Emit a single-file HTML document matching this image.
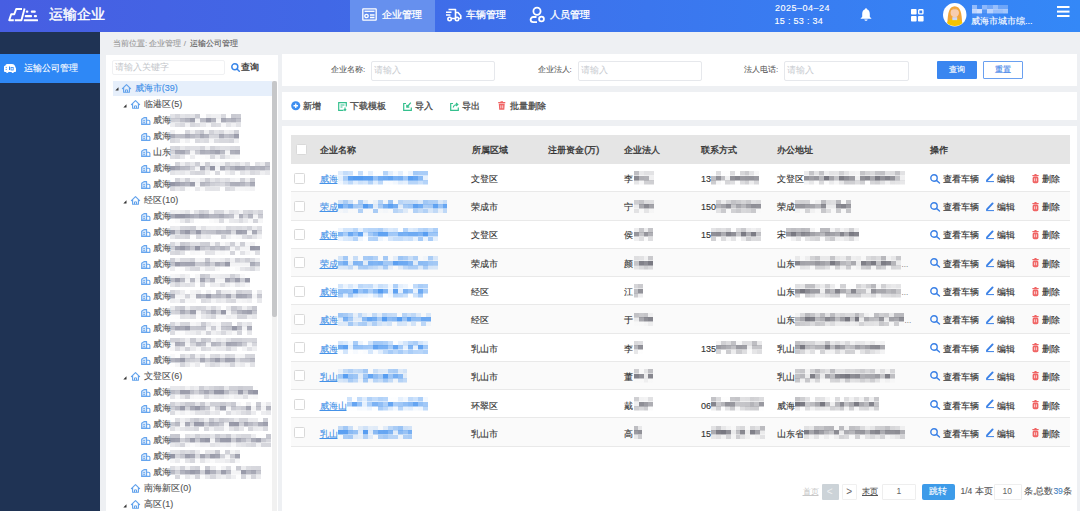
<!DOCTYPE html>
<html><head><meta charset="utf-8">
<style>
*{margin:0;padding:0;box-sizing:border-box}
html,body{width:1080px;height:511px;overflow:hidden}
body{position:relative;background:#eef0f3;font-family:"Liberation Sans",sans-serif;color:#333}
.a{position:absolute;white-space:nowrap;-webkit-text-stroke:0.12px currentColor}
.bl i{position:absolute;display:block}
svg{position:absolute;overflow:visible}
</style></head><body>

<div class="a" style="left:0px;top:0px;width:1080px;height:32px;background:linear-gradient(90deg,#475ee2 0%,#4168e6 30%,#3b76ee 60%,#3488f7 100%);"></div>
<svg style="left:4px;top:6px" width="40" height="20" viewBox="0 0 40 20"><g fill="none" stroke="#fff" stroke-width="1.9" stroke-linejoin="round"><path d="M18 3 H12.2 L10.3 8.2 H7.2 L5.2 14.2 H9.8"/><path d="M20.6 2.6 L17.4 14.3 H10.8"/></g><g fill="#fff"><rect x="21.8" y="4.6" width="2.6" height="2.2" rx="1"/><rect x="26.8" y="4.6" width="5" height="2.2" rx="1"/><rect x="20.8" y="9" width="7.2" height="2.2" rx="0.8"/><rect x="29.8" y="9" width="3.2" height="2.2" rx="1"/><rect x="19.8" y="13.2" width="14.2" height="2" rx="0.5"/></g></svg>
<div class="a" style="left:49.3px;top:5px;font-size:13.8px;line-height:20px;color:#fff;font-weight:400;-webkit-text-stroke:0.4px #fff;">运输企业</div>
<div class="a" style="left:350px;top:0px;width:85px;height:32px;background:#6690ee;"></div>
<svg style="left:362px;top:8px" width="15" height="13" viewBox="0 0 15 13"><g fill="none" stroke="#fff" stroke-width="1.3"><rect x="0.8" y="0.8" width="13.4" height="11.4" rx="0.5"/><path d="M2.5 3.3 H12.5"/><circle cx="4.5" cy="8" r="1.7"/><path d="M8 7 H12.5 M8 9.5 H12.5"/></g></svg>
<div class="a" style="left:381.5px;top:7.5px;font-size:10.2px;line-height:14px;color:#fff;font-weight:400;-webkit-text-stroke:0.3px #fff;">企业管理</div>
<svg style="left:445px;top:8px" width="17" height="14" viewBox="0 0 17 14"><g fill="none" stroke="#fff" stroke-width="1.6" stroke-linejoin="round"><path d="M3.5 1.5 H10.5 V10.5 H6.5"/><path d="M10.5 4.5 H13 L15.8 7.8 V10.5 H14.2"/><circle cx="4.6" cy="11" r="1.7"/><circle cx="12" cy="11" r="1.7"/><path d="M1 4.3 H6.5 M1 7 H5.5 M2.5 10.5 H2.9"/></g></svg>
<div class="a" style="left:465.5px;top:7.5px;font-size:10.2px;line-height:14px;color:#fff;font-weight:400;-webkit-text-stroke:0.3px #fff;">车辆管理</div>
<svg style="left:529px;top:6px" width="17" height="17" viewBox="0 0 17 17"><g fill="none" stroke="#fff" stroke-width="1.8"><circle cx="8" cy="5.3" r="3.6"/><path d="M7.5 11 H4.2 A2.6 2.6 0 0 0 4.2 16.2 H8"/><circle cx="12.5" cy="13" r="2.4"/></g></svg>
<div class="a" style="left:549.5px;top:7.5px;font-size:10.2px;line-height:14px;color:#fff;font-weight:400;-webkit-text-stroke:0.3px #fff;">人员管理</div>
<div class="a" style="left:775px;top:1.5px;font-size:9px;line-height:13px;color:#fff;font-weight:400;letter-spacing:0.5px">2025–04–24</div>
<div class="a" style="left:774.5px;top:15px;font-size:9px;line-height:13px;color:#fff;font-weight:400;letter-spacing:0.3px">15 : 53 : 34</div>
<svg style="left:860px;top:8px" width="12" height="13" viewBox="0 0 12 13"><path fill="#fff" d="M6 0.3 C6.8 0.3 7 1 7 1.3 C9 2 9.8 3.8 9.8 6 V8.8 L11.6 10.8 H0.4 L2.2 8.8 V6 C2.2 3.8 3 2 5 1.3 C5 1 5.2 0.3 6 0.3 Z M4.3 11.5 H7.7 C7.5 12.4 6.8 12.8 6 12.8 C5.2 12.8 4.5 12.4 4.3 11.5Z"/></svg>
<svg style="left:911px;top:8.5px" width="13" height="13" viewBox="0 0 13 13"><g fill="#fff"><rect x="0" y="0" width="5.6" height="5.6" rx="0.8"/><rect x="0" y="7" width="5.6" height="5.6" rx="0.8"/><rect x="7" y="7" width="5.6" height="5.6" rx="0.8"/></g><rect x="7.7" y="0.7" width="4.2" height="4.2" rx="0.6" fill="none" stroke="#fff" stroke-width="1.4"/></svg>
<svg style="left:942.5px;top:3px" width="23.5" height="23.5" viewBox="0 0 24 24"><circle cx="12" cy="12" r="12" fill="#fff"/><clipPath id="cav"><circle cx="12" cy="12" r="11.5"/></clipPath><g clip-path="url(#cav)"><path d="M4.5 20 C5 10 6 3.5 12 3.2 C18 3.5 19 10 19.5 20 Z" fill="#f2a53a"/><ellipse cx="12" cy="10" rx="4.3" ry="4.6" fill="#f7cdb0"/><path d="M7.5 8 C8 4.5 16 4.5 16.5 8 C14 6 10 6 7.5 8Z" fill="#f0a030"/><path d="M3 25 C3.5 18 7 16 12 16 C17 16 20.5 18 21 25Z" fill="#f5c400"/><rect x="9.5" y="14.5" width="5" height="3" fill="#cfd8f5"/></g></svg>
<div class="a" style="left:972.0px;top:4.8px;width:36.0px;height:13.5px;background:linear-gradient(90deg,rgba(215,228,255,0.58) 0px 5px,rgba(215,228,255,0.09) 5px 10px,rgba(215,228,255,0.55) 10px 15px,rgba(215,228,255,0.39) 15px 21px,rgba(215,228,255,0.61) 21px 26px,rgba(215,228,255,0.35) 26px 31px,rgba(215,228,255,0.35) 31px 36px) 0 0.0px/100% 4.5px no-repeat,linear-gradient(90deg,rgba(215,228,255,0.84) 0px 5px,rgba(215,228,255,0.94) 5px 10px,rgba(215,228,255,0.18) 10px 15px,rgba(215,228,255,0.82) 15px 21px,rgba(215,228,255,0.61) 21px 26px,rgba(215,228,255,0.62) 26px 31px,rgba(215,228,255,0.68) 31px 36px) 0 4.5px/100% 4.5px no-repeat,linear-gradient(90deg,rgba(215,228,255,0.07) 0px 5px,rgba(215,228,255,0.13) 5px 10px,rgba(215,228,255,0.10) 10px 15px,rgba(215,228,255,0.10) 15px 21px,rgba(215,228,255,0.04) 21px 26px,rgba(215,228,255,0.00) 26px 31px,rgba(215,228,255,0.00) 31px 36px) 0 9.0px/100% 4.5px no-repeat;filter:blur(0.6px)"></div>
<div class="a" style="left:971px;top:15px;font-size:9.2px;line-height:12px;color:#fff;font-weight:400;">威海市城市综...</div>
<svg style="left:1057px;top:6px" width="12.5" height="11" viewBox="0 0 12.5 11"><g fill="#fff"><rect x="0" y="0" width="12.5" height="2"/><rect x="0" y="4.6" width="12.5" height="2"/><rect x="0" y="9" width="12.5" height="2"/></g></svg>
<div class="a" style="left:0px;top:32px;width:100px;height:479px;background:#1f3354;"></div>
<div class="a" style="left:0px;top:54px;width:100px;height:29px;background:#2e88f6;"></div>
<svg style="left:4px;top:64px" width="12" height="9" viewBox="0 0 12 9"><path fill="#fff" d="M1.5 1.5 C1.5 0.5 2.5 0 3.5 0 H8 C9.5 0 10.5 0.8 11 2 L12 4.5 V7 C12 7.6 11.6 8 11 8 H10 A1.3 1.3 0 0 1 7.5 8 H4.5 A1.3 1.3 0 0 1 2 8 H1.2 C0.5 8 0 7.5 0 7 V3 C0 2 0.6 1.6 1.5 1.5Z"/><g fill="#2e88f6"><circle cx="2.2" cy="3.3" r="0.6"/><circle cx="2.2" cy="5.3" r="0.6"/><rect x="5" y="2.5" width="1" height="3.5"/><rect x="7" y="3.5" width="2.2" height="2.5" fill="none" stroke="#2e88f6" stroke-width="0.8"/></g></svg>
<div class="a" style="left:23.5px;top:62px;font-size:9px;line-height:12px;color:#fff;font-weight:400;">运输公司管理</div>
<div class="a" style="left:113px;top:38px;font-size:8px;line-height:12px;color:#9a9a9a;font-weight:400;">当前位置: 企业管理 / <span style="color:#5a5a5a;margin-left:2px">运输公司管理</span></div>
<div class="a" style="left:106px;top:55px;width:172px;height:456px;background:#fff;"></div>
<div class="a" style="left:112px;top:60px;width:113px;height:14.5px;background:#fff;border:1px solid #f0f1f3;border-radius:2px"></div>
<div class="a" style="left:115px;top:61px;font-size:8.5px;line-height:12px;color:#c4c7cc;font-weight:400;-webkit-text-stroke:0.01px #c4c7cc;">请输入关键字</div>
<svg style="left:231px;top:62.5px" width="9" height="9" viewBox="0 0 9 9"><g fill="none" stroke="#3a86e8" stroke-width="1.5"><circle cx="3.8" cy="3.8" r="3"/><path d="M6 6 L8.3 8.3" stroke-linecap="round"/></g></svg>
<div class="a" style="left:241px;top:61px;font-size:9px;line-height:12px;color:#383838;font-weight:400;-webkit-text-stroke:0.35px #383838;">查询</div>
<div class="a" style="left:112.5px;top:81px;width:160px;height:15px;background:#e6effb;"></div>
<div class="a" style="left:272px;top:81px;width:5px;height:430px;background:#f1f1f1;"></div>
<div class="a" style="left:272.3px;top:80.5px;width:4.5px;height:236px;background:#c6c7c9;border-radius:2px"></div>
<svg style="left:114.5px;top:87px" width="4" height="4" viewBox="0 0 4 4"><path d="M3.5 0.3 V3.5 H0.3Z" fill="#333"/></svg>
<svg style="left:121.8px;top:84px" width="9" height="9" viewBox="0 0 9 9"><path d="M0.4 4.6 L4.5 0.7 L8.6 4.6 M1.6 3.6 V8.2 H7.4 V3.6" fill="none" stroke="#62a2ec" stroke-width="1.15" stroke-linejoin="round" stroke-linecap="round"/><path d="M3.5 8.2 V5.9 H5.5 V8.2" fill="none" stroke="#62a2ec" stroke-width="1"/></svg>
<div class="a" style="left:134.8px;top:82px;font-size:9px;line-height:13px;color:#3d8ee8;font-weight:400;">威海市(39)</div>
<svg style="left:123px;top:103.5px" width="4" height="4" viewBox="0 0 4 4"><path d="M3.5 0.3 V3.5 H0.3Z" fill="#333"/></svg>
<svg style="left:131px;top:100.0px" width="9" height="9" viewBox="0 0 9 9"><path d="M0.4 4.6 L4.5 0.7 L8.6 4.6 M1.6 3.6 V8.2 H7.4 V3.6" fill="none" stroke="#62a2ec" stroke-width="1.15" stroke-linejoin="round" stroke-linecap="round"/><path d="M3.5 8.2 V5.9 H5.5 V8.2" fill="none" stroke="#62a2ec" stroke-width="1"/></svg>
<div class="a" style="left:144.3px;top:98.0px;font-size:9px;line-height:13px;color:#555;font-weight:400;">临港区(5)</div>
<svg style="left:140.5px;top:116.5px" width="9.5" height="8" viewBox="0 0 9.5 8"><path d="M0.7 7.4 V2.2 L3 0.6 H5.6 V7.4 Z" fill="#d6e7fb" stroke="#66a5ee" stroke-width="1.1" stroke-linejoin="round"/><path d="M5.6 3.2 H7.6 C8.4 3.2 8.9 3.7 8.9 4.5 V7.4 H0.5" fill="none" stroke="#66a5ee" stroke-width="1.1"/><path d="M2.2 3.6 H4 M2.2 5.4 H4" stroke="#66a5ee" stroke-width="0.9"/></svg>
<div class="a" style="left:153px;top:114.0px;font-size:9px;line-height:13px;color:#555;font-weight:400;">威海</div>
<div class="a" style="left:170.0px;top:113.8px;width:71.0px;height:13.5px;background:linear-gradient(90deg,rgba(130,132,150,0.23) 0px 5px,rgba(130,132,150,0.33) 5px 10px,rgba(130,132,150,0.22) 10px 15px,rgba(130,132,150,0.26) 15px 20px,rgba(130,132,150,0.23) 20px 25px,rgba(130,132,150,0.42) 25px 30px,rgba(130,132,150,0.01) 30px 36px,rgba(130,132,150,0.17) 36px 41px,rgba(130,132,150,0.13) 41px 46px,rgba(130,132,150,0.13) 46px 51px,rgba(130,132,150,0.30) 51px 56px,rgba(130,132,150,0.01) 56px 61px,rgba(130,132,150,0.43) 61px 66px,rgba(130,132,150,0.41) 66px 71px) 0 0.0px/100% 4.5px no-repeat,linear-gradient(90deg,rgba(130,132,150,0.39) 0px 5px,rgba(130,132,150,0.37) 5px 10px,rgba(130,132,150,0.52) 10px 15px,rgba(130,132,150,0.61) 15px 20px,rgba(130,132,150,0.76) 20px 25px,rgba(130,132,150,0.09) 25px 30px,rgba(130,132,150,0.55) 30px 36px,rgba(130,132,150,0.80) 36px 41px,rgba(130,132,150,0.60) 41px 46px,rgba(130,132,150,0.09) 46px 51px,rgba(130,132,150,0.69) 51px 56px,rgba(130,132,150,0.58) 56px 61px,rgba(130,132,150,0.62) 61px 66px,rgba(130,132,150,0.49) 66px 71px) 0 4.5px/100% 4.5px no-repeat,linear-gradient(90deg,rgba(130,132,150,0.14) 0px 5px,rgba(130,132,150,0.27) 5px 10px,rgba(130,132,150,0.31) 10px 15px,rgba(130,132,150,0.10) 15px 20px,rgba(130,132,150,0.32) 20px 25px,rgba(130,132,150,0.27) 25px 30px,rgba(130,132,150,0.18) 30px 36px,rgba(130,132,150,0.07) 36px 41px,rgba(130,132,150,0.30) 41px 46px,rgba(130,132,150,0.27) 46px 51px,rgba(130,132,150,0.06) 51px 56px,rgba(130,132,150,0.22) 56px 61px,rgba(130,132,150,0.12) 61px 66px,rgba(130,132,150,0.23) 66px 71px) 0 9.0px/100% 4.5px no-repeat;filter:blur(0.7px)"></div>
<svg style="left:140.5px;top:132.5px" width="9.5" height="8" viewBox="0 0 9.5 8"><path d="M0.7 7.4 V2.2 L3 0.6 H5.6 V7.4 Z" fill="#d6e7fb" stroke="#66a5ee" stroke-width="1.1" stroke-linejoin="round"/><path d="M5.6 3.2 H7.6 C8.4 3.2 8.9 3.7 8.9 4.5 V7.4 H0.5" fill="none" stroke="#66a5ee" stroke-width="1.1"/><path d="M2.2 3.6 H4 M2.2 5.4 H4" stroke="#66a5ee" stroke-width="0.9"/></svg>
<div class="a" style="left:153px;top:130.0px;font-size:9px;line-height:13px;color:#555;font-weight:400;">威海</div>
<div class="a" style="left:170.0px;top:129.8px;width:69.0px;height:13.5px;background:linear-gradient(90deg,rgba(130,132,150,0.13) 0px 5px,rgba(130,132,150,0.01) 5px 10px,rgba(130,132,150,0.01) 10px 15px,rgba(130,132,150,0.32) 15px 20px,rgba(130,132,150,0.14) 20px 25px,rgba(130,132,150,0.33) 25px 30px,rgba(130,132,150,0.44) 30px 34px,rgba(130,132,150,0.13) 34px 39px,rgba(130,132,150,0.36) 39px 44px,rgba(130,132,150,0.24) 44px 49px,rgba(130,132,150,0.30) 49px 54px,rgba(130,132,150,0.13) 54px 59px,rgba(130,132,150,0.17) 59px 64px,rgba(130,132,150,0.38) 64px 69px) 0 0.0px/100% 4.5px no-repeat,linear-gradient(90deg,rgba(130,132,150,0.67) 0px 5px,rgba(130,132,150,0.52) 5px 10px,rgba(130,132,150,0.53) 10px 15px,rgba(130,132,150,0.67) 15px 20px,rgba(130,132,150,0.56) 20px 25px,rgba(130,132,150,0.49) 25px 30px,rgba(130,132,150,0.69) 30px 34px,rgba(130,132,150,0.61) 34px 39px,rgba(130,132,150,0.32) 39px 44px,rgba(130,132,150,0.34) 44px 49px,rgba(130,132,150,0.68) 49px 54px,rgba(130,132,150,0.50) 54px 59px,rgba(130,132,150,0.56) 59px 64px,rgba(130,132,150,0.78) 64px 69px) 0 4.5px/100% 4.5px no-repeat,linear-gradient(90deg,rgba(130,132,150,0.31) 0px 5px,rgba(130,132,150,0.25) 5px 10px,rgba(130,132,150,0.05) 10px 15px,rgba(130,132,150,0.13) 15px 20px,rgba(130,132,150,0.01) 20px 25px,rgba(130,132,150,0.30) 25px 30px,rgba(130,132,150,0.25) 30px 34px,rgba(130,132,150,0.29) 34px 39px,rgba(130,132,150,0.07) 39px 44px,rgba(130,132,150,0.28) 44px 49px,rgba(130,132,150,0.31) 49px 54px,rgba(130,132,150,0.31) 54px 59px,rgba(130,132,150,0.34) 59px 64px,rgba(130,132,150,0.13) 64px 69px) 0 9.0px/100% 4.5px no-repeat;filter:blur(0.7px)"></div>
<svg style="left:140.5px;top:148.5px" width="9.5" height="8" viewBox="0 0 9.5 8"><path d="M0.7 7.4 V2.2 L3 0.6 H5.6 V7.4 Z" fill="#d6e7fb" stroke="#66a5ee" stroke-width="1.1" stroke-linejoin="round"/><path d="M5.6 3.2 H7.6 C8.4 3.2 8.9 3.7 8.9 4.5 V7.4 H0.5" fill="none" stroke="#66a5ee" stroke-width="1.1"/><path d="M2.2 3.6 H4 M2.2 5.4 H4" stroke="#66a5ee" stroke-width="0.9"/></svg>
<div class="a" style="left:153px;top:146.0px;font-size:9px;line-height:13px;color:#555;font-weight:400;">山东</div>
<div class="a" style="left:170.0px;top:145.8px;width:70.0px;height:13.5px;background:linear-gradient(90deg,rgba(130,132,150,0.30) 0px 5px,rgba(130,132,150,0.34) 5px 10px,rgba(130,132,150,0.20) 10px 15px,rgba(130,132,150,0.28) 15px 20px,rgba(130,132,150,0.26) 20px 25px,rgba(130,132,150,0.26) 25px 30px,rgba(130,132,150,0.34) 30px 35px,rgba(130,132,150,0.14) 35px 40px,rgba(130,132,150,0.37) 40px 45px,rgba(130,132,150,0.29) 45px 50px,rgba(130,132,150,0.25) 50px 55px,rgba(130,132,150,0.26) 55px 60px,rgba(130,132,150,0.30) 60px 65px,rgba(130,132,150,0.32) 65px 70px) 0 0.0px/100% 4.5px no-repeat,linear-gradient(90deg,rgba(130,132,150,0.35) 0px 5px,rgba(130,132,150,0.68) 5px 10px,rgba(130,132,150,0.71) 10px 15px,rgba(130,132,150,0.52) 15px 20px,rgba(130,132,150,0.09) 20px 25px,rgba(130,132,150,0.41) 25px 30px,rgba(130,132,150,0.65) 30px 35px,rgba(130,132,150,0.61) 35px 40px,rgba(130,132,150,0.67) 40px 45px,rgba(130,132,150,0.75) 45px 50px,rgba(130,132,150,0.56) 50px 55px,rgba(130,132,150,0.09) 55px 60px,rgba(130,132,150,0.64) 60px 65px,rgba(130,132,150,0.68) 65px 70px) 0 4.5px/100% 4.5px no-repeat,linear-gradient(90deg,rgba(130,132,150,0.27) 0px 5px,rgba(130,132,150,0.32) 5px 10px,rgba(130,132,150,0.20) 10px 15px,rgba(130,132,150,0.01) 15px 20px,rgba(130,132,150,0.15) 20px 25px,rgba(130,132,150,0.01) 25px 30px,rgba(130,132,150,0.01) 30px 35px,rgba(130,132,150,0.04) 35px 40px,rgba(130,132,150,0.31) 40px 45px,rgba(130,132,150,0.10) 45px 50px,rgba(130,132,150,0.33) 50px 55px,rgba(130,132,150,0.17) 55px 60px,rgba(130,132,150,0.09) 60px 65px,rgba(130,132,150,0.07) 65px 70px) 0 9.0px/100% 4.5px no-repeat;filter:blur(0.7px)"></div>
<svg style="left:140.5px;top:164.5px" width="9.5" height="8" viewBox="0 0 9.5 8"><path d="M0.7 7.4 V2.2 L3 0.6 H5.6 V7.4 Z" fill="#d6e7fb" stroke="#66a5ee" stroke-width="1.1" stroke-linejoin="round"/><path d="M5.6 3.2 H7.6 C8.4 3.2 8.9 3.7 8.9 4.5 V7.4 H0.5" fill="none" stroke="#66a5ee" stroke-width="1.1"/><path d="M2.2 3.6 H4 M2.2 5.4 H4" stroke="#66a5ee" stroke-width="0.9"/></svg>
<div class="a" style="left:153px;top:162.0px;font-size:9px;line-height:13px;color:#555;font-weight:400;">威海</div>
<div class="a" style="left:170.0px;top:161.8px;width:100.0px;height:13.5px;background:linear-gradient(90deg,rgba(130,132,150,0.01) 0px 5px,rgba(130,132,150,0.34) 5px 10px,rgba(130,132,150,0.14) 10px 15px,rgba(130,132,150,0.29) 15px 20px,rgba(130,132,150,0.20) 20px 25px,rgba(130,132,150,0.40) 25px 30px,rgba(130,132,150,0.08) 30px 35px,rgba(130,132,150,0.38) 35px 40px,rgba(130,132,150,0.14) 40px 45px,rgba(130,132,150,0.10) 45px 50px,rgba(130,132,150,0.12) 50px 55px,rgba(130,132,150,0.34) 55px 60px,rgba(130,132,150,0.22) 60px 65px,rgba(130,132,150,0.28) 65px 70px,rgba(130,132,150,0.15) 70px 75px,rgba(130,132,150,0.28) 75px 80px,rgba(130,132,150,0.01) 80px 85px,rgba(130,132,150,0.24) 85px 90px,rgba(130,132,150,0.16) 90px 95px,rgba(130,132,150,0.44) 95px 100px) 0 0.0px/100% 4.5px no-repeat,linear-gradient(90deg,rgba(130,132,150,0.79) 0px 5px,rgba(130,132,150,0.69) 5px 10px,rgba(130,132,150,0.56) 10px 15px,rgba(130,132,150,0.53) 15px 20px,rgba(130,132,150,0.35) 20px 25px,rgba(130,132,150,0.09) 25px 30px,rgba(130,132,150,0.75) 30px 35px,rgba(130,132,150,0.35) 35px 40px,rgba(130,132,150,0.85) 40px 45px,rgba(130,132,150,0.09) 45px 50px,rgba(130,132,150,0.72) 50px 55px,rgba(130,132,150,0.46) 55px 60px,rgba(130,132,150,0.63) 60px 65px,rgba(130,132,150,0.75) 65px 70px,rgba(130,132,150,0.71) 70px 75px,rgba(130,132,150,0.54) 75px 80px,rgba(130,132,150,0.66) 80px 85px,rgba(130,132,150,0.60) 85px 90px,rgba(130,132,150,0.64) 90px 95px,rgba(130,132,150,0.51) 95px 100px) 0 4.5px/100% 4.5px no-repeat,linear-gradient(90deg,rgba(130,132,150,0.23) 0px 5px,rgba(130,132,150,0.18) 5px 10px,rgba(130,132,150,0.20) 10px 15px,rgba(130,132,150,0.13) 15px 20px,rgba(130,132,150,0.30) 20px 25px,rgba(130,132,150,0.34) 25px 30px,rgba(130,132,150,0.32) 30px 35px,rgba(130,132,150,0.14) 35px 40px,rgba(130,132,150,0.03) 40px 45px,rgba(130,132,150,0.31) 45px 50px,rgba(130,132,150,0.01) 50px 55px,rgba(130,132,150,0.13) 55px 60px,rgba(130,132,150,0.23) 60px 65px,rgba(130,132,150,0.03) 65px 70px,rgba(130,132,150,0.23) 70px 75px,rgba(130,132,150,0.16) 75px 80px,rgba(130,132,150,0.31) 80px 85px,rgba(130,132,150,0.26) 85px 90px,rgba(130,132,150,0.13) 90px 95px,rgba(130,132,150,0.19) 95px 100px) 0 9.0px/100% 4.5px no-repeat;filter:blur(0.7px)"></div>
<svg style="left:140.5px;top:180.5px" width="9.5" height="8" viewBox="0 0 9.5 8"><path d="M0.7 7.4 V2.2 L3 0.6 H5.6 V7.4 Z" fill="#d6e7fb" stroke="#66a5ee" stroke-width="1.1" stroke-linejoin="round"/><path d="M5.6 3.2 H7.6 C8.4 3.2 8.9 3.7 8.9 4.5 V7.4 H0.5" fill="none" stroke="#66a5ee" stroke-width="1.1"/><path d="M2.2 3.6 H4 M2.2 5.4 H4" stroke="#66a5ee" stroke-width="0.9"/></svg>
<div class="a" style="left:153px;top:178.0px;font-size:9px;line-height:13px;color:#555;font-weight:400;">威海</div>
<div class="a" style="left:170.0px;top:177.8px;width:85.0px;height:13.5px;background:linear-gradient(90deg,rgba(130,132,150,0.01) 0px 5px,rgba(130,132,150,0.34) 5px 10px,rgba(130,132,150,0.18) 10px 15px,rgba(130,132,150,0.37) 15px 20px,rgba(130,132,150,0.12) 20px 25px,rgba(130,132,150,0.10) 25px 30px,rgba(130,132,150,0.18) 30px 35px,rgba(130,132,150,0.39) 35px 40px,rgba(130,132,150,0.21) 40px 45px,rgba(130,132,150,0.30) 45px 50px,rgba(130,132,150,0.21) 50px 55px,rgba(130,132,150,0.26) 55px 60px,rgba(130,132,150,0.12) 60px 65px,rgba(130,132,150,0.09) 65px 70px,rgba(130,132,150,0.37) 70px 75px,rgba(130,132,150,0.15) 75px 80px,rgba(130,132,150,0.42) 80px 85px) 0 0.0px/100% 4.5px no-repeat,linear-gradient(90deg,rgba(130,132,150,0.85) 0px 5px,rgba(130,132,150,0.76) 5px 10px,rgba(130,132,150,0.67) 10px 15px,rgba(130,132,150,0.60) 15px 20px,rgba(130,132,150,0.80) 20px 25px,rgba(130,132,150,0.09) 25px 30px,rgba(130,132,150,0.59) 30px 35px,rgba(130,132,150,0.51) 35px 40px,rgba(130,132,150,0.39) 40px 45px,rgba(130,132,150,0.35) 45px 50px,rgba(130,132,150,0.31) 50px 55px,rgba(130,132,150,0.43) 55px 60px,rgba(130,132,150,0.64) 60px 65px,rgba(130,132,150,0.65) 65px 70px,rgba(130,132,150,0.59) 70px 75px,rgba(130,132,150,0.47) 75px 80px,rgba(130,132,150,0.68) 80px 85px) 0 4.5px/100% 4.5px no-repeat,linear-gradient(90deg,rgba(130,132,150,0.31) 0px 5px,rgba(130,132,150,0.19) 5px 10px,rgba(130,132,150,0.26) 10px 15px,rgba(130,132,150,0.03) 15px 20px,rgba(130,132,150,0.01) 20px 25px,rgba(130,132,150,0.18) 25px 30px,rgba(130,132,150,0.05) 30px 35px,rgba(130,132,150,0.21) 35px 40px,rgba(130,132,150,0.22) 40px 45px,rgba(130,132,150,0.21) 45px 50px,rgba(130,132,150,0.01) 50px 55px,rgba(130,132,150,0.30) 55px 60px,rgba(130,132,150,0.25) 60px 65px,rgba(130,132,150,0.07) 65px 70px,rgba(130,132,150,0.08) 70px 75px,rgba(130,132,150,0.09) 75px 80px,rgba(130,132,150,0.10) 80px 85px) 0 9.0px/100% 4.5px no-repeat;filter:blur(0.7px)"></div>
<svg style="left:123px;top:199.5px" width="4" height="4" viewBox="0 0 4 4"><path d="M3.5 0.3 V3.5 H0.3Z" fill="#333"/></svg>
<svg style="left:131px;top:196.0px" width="9" height="9" viewBox="0 0 9 9"><path d="M0.4 4.6 L4.5 0.7 L8.6 4.6 M1.6 3.6 V8.2 H7.4 V3.6" fill="none" stroke="#62a2ec" stroke-width="1.15" stroke-linejoin="round" stroke-linecap="round"/><path d="M3.5 8.2 V5.9 H5.5 V8.2" fill="none" stroke="#62a2ec" stroke-width="1"/></svg>
<div class="a" style="left:144.3px;top:194.0px;font-size:9px;line-height:13px;color:#555;font-weight:400;">经区(10)</div>
<svg style="left:140.5px;top:212.5px" width="9.5" height="8" viewBox="0 0 9.5 8"><path d="M0.7 7.4 V2.2 L3 0.6 H5.6 V7.4 Z" fill="#d6e7fb" stroke="#66a5ee" stroke-width="1.1" stroke-linejoin="round"/><path d="M5.6 3.2 H7.6 C8.4 3.2 8.9 3.7 8.9 4.5 V7.4 H0.5" fill="none" stroke="#66a5ee" stroke-width="1.1"/><path d="M2.2 3.6 H4 M2.2 5.4 H4" stroke="#66a5ee" stroke-width="0.9"/></svg>
<div class="a" style="left:153px;top:210.0px;font-size:9px;line-height:13px;color:#555;font-weight:400;">威海</div>
<div class="a" style="left:170.0px;top:209.8px;width:93.0px;height:13.5px;background:linear-gradient(90deg,rgba(130,132,150,0.13) 0px 5px,rgba(130,132,150,0.11) 5px 10px,rgba(130,132,150,0.16) 10px 15px,rgba(130,132,150,0.23) 15px 20px,rgba(130,132,150,0.06) 20px 24px,rgba(130,132,150,0.23) 24px 29px,rgba(130,132,150,0.39) 29px 34px,rgba(130,132,150,0.33) 34px 39px,rgba(130,132,150,0.09) 39px 44px,rgba(130,132,150,0.32) 44px 49px,rgba(130,132,150,0.31) 49px 54px,rgba(130,132,150,0.11) 54px 59px,rgba(130,132,150,0.25) 59px 64px,rgba(130,132,150,0.20) 64px 69px,rgba(130,132,150,0.09) 69px 73px,rgba(130,132,150,0.32) 73px 78px,rgba(130,132,150,0.37) 78px 83px,rgba(130,132,150,0.27) 83px 88px,rgba(130,132,150,0.35) 88px 93px) 0 0.0px/100% 4.5px no-repeat,linear-gradient(90deg,rgba(130,132,150,0.68) 0px 5px,rgba(130,132,150,0.84) 5px 10px,rgba(130,132,150,0.85) 10px 15px,rgba(130,132,150,0.78) 15px 20px,rgba(130,132,150,0.69) 20px 24px,rgba(130,132,150,0.61) 24px 29px,rgba(130,132,150,0.75) 29px 34px,rgba(130,132,150,0.69) 34px 39px,rgba(130,132,150,0.58) 39px 44px,rgba(130,132,150,0.59) 44px 49px,rgba(130,132,150,0.67) 49px 54px,rgba(130,132,150,0.55) 54px 59px,rgba(130,132,150,0.49) 59px 64px,rgba(130,132,150,0.09) 64px 69px,rgba(130,132,150,0.65) 69px 73px,rgba(130,132,150,0.35) 73px 78px,rgba(130,132,150,0.60) 78px 83px,rgba(130,132,150,0.09) 83px 88px,rgba(130,132,150,0.42) 88px 93px) 0 4.5px/100% 4.5px no-repeat,linear-gradient(90deg,rgba(130,132,150,0.01) 0px 5px,rgba(130,132,150,0.04) 5px 10px,rgba(130,132,150,0.17) 10px 15px,rgba(130,132,150,0.32) 15px 20px,rgba(130,132,150,0.15) 20px 24px,rgba(130,132,150,0.02) 24px 29px,rgba(130,132,150,0.01) 29px 34px,rgba(130,132,150,0.01) 34px 39px,rgba(130,132,150,0.04) 39px 44px,rgba(130,132,150,0.07) 44px 49px,rgba(130,132,150,0.28) 49px 54px,rgba(130,132,150,0.03) 54px 59px,rgba(130,132,150,0.17) 59px 64px,rgba(130,132,150,0.19) 64px 69px,rgba(130,132,150,0.28) 69px 73px,rgba(130,132,150,0.17) 73px 78px,rgba(130,132,150,0.06) 78px 83px,rgba(130,132,150,0.35) 83px 88px,rgba(130,132,150,0.08) 88px 93px) 0 9.0px/100% 4.5px no-repeat;filter:blur(0.7px)"></div>
<svg style="left:140.5px;top:228.5px" width="9.5" height="8" viewBox="0 0 9.5 8"><path d="M0.7 7.4 V2.2 L3 0.6 H5.6 V7.4 Z" fill="#d6e7fb" stroke="#66a5ee" stroke-width="1.1" stroke-linejoin="round"/><path d="M5.6 3.2 H7.6 C8.4 3.2 8.9 3.7 8.9 4.5 V7.4 H0.5" fill="none" stroke="#66a5ee" stroke-width="1.1"/><path d="M2.2 3.6 H4 M2.2 5.4 H4" stroke="#66a5ee" stroke-width="0.9"/></svg>
<div class="a" style="left:153px;top:226.0px;font-size:9px;line-height:13px;color:#555;font-weight:400;">威海</div>
<div class="a" style="left:170.0px;top:225.8px;width:92.0px;height:13.5px;background:linear-gradient(90deg,rgba(130,132,150,0.18) 0px 5px,rgba(130,132,150,0.16) 5px 10px,rgba(130,132,150,0.33) 10px 15px,rgba(130,132,150,0.35) 15px 20px,rgba(130,132,150,0.40) 20px 26px,rgba(130,132,150,0.11) 26px 31px,rgba(130,132,150,0.24) 31px 36px,rgba(130,132,150,0.14) 36px 41px,rgba(130,132,150,0.13) 41px 46px,rgba(130,132,150,0.15) 46px 51px,rgba(130,132,150,0.12) 51px 56px,rgba(130,132,150,0.32) 56px 61px,rgba(130,132,150,0.28) 61px 66px,rgba(130,132,150,0.31) 66px 72px,rgba(130,132,150,0.27) 72px 77px,rgba(130,132,150,0.36) 77px 82px,rgba(130,132,150,0.17) 82px 87px,rgba(130,132,150,0.28) 87px 92px) 0 0.0px/100% 4.5px no-repeat,linear-gradient(90deg,rgba(130,132,150,0.79) 0px 5px,rgba(130,132,150,0.40) 5px 10px,rgba(130,132,150,0.69) 10px 15px,rgba(130,132,150,0.83) 15px 20px,rgba(130,132,150,0.53) 20px 26px,rgba(130,132,150,0.82) 26px 31px,rgba(130,132,150,0.44) 31px 36px,rgba(130,132,150,0.48) 36px 41px,rgba(130,132,150,0.49) 41px 46px,rgba(130,132,150,0.62) 46px 51px,rgba(130,132,150,0.57) 51px 56px,rgba(130,132,150,0.61) 56px 61px,rgba(130,132,150,0.30) 61px 66px,rgba(130,132,150,0.78) 66px 72px,rgba(130,132,150,0.73) 72px 77px,rgba(130,132,150,0.09) 77px 82px,rgba(130,132,150,0.70) 82px 87px,rgba(130,132,150,0.30) 87px 92px) 0 4.5px/100% 4.5px no-repeat,linear-gradient(90deg,rgba(130,132,150,0.18) 0px 5px,rgba(130,132,150,0.31) 5px 10px,rgba(130,132,150,0.28) 10px 15px,rgba(130,132,150,0.33) 15px 20px,rgba(130,132,150,0.01) 20px 26px,rgba(130,132,150,0.29) 26px 31px,rgba(130,132,150,0.13) 31px 36px,rgba(130,132,150,0.16) 36px 41px,rgba(130,132,150,0.02) 41px 46px,rgba(130,132,150,0.01) 46px 51px,rgba(130,132,150,0.34) 51px 56px,rgba(130,132,150,0.12) 56px 61px,rgba(130,132,150,0.04) 61px 66px,rgba(130,132,150,0.07) 66px 72px,rgba(130,132,150,0.27) 72px 77px,rgba(130,132,150,0.35) 77px 82px,rgba(130,132,150,0.22) 82px 87px,rgba(130,132,150,0.10) 87px 92px) 0 9.0px/100% 4.5px no-repeat;filter:blur(0.7px)"></div>
<svg style="left:140.5px;top:244.5px" width="9.5" height="8" viewBox="0 0 9.5 8"><path d="M0.7 7.4 V2.2 L3 0.6 H5.6 V7.4 Z" fill="#d6e7fb" stroke="#66a5ee" stroke-width="1.1" stroke-linejoin="round"/><path d="M5.6 3.2 H7.6 C8.4 3.2 8.9 3.7 8.9 4.5 V7.4 H0.5" fill="none" stroke="#66a5ee" stroke-width="1.1"/><path d="M2.2 3.6 H4 M2.2 5.4 H4" stroke="#66a5ee" stroke-width="0.9"/></svg>
<div class="a" style="left:153px;top:242.0px;font-size:9px;line-height:13px;color:#555;font-weight:400;">威海</div>
<div class="a" style="left:170.0px;top:241.8px;width:90.0px;height:13.5px;background:linear-gradient(90deg,rgba(130,132,150,0.31) 0px 5px,rgba(130,132,150,0.13) 5px 10px,rgba(130,132,150,0.44) 10px 15px,rgba(130,132,150,0.39) 15px 20px,rgba(130,132,150,0.26) 20px 25px,rgba(130,132,150,0.25) 25px 30px,rgba(130,132,150,0.39) 30px 35px,rgba(130,132,150,0.40) 35px 40px,rgba(130,132,150,0.10) 40px 45px,rgba(130,132,150,0.34) 45px 50px,rgba(130,132,150,0.06) 50px 55px,rgba(130,132,150,0.15) 55px 60px,rgba(130,132,150,0.39) 60px 65px,rgba(130,132,150,0.07) 65px 70px,rgba(130,132,150,0.40) 70px 75px,rgba(130,132,150,0.07) 75px 80px,rgba(130,132,150,0.12) 80px 85px,rgba(130,132,150,0.01) 85px 90px) 0 0.0px/100% 4.5px no-repeat,linear-gradient(90deg,rgba(130,132,150,0.37) 0px 5px,rgba(130,132,150,0.74) 5px 10px,rgba(130,132,150,0.84) 10px 15px,rgba(130,132,150,0.66) 15px 20px,rgba(130,132,150,0.46) 20px 25px,rgba(130,132,150,0.85) 25px 30px,rgba(130,132,150,0.49) 30px 35px,rgba(130,132,150,0.41) 35px 40px,rgba(130,132,150,0.59) 40px 45px,rgba(130,132,150,0.49) 45px 50px,rgba(130,132,150,0.61) 50px 55px,rgba(130,132,150,0.49) 55px 60px,rgba(130,132,150,0.09) 60px 65px,rgba(130,132,150,0.31) 65px 70px,rgba(130,132,150,0.09) 70px 75px,rgba(130,132,150,0.09) 75px 80px,rgba(130,132,150,0.84) 80px 85px,rgba(130,132,150,0.81) 85px 90px) 0 4.5px/100% 4.5px no-repeat,linear-gradient(90deg,rgba(130,132,150,0.31) 0px 5px,rgba(130,132,150,0.34) 5px 10px,rgba(130,132,150,0.24) 10px 15px,rgba(130,132,150,0.01) 15px 20px,rgba(130,132,150,0.08) 20px 25px,rgba(130,132,150,0.06) 25px 30px,rgba(130,132,150,0.03) 30px 35px,rgba(130,132,150,0.23) 35px 40px,rgba(130,132,150,0.22) 40px 45px,rgba(130,132,150,0.05) 45px 50px,rgba(130,132,150,0.07) 50px 55px,rgba(130,132,150,0.04) 55px 60px,rgba(130,132,150,0.34) 60px 65px,rgba(130,132,150,0.02) 65px 70px,rgba(130,132,150,0.24) 70px 75px,rgba(130,132,150,0.09) 75px 80px,rgba(130,132,150,0.03) 80px 85px,rgba(130,132,150,0.27) 85px 90px) 0 9.0px/100% 4.5px no-repeat;filter:blur(0.7px)"></div>
<svg style="left:140.5px;top:260.5px" width="9.5" height="8" viewBox="0 0 9.5 8"><path d="M0.7 7.4 V2.2 L3 0.6 H5.6 V7.4 Z" fill="#d6e7fb" stroke="#66a5ee" stroke-width="1.1" stroke-linejoin="round"/><path d="M5.6 3.2 H7.6 C8.4 3.2 8.9 3.7 8.9 4.5 V7.4 H0.5" fill="none" stroke="#66a5ee" stroke-width="1.1"/><path d="M2.2 3.6 H4 M2.2 5.4 H4" stroke="#66a5ee" stroke-width="0.9"/></svg>
<div class="a" style="left:153px;top:258.0px;font-size:9px;line-height:13px;color:#555;font-weight:400;">威海</div>
<div class="a" style="left:170.0px;top:257.8px;width:90.0px;height:13.5px;background:linear-gradient(90deg,rgba(130,132,150,0.39) 0px 5px,rgba(130,132,150,0.14) 5px 10px,rgba(130,132,150,0.29) 10px 15px,rgba(130,132,150,0.29) 15px 20px,rgba(130,132,150,0.36) 20px 25px,rgba(130,132,150,0.09) 25px 30px,rgba(130,132,150,0.10) 30px 35px,rgba(130,132,150,0.45) 35px 40px,rgba(130,132,150,0.15) 40px 45px,rgba(130,132,150,0.13) 45px 50px,rgba(130,132,150,0.17) 50px 55px,rgba(130,132,150,0.29) 55px 60px,rgba(130,132,150,0.12) 60px 65px,rgba(130,132,150,0.39) 65px 70px,rgba(130,132,150,0.29) 70px 75px,rgba(130,132,150,0.40) 75px 80px,rgba(130,132,150,0.30) 80px 85px,rgba(130,132,150,0.16) 85px 90px) 0 0.0px/100% 4.5px no-repeat,linear-gradient(90deg,rgba(130,132,150,0.49) 0px 5px,rgba(130,132,150,0.82) 5px 10px,rgba(130,132,150,0.71) 10px 15px,rgba(130,132,150,0.73) 15px 20px,rgba(130,132,150,0.73) 20px 25px,rgba(130,132,150,0.42) 25px 30px,rgba(130,132,150,0.45) 30px 35px,rgba(130,132,150,0.58) 35px 40px,rgba(130,132,150,0.40) 40px 45px,rgba(130,132,150,0.69) 45px 50px,rgba(130,132,150,0.56) 50px 55px,rgba(130,132,150,0.82) 55px 60px,rgba(130,132,150,0.09) 60px 65px,rgba(130,132,150,0.09) 65px 70px,rgba(130,132,150,0.09) 70px 75px,rgba(130,132,150,0.09) 75px 80px,rgba(130,132,150,0.68) 80px 85px,rgba(130,132,150,0.52) 85px 90px) 0 4.5px/100% 4.5px no-repeat,linear-gradient(90deg,rgba(130,132,150,0.15) 0px 5px,rgba(130,132,150,0.01) 5px 10px,rgba(130,132,150,0.03) 10px 15px,rgba(130,132,150,0.18) 15px 20px,rgba(130,132,150,0.29) 20px 25px,rgba(130,132,150,0.31) 25px 30px,rgba(130,132,150,0.08) 30px 35px,rgba(130,132,150,0.20) 35px 40px,rgba(130,132,150,0.20) 40px 45px,rgba(130,132,150,0.07) 45px 50px,rgba(130,132,150,0.01) 50px 55px,rgba(130,132,150,0.01) 55px 60px,rgba(130,132,150,0.01) 60px 65px,rgba(130,132,150,0.05) 65px 70px,rgba(130,132,150,0.20) 70px 75px,rgba(130,132,150,0.25) 75px 80px,rgba(130,132,150,0.32) 80px 85px,rgba(130,132,150,0.16) 85px 90px) 0 9.0px/100% 4.5px no-repeat;filter:blur(0.7px)"></div>
<svg style="left:140.5px;top:276.5px" width="9.5" height="8" viewBox="0 0 9.5 8"><path d="M0.7 7.4 V2.2 L3 0.6 H5.6 V7.4 Z" fill="#d6e7fb" stroke="#66a5ee" stroke-width="1.1" stroke-linejoin="round"/><path d="M5.6 3.2 H7.6 C8.4 3.2 8.9 3.7 8.9 4.5 V7.4 H0.5" fill="none" stroke="#66a5ee" stroke-width="1.1"/><path d="M2.2 3.6 H4 M2.2 5.4 H4" stroke="#66a5ee" stroke-width="0.9"/></svg>
<div class="a" style="left:153px;top:274.0px;font-size:9px;line-height:13px;color:#555;font-weight:400;">威海</div>
<div class="a" style="left:170.0px;top:273.8px;width:80.0px;height:13.5px;background:linear-gradient(90deg,rgba(130,132,150,0.08) 0px 5px,rgba(130,132,150,0.10) 5px 10px,rgba(130,132,150,0.18) 10px 15px,rgba(130,132,150,0.11) 15px 20px,rgba(130,132,150,0.01) 20px 25px,rgba(130,132,150,0.08) 25px 30px,rgba(130,132,150,0.44) 30px 35px,rgba(130,132,150,0.38) 35px 40px,rgba(130,132,150,0.13) 40px 45px,rgba(130,132,150,0.14) 45px 50px,rgba(130,132,150,0.17) 50px 55px,rgba(130,132,150,0.18) 55px 60px,rgba(130,132,150,0.38) 60px 65px,rgba(130,132,150,0.26) 65px 70px,rgba(130,132,150,0.06) 70px 75px,rgba(130,132,150,0.01) 75px 80px) 0 0.0px/100% 4.5px no-repeat,linear-gradient(90deg,rgba(130,132,150,0.55) 0px 5px,rgba(130,132,150,0.80) 5px 10px,rgba(130,132,150,0.54) 10px 15px,rgba(130,132,150,0.09) 15px 20px,rgba(130,132,150,0.56) 20px 25px,rgba(130,132,150,0.09) 25px 30px,rgba(130,132,150,0.73) 30px 35px,rgba(130,132,150,0.38) 35px 40px,rgba(130,132,150,0.58) 40px 45px,rgba(130,132,150,0.09) 45px 50px,rgba(130,132,150,0.09) 50px 55px,rgba(130,132,150,0.74) 55px 60px,rgba(130,132,150,0.52) 60px 65px,rgba(130,132,150,0.79) 65px 70px,rgba(130,132,150,0.41) 70px 75px,rgba(130,132,150,0.82) 75px 80px) 0 4.5px/100% 4.5px no-repeat,linear-gradient(90deg,rgba(130,132,150,0.21) 0px 5px,rgba(130,132,150,0.33) 5px 10px,rgba(130,132,150,0.22) 10px 15px,rgba(130,132,150,0.25) 15px 20px,rgba(130,132,150,0.21) 20px 25px,rgba(130,132,150,0.01) 25px 30px,rgba(130,132,150,0.32) 30px 35px,rgba(130,132,150,0.01) 35px 40px,rgba(130,132,150,0.15) 40px 45px,rgba(130,132,150,0.14) 45px 50px,rgba(130,132,150,0.27) 50px 55px,rgba(130,132,150,0.14) 55px 60px,rgba(130,132,150,0.07) 60px 65px,rgba(130,132,150,0.20) 65px 70px,rgba(130,132,150,0.14) 70px 75px,rgba(130,132,150,0.06) 75px 80px) 0 9.0px/100% 4.5px no-repeat;filter:blur(0.7px)"></div>
<svg style="left:140.5px;top:292.5px" width="9.5" height="8" viewBox="0 0 9.5 8"><path d="M0.7 7.4 V2.2 L3 0.6 H5.6 V7.4 Z" fill="#d6e7fb" stroke="#66a5ee" stroke-width="1.1" stroke-linejoin="round"/><path d="M5.6 3.2 H7.6 C8.4 3.2 8.9 3.7 8.9 4.5 V7.4 H0.5" fill="none" stroke="#66a5ee" stroke-width="1.1"/><path d="M2.2 3.6 H4 M2.2 5.4 H4" stroke="#66a5ee" stroke-width="0.9"/></svg>
<div class="a" style="left:153px;top:290.0px;font-size:9px;line-height:13px;color:#555;font-weight:400;">威海</div>
<div class="a" style="left:170.0px;top:289.8px;width:92.0px;height:13.5px;background:linear-gradient(90deg,rgba(130,132,150,0.34) 0px 5px,rgba(130,132,150,0.25) 5px 10px,rgba(130,132,150,0.14) 10px 15px,rgba(130,132,150,0.01) 15px 20px,rgba(130,132,150,0.09) 20px 26px,rgba(130,132,150,0.14) 26px 31px,rgba(130,132,150,0.01) 31px 36px,rgba(130,132,150,0.13) 36px 41px,rgba(130,132,150,0.01) 41px 46px,rgba(130,132,150,0.43) 46px 51px,rgba(130,132,150,0.17) 51px 56px,rgba(130,132,150,0.16) 56px 61px,rgba(130,132,150,0.09) 61px 66px,rgba(130,132,150,0.39) 66px 72px,rgba(130,132,150,0.32) 72px 77px,rgba(130,132,150,0.33) 77px 82px,rgba(130,132,150,0.01) 82px 87px,rgba(130,132,150,0.20) 87px 92px) 0 0.0px/100% 4.5px no-repeat,linear-gradient(90deg,rgba(130,132,150,0.69) 0px 5px,rgba(130,132,150,0.09) 5px 10px,rgba(130,132,150,0.09) 10px 15px,rgba(130,132,150,0.35) 15px 20px,rgba(130,132,150,0.09) 20px 26px,rgba(130,132,150,0.67) 26px 31px,rgba(130,132,150,0.58) 31px 36px,rgba(130,132,150,0.82) 36px 41px,rgba(130,132,150,0.53) 41px 46px,rgba(130,132,150,0.58) 46px 51px,rgba(130,132,150,0.49) 51px 56px,rgba(130,132,150,0.72) 56px 61px,rgba(130,132,150,0.35) 61px 66px,rgba(130,132,150,0.73) 66px 72px,rgba(130,132,150,0.70) 72px 77px,rgba(130,132,150,0.57) 77px 82px,rgba(130,132,150,0.09) 82px 87px,rgba(130,132,150,0.44) 87px 92px) 0 4.5px/100% 4.5px no-repeat,linear-gradient(90deg,rgba(130,132,150,0.14) 0px 5px,rgba(130,132,150,0.11) 5px 10px,rgba(130,132,150,0.30) 10px 15px,rgba(130,132,150,0.06) 15px 20px,rgba(130,132,150,0.08) 20px 26px,rgba(130,132,150,0.01) 26px 31px,rgba(130,132,150,0.29) 31px 36px,rgba(130,132,150,0.24) 36px 41px,rgba(130,132,150,0.09) 41px 46px,rgba(130,132,150,0.19) 46px 51px,rgba(130,132,150,0.15) 51px 56px,rgba(130,132,150,0.28) 56px 61px,rgba(130,132,150,0.31) 61px 66px,rgba(130,132,150,0.08) 66px 72px,rgba(130,132,150,0.10) 72px 77px,rgba(130,132,150,0.14) 77px 82px,rgba(130,132,150,0.01) 82px 87px,rgba(130,132,150,0.18) 87px 92px) 0 9.0px/100% 4.5px no-repeat;filter:blur(0.7px)"></div>
<svg style="left:140.5px;top:308.5px" width="9.5" height="8" viewBox="0 0 9.5 8"><path d="M0.7 7.4 V2.2 L3 0.6 H5.6 V7.4 Z" fill="#d6e7fb" stroke="#66a5ee" stroke-width="1.1" stroke-linejoin="round"/><path d="M5.6 3.2 H7.6 C8.4 3.2 8.9 3.7 8.9 4.5 V7.4 H0.5" fill="none" stroke="#66a5ee" stroke-width="1.1"/><path d="M2.2 3.6 H4 M2.2 5.4 H4" stroke="#66a5ee" stroke-width="0.9"/></svg>
<div class="a" style="left:153px;top:306.0px;font-size:9px;line-height:13px;color:#555;font-weight:400;">威海</div>
<div class="a" style="left:170.0px;top:305.8px;width:87.0px;height:13.5px;background:linear-gradient(90deg,rgba(130,132,150,0.17) 0px 5px,rgba(130,132,150,0.39) 5px 10px,rgba(130,132,150,0.44) 10px 15px,rgba(130,132,150,0.15) 15px 20px,rgba(130,132,150,0.31) 20px 26px,rgba(130,132,150,0.35) 26px 31px,rgba(130,132,150,0.32) 31px 36px,rgba(130,132,150,0.17) 36px 41px,rgba(130,132,150,0.32) 41px 46px,rgba(130,132,150,0.17) 46px 51px,rgba(130,132,150,0.01) 51px 56px,rgba(130,132,150,0.18) 56px 61px,rgba(130,132,150,0.43) 61px 67px,rgba(130,132,150,0.32) 67px 72px,rgba(130,132,150,0.13) 72px 77px,rgba(130,132,150,0.27) 77px 82px,rgba(130,132,150,0.45) 82px 87px) 0 0.0px/100% 4.5px no-repeat,linear-gradient(90deg,rgba(130,132,150,0.34) 0px 5px,rgba(130,132,150,0.38) 5px 10px,rgba(130,132,150,0.67) 10px 15px,rgba(130,132,150,0.51) 15px 20px,rgba(130,132,150,0.78) 20px 26px,rgba(130,132,150,0.09) 26px 31px,rgba(130,132,150,0.33) 31px 36px,rgba(130,132,150,0.48) 36px 41px,rgba(130,132,150,0.68) 41px 46px,rgba(130,132,150,0.39) 46px 51px,rgba(130,132,150,0.84) 51px 56px,rgba(130,132,150,0.09) 56px 61px,rgba(130,132,150,0.36) 61px 67px,rgba(130,132,150,0.60) 67px 72px,rgba(130,132,150,0.71) 72px 77px,rgba(130,132,150,0.76) 77px 82px,rgba(130,132,150,0.46) 82px 87px) 0 4.5px/100% 4.5px no-repeat,linear-gradient(90deg,rgba(130,132,150,0.01) 0px 5px,rgba(130,132,150,0.02) 5px 10px,rgba(130,132,150,0.24) 10px 15px,rgba(130,132,150,0.21) 15px 20px,rgba(130,132,150,0.26) 20px 26px,rgba(130,132,150,0.03) 26px 31px,rgba(130,132,150,0.17) 31px 36px,rgba(130,132,150,0.24) 36px 41px,rgba(130,132,150,0.33) 41px 46px,rgba(130,132,150,0.08) 46px 51px,rgba(130,132,150,0.08) 51px 56px,rgba(130,132,150,0.15) 56px 61px,rgba(130,132,150,0.11) 61px 67px,rgba(130,132,150,0.34) 67px 72px,rgba(130,132,150,0.34) 72px 77px,rgba(130,132,150,0.14) 77px 82px,rgba(130,132,150,0.20) 82px 87px) 0 9.0px/100% 4.5px no-repeat;filter:blur(0.7px)"></div>
<svg style="left:140.5px;top:324.5px" width="9.5" height="8" viewBox="0 0 9.5 8"><path d="M0.7 7.4 V2.2 L3 0.6 H5.6 V7.4 Z" fill="#d6e7fb" stroke="#66a5ee" stroke-width="1.1" stroke-linejoin="round"/><path d="M5.6 3.2 H7.6 C8.4 3.2 8.9 3.7 8.9 4.5 V7.4 H0.5" fill="none" stroke="#66a5ee" stroke-width="1.1"/><path d="M2.2 3.6 H4 M2.2 5.4 H4" stroke="#66a5ee" stroke-width="0.9"/></svg>
<div class="a" style="left:153px;top:322.0px;font-size:9px;line-height:13px;color:#555;font-weight:400;">威海</div>
<div class="a" style="left:170.0px;top:321.8px;width:82.0px;height:13.5px;background:linear-gradient(90deg,rgba(130,132,150,0.32) 0px 5px,rgba(130,132,150,0.14) 5px 10px,rgba(130,132,150,0.32) 10px 15px,rgba(130,132,150,0.33) 15px 20px,rgba(130,132,150,0.07) 20px 26px,rgba(130,132,150,0.12) 26px 31px,rgba(130,132,150,0.42) 31px 36px,rgba(130,132,150,0.21) 36px 41px,rgba(130,132,150,0.11) 41px 46px,rgba(130,132,150,0.07) 46px 51px,rgba(130,132,150,0.33) 51px 56px,rgba(130,132,150,0.35) 56px 62px,rgba(130,132,150,0.01) 62px 67px,rgba(130,132,150,0.31) 67px 72px,rgba(130,132,150,0.17) 72px 77px,rgba(130,132,150,0.23) 77px 82px) 0 0.0px/100% 4.5px no-repeat,linear-gradient(90deg,rgba(130,132,150,0.50) 0px 5px,rgba(130,132,150,0.73) 5px 10px,rgba(130,132,150,0.68) 10px 15px,rgba(130,132,150,0.80) 15px 20px,rgba(130,132,150,0.44) 20px 26px,rgba(130,132,150,0.46) 26px 31px,rgba(130,132,150,0.47) 31px 36px,rgba(130,132,150,0.09) 36px 41px,rgba(130,132,150,0.41) 41px 46px,rgba(130,132,150,0.09) 46px 51px,rgba(130,132,150,0.45) 51px 56px,rgba(130,132,150,0.49) 56px 62px,rgba(130,132,150,0.84) 62px 67px,rgba(130,132,150,0.57) 67px 72px,rgba(130,132,150,0.09) 72px 77px,rgba(130,132,150,0.68) 77px 82px) 0 4.5px/100% 4.5px no-repeat,linear-gradient(90deg,rgba(130,132,150,0.29) 0px 5px,rgba(130,132,150,0.04) 5px 10px,rgba(130,132,150,0.03) 10px 15px,rgba(130,132,150,0.12) 15px 20px,rgba(130,132,150,0.15) 20px 26px,rgba(130,132,150,0.23) 26px 31px,rgba(130,132,150,0.08) 31px 36px,rgba(130,132,150,0.35) 36px 41px,rgba(130,132,150,0.12) 41px 46px,rgba(130,132,150,0.18) 46px 51px,rgba(130,132,150,0.31) 51px 56px,rgba(130,132,150,0.15) 56px 62px,rgba(130,132,150,0.06) 62px 67px,rgba(130,132,150,0.34) 67px 72px,rgba(130,132,150,0.01) 72px 77px,rgba(130,132,150,0.20) 77px 82px) 0 9.0px/100% 4.5px no-repeat;filter:blur(0.7px)"></div>
<svg style="left:140.5px;top:340.5px" width="9.5" height="8" viewBox="0 0 9.5 8"><path d="M0.7 7.4 V2.2 L3 0.6 H5.6 V7.4 Z" fill="#d6e7fb" stroke="#66a5ee" stroke-width="1.1" stroke-linejoin="round"/><path d="M5.6 3.2 H7.6 C8.4 3.2 8.9 3.7 8.9 4.5 V7.4 H0.5" fill="none" stroke="#66a5ee" stroke-width="1.1"/><path d="M2.2 3.6 H4 M2.2 5.4 H4" stroke="#66a5ee" stroke-width="0.9"/></svg>
<div class="a" style="left:153px;top:338.0px;font-size:9px;line-height:13px;color:#555;font-weight:400;">威海</div>
<div class="a" style="left:170.0px;top:337.8px;width:87.0px;height:13.5px;background:linear-gradient(90deg,rgba(130,132,150,0.36) 0px 5px,rgba(130,132,150,0.37) 5px 10px,rgba(130,132,150,0.28) 10px 15px,rgba(130,132,150,0.15) 15px 20px,rgba(130,132,150,0.44) 20px 26px,rgba(130,132,150,0.19) 26px 31px,rgba(130,132,150,0.45) 31px 36px,rgba(130,132,150,0.39) 36px 41px,rgba(130,132,150,0.11) 41px 46px,rgba(130,132,150,0.20) 46px 51px,rgba(130,132,150,0.14) 51px 56px,rgba(130,132,150,0.27) 56px 61px,rgba(130,132,150,0.38) 61px 67px,rgba(130,132,150,0.38) 67px 72px,rgba(130,132,150,0.34) 72px 77px,rgba(130,132,150,0.33) 77px 82px,rgba(130,132,150,0.34) 82px 87px) 0 0.0px/100% 4.5px no-repeat,linear-gradient(90deg,rgba(130,132,150,0.09) 0px 5px,rgba(130,132,150,0.67) 5px 10px,rgba(130,132,150,0.62) 10px 15px,rgba(130,132,150,0.09) 15px 20px,rgba(130,132,150,0.32) 20px 26px,rgba(130,132,150,0.59) 26px 31px,rgba(130,132,150,0.50) 31px 36px,rgba(130,132,150,0.09) 36px 41px,rgba(130,132,150,0.60) 41px 46px,rgba(130,132,150,0.53) 46px 51px,rgba(130,132,150,0.32) 51px 56px,rgba(130,132,150,0.73) 56px 61px,rgba(130,132,150,0.69) 61px 67px,rgba(130,132,150,0.59) 67px 72px,rgba(130,132,150,0.40) 72px 77px,rgba(130,132,150,0.09) 77px 82px,rgba(130,132,150,0.32) 82px 87px) 0 4.5px/100% 4.5px no-repeat,linear-gradient(90deg,rgba(130,132,150,0.08) 0px 5px,rgba(130,132,150,0.28) 5px 10px,rgba(130,132,150,0.14) 10px 15px,rgba(130,132,150,0.35) 15px 20px,rgba(130,132,150,0.17) 20px 26px,rgba(130,132,150,0.06) 26px 31px,rgba(130,132,150,0.30) 31px 36px,rgba(130,132,150,0.25) 36px 41px,rgba(130,132,150,0.13) 41px 46px,rgba(130,132,150,0.18) 46px 51px,rgba(130,132,150,0.18) 51px 56px,rgba(130,132,150,0.33) 56px 61px,rgba(130,132,150,0.18) 61px 67px,rgba(130,132,150,0.01) 67px 72px,rgba(130,132,150,0.09) 72px 77px,rgba(130,132,150,0.24) 77px 82px,rgba(130,132,150,0.13) 82px 87px) 0 9.0px/100% 4.5px no-repeat;filter:blur(0.7px)"></div>
<svg style="left:140.5px;top:356.5px" width="9.5" height="8" viewBox="0 0 9.5 8"><path d="M0.7 7.4 V2.2 L3 0.6 H5.6 V7.4 Z" fill="#d6e7fb" stroke="#66a5ee" stroke-width="1.1" stroke-linejoin="round"/><path d="M5.6 3.2 H7.6 C8.4 3.2 8.9 3.7 8.9 4.5 V7.4 H0.5" fill="none" stroke="#66a5ee" stroke-width="1.1"/><path d="M2.2 3.6 H4 M2.2 5.4 H4" stroke="#66a5ee" stroke-width="0.9"/></svg>
<div class="a" style="left:153px;top:354.0px;font-size:9px;line-height:13px;color:#555;font-weight:400;">威海</div>
<div class="a" style="left:170.0px;top:353.8px;width:85.0px;height:13.5px;background:linear-gradient(90deg,rgba(130,132,150,0.06) 0px 5px,rgba(130,132,150,0.01) 5px 10px,rgba(130,132,150,0.31) 10px 15px,rgba(130,132,150,0.20) 15px 20px,rgba(130,132,150,0.42) 20px 25px,rgba(130,132,150,0.13) 25px 30px,rgba(130,132,150,0.25) 30px 35px,rgba(130,132,150,0.06) 35px 40px,rgba(130,132,150,0.28) 40px 45px,rgba(130,132,150,0.31) 45px 50px,rgba(130,132,150,0.16) 50px 55px,rgba(130,132,150,0.33) 55px 60px,rgba(130,132,150,0.29) 60px 65px,rgba(130,132,150,0.09) 65px 70px,rgba(130,132,150,0.10) 70px 75px,rgba(130,132,150,0.33) 75px 80px,rgba(130,132,150,0.34) 80px 85px) 0 0.0px/100% 4.5px no-repeat,linear-gradient(90deg,rgba(130,132,150,0.60) 0px 5px,rgba(130,132,150,0.68) 5px 10px,rgba(130,132,150,0.79) 10px 15px,rgba(130,132,150,0.42) 15px 20px,rgba(130,132,150,0.37) 20px 25px,rgba(130,132,150,0.32) 25px 30px,rgba(130,132,150,0.70) 30px 35px,rgba(130,132,150,0.45) 35px 40px,rgba(130,132,150,0.61) 40px 45px,rgba(130,132,150,0.80) 45px 50px,rgba(130,132,150,0.52) 50px 55px,rgba(130,132,150,0.75) 55px 60px,rgba(130,132,150,0.72) 60px 65px,rgba(130,132,150,0.32) 65px 70px,rgba(130,132,150,0.45) 70px 75px,rgba(130,132,150,0.46) 75px 80px,rgba(130,132,150,0.54) 80px 85px) 0 4.5px/100% 4.5px no-repeat,linear-gradient(90deg,rgba(130,132,150,0.01) 0px 5px,rgba(130,132,150,0.08) 5px 10px,rgba(130,132,150,0.34) 10px 15px,rgba(130,132,150,0.19) 15px 20px,rgba(130,132,150,0.07) 20px 25px,rgba(130,132,150,0.17) 25px 30px,rgba(130,132,150,0.01) 30px 35px,rgba(130,132,150,0.19) 35px 40px,rgba(130,132,150,0.31) 40px 45px,rgba(130,132,150,0.25) 45px 50px,rgba(130,132,150,0.12) 50px 55px,rgba(130,132,150,0.15) 55px 60px,rgba(130,132,150,0.34) 60px 65px,rgba(130,132,150,0.12) 65px 70px,rgba(130,132,150,0.17) 70px 75px,rgba(130,132,150,0.05) 75px 80px,rgba(130,132,150,0.23) 80px 85px) 0 9.0px/100% 4.5px no-repeat;filter:blur(0.7px)"></div>
<svg style="left:123px;top:375.5px" width="4" height="4" viewBox="0 0 4 4"><path d="M3.5 0.3 V3.5 H0.3Z" fill="#333"/></svg>
<svg style="left:131px;top:372.0px" width="9" height="9" viewBox="0 0 9 9"><path d="M0.4 4.6 L4.5 0.7 L8.6 4.6 M1.6 3.6 V8.2 H7.4 V3.6" fill="none" stroke="#62a2ec" stroke-width="1.15" stroke-linejoin="round" stroke-linecap="round"/><path d="M3.5 8.2 V5.9 H5.5 V8.2" fill="none" stroke="#62a2ec" stroke-width="1"/></svg>
<div class="a" style="left:144.3px;top:370.0px;font-size:9px;line-height:13px;color:#555;font-weight:400;">文登区(6)</div>
<svg style="left:140.5px;top:388.5px" width="9.5" height="8" viewBox="0 0 9.5 8"><path d="M0.7 7.4 V2.2 L3 0.6 H5.6 V7.4 Z" fill="#d6e7fb" stroke="#66a5ee" stroke-width="1.1" stroke-linejoin="round"/><path d="M5.6 3.2 H7.6 C8.4 3.2 8.9 3.7 8.9 4.5 V7.4 H0.5" fill="none" stroke="#66a5ee" stroke-width="1.1"/><path d="M2.2 3.6 H4 M2.2 5.4 H4" stroke="#66a5ee" stroke-width="0.9"/></svg>
<div class="a" style="left:153px;top:386.0px;font-size:9px;line-height:13px;color:#555;font-weight:400;">威海</div>
<div class="a" style="left:170.0px;top:385.8px;width:88.0px;height:13.5px;background:linear-gradient(90deg,rgba(130,132,150,0.19) 0px 5px,rgba(130,132,150,0.19) 5px 10px,rgba(130,132,150,0.22) 10px 15px,rgba(130,132,150,0.11) 15px 20px,rgba(130,132,150,0.20) 20px 24px,rgba(130,132,150,0.15) 24px 29px,rgba(130,132,150,0.40) 29px 34px,rgba(130,132,150,0.26) 34px 39px,rgba(130,132,150,0.33) 39px 44px,rgba(130,132,150,0.40) 44px 49px,rgba(130,132,150,0.43) 49px 54px,rgba(130,132,150,0.19) 54px 59px,rgba(130,132,150,0.37) 59px 64px,rgba(130,132,150,0.37) 64px 68px,rgba(130,132,150,0.42) 68px 73px,rgba(130,132,150,0.38) 73px 78px,rgba(130,132,150,0.38) 78px 83px,rgba(130,132,150,0.01) 83px 88px) 0 0.0px/100% 4.5px no-repeat,linear-gradient(90deg,rgba(130,132,150,0.54) 0px 5px,rgba(130,132,150,0.45) 5px 10px,rgba(130,132,150,0.79) 10px 15px,rgba(130,132,150,0.78) 15px 20px,rgba(130,132,150,0.52) 20px 24px,rgba(130,132,150,0.38) 24px 29px,rgba(130,132,150,0.55) 29px 34px,rgba(130,132,150,0.71) 34px 39px,rgba(130,132,150,0.52) 39px 44px,rgba(130,132,150,0.84) 44px 49px,rgba(130,132,150,0.85) 49px 54px,rgba(130,132,150,0.54) 54px 59px,rgba(130,132,150,0.33) 59px 64px,rgba(130,132,150,0.37) 64px 68px,rgba(130,132,150,0.81) 68px 73px,rgba(130,132,150,0.40) 73px 78px,rgba(130,132,150,0.77) 78px 83px,rgba(130,132,150,0.85) 83px 88px) 0 4.5px/100% 4.5px no-repeat,linear-gradient(90deg,rgba(130,132,150,0.21) 0px 5px,rgba(130,132,150,0.05) 5px 10px,rgba(130,132,150,0.19) 10px 15px,rgba(130,132,150,0.35) 15px 20px,rgba(130,132,150,0.08) 20px 24px,rgba(130,132,150,0.05) 24px 29px,rgba(130,132,150,0.06) 29px 34px,rgba(130,132,150,0.28) 34px 39px,rgba(130,132,150,0.14) 39px 44px,rgba(130,132,150,0.17) 44px 49px,rgba(130,132,150,0.19) 49px 54px,rgba(130,132,150,0.12) 54px 59px,rgba(130,132,150,0.07) 59px 64px,rgba(130,132,150,0.13) 64px 68px,rgba(130,132,150,0.12) 68px 73px,rgba(130,132,150,0.25) 73px 78px,rgba(130,132,150,0.06) 78px 83px,rgba(130,132,150,0.08) 83px 88px) 0 9.0px/100% 4.5px no-repeat;filter:blur(0.7px)"></div>
<svg style="left:140.5px;top:404.5px" width="9.5" height="8" viewBox="0 0 9.5 8"><path d="M0.7 7.4 V2.2 L3 0.6 H5.6 V7.4 Z" fill="#d6e7fb" stroke="#66a5ee" stroke-width="1.1" stroke-linejoin="round"/><path d="M5.6 3.2 H7.6 C8.4 3.2 8.9 3.7 8.9 4.5 V7.4 H0.5" fill="none" stroke="#66a5ee" stroke-width="1.1"/><path d="M2.2 3.6 H4 M2.2 5.4 H4" stroke="#66a5ee" stroke-width="0.9"/></svg>
<div class="a" style="left:153px;top:402.0px;font-size:9px;line-height:13px;color:#555;font-weight:400;">威海</div>
<div class="a" style="left:170.0px;top:401.8px;width:101.0px;height:13.5px;background:linear-gradient(90deg,rgba(130,132,150,0.37) 0px 5px,rgba(130,132,150,0.23) 5px 10px,rgba(130,132,150,0.32) 10px 15px,rgba(130,132,150,0.44) 15px 20px,rgba(130,132,150,0.43) 20px 25px,rgba(130,132,150,0.23) 25px 30px,rgba(130,132,150,0.43) 30px 35px,rgba(130,132,150,0.17) 35px 40px,rgba(130,132,150,0.39) 40px 45px,rgba(130,132,150,0.38) 45px 50px,rgba(130,132,150,0.44) 50px 56px,rgba(130,132,150,0.35) 56px 61px,rgba(130,132,150,0.43) 61px 66px,rgba(130,132,150,0.06) 66px 71px,rgba(130,132,150,0.01) 71px 76px,rgba(130,132,150,0.16) 76px 81px,rgba(130,132,150,0.01) 81px 86px,rgba(130,132,150,0.43) 86px 91px,rgba(130,132,150,0.06) 91px 96px,rgba(130,132,150,0.18) 96px 101px) 0 0.0px/100% 4.5px no-repeat,linear-gradient(90deg,rgba(130,132,150,0.39) 0px 5px,rgba(130,132,150,0.55) 5px 10px,rgba(130,132,150,0.81) 10px 15px,rgba(130,132,150,0.36) 15px 20px,rgba(130,132,150,0.69) 20px 25px,rgba(130,132,150,0.83) 25px 30px,rgba(130,132,150,0.61) 30px 35px,rgba(130,132,150,0.45) 35px 40px,rgba(130,132,150,0.09) 40px 45px,rgba(130,132,150,0.38) 45px 50px,rgba(130,132,150,0.78) 50px 56px,rgba(130,132,150,0.09) 56px 61px,rgba(130,132,150,0.43) 61px 66px,rgba(130,132,150,0.36) 66px 71px,rgba(130,132,150,0.42) 71px 76px,rgba(130,132,150,0.73) 76px 81px,rgba(130,132,150,0.09) 81px 86px,rgba(130,132,150,0.46) 86px 91px,rgba(130,132,150,0.09) 91px 96px,rgba(130,132,150,0.60) 96px 101px) 0 4.5px/100% 4.5px no-repeat,linear-gradient(90deg,rgba(130,132,150,0.29) 0px 5px,rgba(130,132,150,0.07) 5px 10px,rgba(130,132,150,0.12) 10px 15px,rgba(130,132,150,0.06) 15px 20px,rgba(130,132,150,0.10) 20px 25px,rgba(130,132,150,0.23) 25px 30px,rgba(130,132,150,0.24) 30px 35px,rgba(130,132,150,0.29) 35px 40px,rgba(130,132,150,0.16) 40px 45px,rgba(130,132,150,0.20) 45px 50px,rgba(130,132,150,0.01) 50px 56px,rgba(130,132,150,0.28) 56px 61px,rgba(130,132,150,0.13) 61px 66px,rgba(130,132,150,0.18) 66px 71px,rgba(130,132,150,0.28) 71px 76px,rgba(130,132,150,0.33) 76px 81px,rgba(130,132,150,0.16) 81px 86px,rgba(130,132,150,0.01) 86px 91px,rgba(130,132,150,0.15) 91px 96px,rgba(130,132,150,0.19) 96px 101px) 0 9.0px/100% 4.5px no-repeat;filter:blur(0.7px)"></div>
<svg style="left:140.5px;top:420.5px" width="9.5" height="8" viewBox="0 0 9.5 8"><path d="M0.7 7.4 V2.2 L3 0.6 H5.6 V7.4 Z" fill="#d6e7fb" stroke="#66a5ee" stroke-width="1.1" stroke-linejoin="round"/><path d="M5.6 3.2 H7.6 C8.4 3.2 8.9 3.7 8.9 4.5 V7.4 H0.5" fill="none" stroke="#66a5ee" stroke-width="1.1"/><path d="M2.2 3.6 H4 M2.2 5.4 H4" stroke="#66a5ee" stroke-width="0.9"/></svg>
<div class="a" style="left:153px;top:418.0px;font-size:9px;line-height:13px;color:#555;font-weight:400;">威海</div>
<div class="a" style="left:170.0px;top:417.8px;width:98.0px;height:13.5px;background:linear-gradient(90deg,rgba(130,132,150,0.01) 0px 5px,rgba(130,132,150,0.27) 5px 10px,rgba(130,132,150,0.13) 10px 15px,rgba(130,132,150,0.21) 15px 20px,rgba(130,132,150,0.36) 20px 24px,rgba(130,132,150,0.44) 24px 29px,rgba(130,132,150,0.31) 29px 34px,rgba(130,132,150,0.14) 34px 39px,rgba(130,132,150,0.44) 39px 44px,rgba(130,132,150,0.27) 44px 49px,rgba(130,132,150,0.43) 49px 54px,rgba(130,132,150,0.39) 54px 59px,rgba(130,132,150,0.33) 59px 64px,rgba(130,132,150,0.20) 64px 69px,rgba(130,132,150,0.34) 69px 74px,rgba(130,132,150,0.35) 74px 78px,rgba(130,132,150,0.17) 78px 83px,rgba(130,132,150,0.16) 83px 88px,rgba(130,132,150,0.01) 88px 93px,rgba(130,132,150,0.39) 93px 98px) 0 0.0px/100% 4.5px no-repeat,linear-gradient(90deg,rgba(130,132,150,0.44) 0px 5px,rgba(130,132,150,0.56) 5px 10px,rgba(130,132,150,0.09) 10px 15px,rgba(130,132,150,0.70) 15px 20px,rgba(130,132,150,0.33) 20px 24px,rgba(130,132,150,0.82) 24px 29px,rgba(130,132,150,0.81) 29px 34px,rgba(130,132,150,0.44) 34px 39px,rgba(130,132,150,0.64) 39px 44px,rgba(130,132,150,0.57) 44px 49px,rgba(130,132,150,0.44) 49px 54px,rgba(130,132,150,0.09) 54px 59px,rgba(130,132,150,0.81) 59px 64px,rgba(130,132,150,0.83) 64px 69px,rgba(130,132,150,0.38) 69px 74px,rgba(130,132,150,0.69) 74px 78px,rgba(130,132,150,0.56) 78px 83px,rgba(130,132,150,0.45) 83px 88px,rgba(130,132,150,0.68) 88px 93px,rgba(130,132,150,0.76) 93px 98px) 0 4.5px/100% 4.5px no-repeat,linear-gradient(90deg,rgba(130,132,150,0.26) 0px 5px,rgba(130,132,150,0.10) 5px 10px,rgba(130,132,150,0.20) 10px 15px,rgba(130,132,150,0.25) 15px 20px,rgba(130,132,150,0.25) 20px 24px,rgba(130,132,150,0.31) 24px 29px,rgba(130,132,150,0.01) 29px 34px,rgba(130,132,150,0.32) 34px 39px,rgba(130,132,150,0.11) 39px 44px,rgba(130,132,150,0.25) 44px 49px,rgba(130,132,150,0.24) 49px 54px,rgba(130,132,150,0.05) 54px 59px,rgba(130,132,150,0.22) 59px 64px,rgba(130,132,150,0.33) 64px 69px,rgba(130,132,150,0.20) 69px 74px,rgba(130,132,150,0.01) 74px 78px,rgba(130,132,150,0.33) 78px 83px,rgba(130,132,150,0.17) 83px 88px,rgba(130,132,150,0.14) 88px 93px,rgba(130,132,150,0.31) 93px 98px) 0 9.0px/100% 4.5px no-repeat;filter:blur(0.7px)"></div>
<svg style="left:140.5px;top:436.5px" width="9.5" height="8" viewBox="0 0 9.5 8"><path d="M0.7 7.4 V2.2 L3 0.6 H5.6 V7.4 Z" fill="#d6e7fb" stroke="#66a5ee" stroke-width="1.1" stroke-linejoin="round"/><path d="M5.6 3.2 H7.6 C8.4 3.2 8.9 3.7 8.9 4.5 V7.4 H0.5" fill="none" stroke="#66a5ee" stroke-width="1.1"/><path d="M2.2 3.6 H4 M2.2 5.4 H4" stroke="#66a5ee" stroke-width="0.9"/></svg>
<div class="a" style="left:153px;top:434.0px;font-size:9px;line-height:13px;color:#555;font-weight:400;">威海</div>
<div class="a" style="left:170.0px;top:433.8px;width:101.0px;height:13.5px;background:linear-gradient(90deg,rgba(130,132,150,0.44) 0px 5px,rgba(130,132,150,0.45) 5px 10px,rgba(130,132,150,0.01) 10px 15px,rgba(130,132,150,0.26) 15px 20px,rgba(130,132,150,0.21) 20px 25px,rgba(130,132,150,0.38) 25px 30px,rgba(130,132,150,0.27) 30px 35px,rgba(130,132,150,0.29) 35px 40px,rgba(130,132,150,0.21) 40px 45px,rgba(130,132,150,0.42) 45px 50px,rgba(130,132,150,0.32) 50px 56px,rgba(130,132,150,0.43) 56px 61px,rgba(130,132,150,0.19) 61px 66px,rgba(130,132,150,0.29) 66px 71px,rgba(130,132,150,0.33) 71px 76px,rgba(130,132,150,0.33) 76px 81px,rgba(130,132,150,0.15) 81px 86px,rgba(130,132,150,0.01) 86px 91px,rgba(130,132,150,0.01) 91px 96px,rgba(130,132,150,0.45) 96px 101px) 0 0.0px/100% 4.5px no-repeat,linear-gradient(90deg,rgba(130,132,150,0.78) 0px 5px,rgba(130,132,150,0.75) 5px 10px,rgba(130,132,150,0.37) 10px 15px,rgba(130,132,150,0.49) 15px 20px,rgba(130,132,150,0.79) 20px 25px,rgba(130,132,150,0.45) 25px 30px,rgba(130,132,150,0.78) 30px 35px,rgba(130,132,150,0.85) 35px 40px,rgba(130,132,150,0.09) 40px 45px,rgba(130,132,150,0.57) 45px 50px,rgba(130,132,150,0.81) 50px 56px,rgba(130,132,150,0.82) 56px 61px,rgba(130,132,150,0.43) 61px 66px,rgba(130,132,150,0.69) 66px 71px,rgba(130,132,150,0.54) 71px 76px,rgba(130,132,150,0.37) 76px 81px,rgba(130,132,150,0.66) 81px 86px,rgba(130,132,150,0.77) 86px 91px,rgba(130,132,150,0.44) 91px 96px,rgba(130,132,150,0.33) 96px 101px) 0 4.5px/100% 4.5px no-repeat,linear-gradient(90deg,rgba(130,132,150,0.19) 0px 5px,rgba(130,132,150,0.24) 5px 10px,rgba(130,132,150,0.34) 10px 15px,rgba(130,132,150,0.08) 15px 20px,rgba(130,132,150,0.04) 20px 25px,rgba(130,132,150,0.09) 25px 30px,rgba(130,132,150,0.14) 30px 35px,rgba(130,132,150,0.13) 35px 40px,rgba(130,132,150,0.24) 40px 45px,rgba(130,132,150,0.19) 45px 50px,rgba(130,132,150,0.15) 50px 56px,rgba(130,132,150,0.17) 56px 61px,rgba(130,132,150,0.07) 61px 66px,rgba(130,132,150,0.20) 66px 71px,rgba(130,132,150,0.23) 71px 76px,rgba(130,132,150,0.29) 76px 81px,rgba(130,132,150,0.32) 81px 86px,rgba(130,132,150,0.11) 86px 91px,rgba(130,132,150,0.33) 91px 96px,rgba(130,132,150,0.33) 96px 101px) 0 9.0px/100% 4.5px no-repeat;filter:blur(0.7px)"></div>
<svg style="left:140.5px;top:452.5px" width="9.5" height="8" viewBox="0 0 9.5 8"><path d="M0.7 7.4 V2.2 L3 0.6 H5.6 V7.4 Z" fill="#d6e7fb" stroke="#66a5ee" stroke-width="1.1" stroke-linejoin="round"/><path d="M5.6 3.2 H7.6 C8.4 3.2 8.9 3.7 8.9 4.5 V7.4 H0.5" fill="none" stroke="#66a5ee" stroke-width="1.1"/><path d="M2.2 3.6 H4 M2.2 5.4 H4" stroke="#66a5ee" stroke-width="0.9"/></svg>
<div class="a" style="left:153px;top:450.0px;font-size:9px;line-height:13px;color:#555;font-weight:400;">威海</div>
<div class="a" style="left:170.0px;top:449.8px;width:70.0px;height:13.5px;background:linear-gradient(90deg,rgba(130,132,150,0.22) 0px 5px,rgba(130,132,150,0.23) 5px 10px,rgba(130,132,150,0.32) 10px 15px,rgba(130,132,150,0.28) 15px 20px,rgba(130,132,150,0.35) 20px 25px,rgba(130,132,150,0.17) 25px 30px,rgba(130,132,150,0.01) 30px 35px,rgba(130,132,150,0.21) 35px 40px,rgba(130,132,150,0.20) 40px 45px,rgba(130,132,150,0.43) 45px 50px,rgba(130,132,150,0.01) 50px 55px,rgba(130,132,150,0.36) 55px 60px,rgba(130,132,150,0.09) 60px 65px,rgba(130,132,150,0.18) 65px 70px) 0 0.0px/100% 4.5px no-repeat,linear-gradient(90deg,rgba(130,132,150,0.85) 0px 5px,rgba(130,132,150,0.35) 5px 10px,rgba(130,132,150,0.46) 10px 15px,rgba(130,132,150,0.78) 15px 20px,rgba(130,132,150,0.70) 20px 25px,rgba(130,132,150,0.30) 25px 30px,rgba(130,132,150,0.73) 30px 35px,rgba(130,132,150,0.50) 35px 40px,rgba(130,132,150,0.79) 40px 45px,rgba(130,132,150,0.72) 45px 50px,rgba(130,132,150,0.36) 50px 55px,rgba(130,132,150,0.09) 55px 60px,rgba(130,132,150,0.42) 60px 65px,rgba(130,132,150,0.75) 65px 70px) 0 4.5px/100% 4.5px no-repeat,linear-gradient(90deg,rgba(130,132,150,0.08) 0px 5px,rgba(130,132,150,0.17) 5px 10px,rgba(130,132,150,0.02) 10px 15px,rgba(130,132,150,0.21) 15px 20px,rgba(130,132,150,0.32) 20px 25px,rgba(130,132,150,0.04) 25px 30px,rgba(130,132,150,0.22) 30px 35px,rgba(130,132,150,0.09) 35px 40px,rgba(130,132,150,0.04) 40px 45px,rgba(130,132,150,0.11) 45px 50px,rgba(130,132,150,0.11) 50px 55px,rgba(130,132,150,0.16) 55px 60px,rgba(130,132,150,0.27) 60px 65px,rgba(130,132,150,0.07) 65px 70px) 0 9.0px/100% 4.5px no-repeat;filter:blur(0.7px)"></div>
<svg style="left:140.5px;top:468.5px" width="9.5" height="8" viewBox="0 0 9.5 8"><path d="M0.7 7.4 V2.2 L3 0.6 H5.6 V7.4 Z" fill="#d6e7fb" stroke="#66a5ee" stroke-width="1.1" stroke-linejoin="round"/><path d="M5.6 3.2 H7.6 C8.4 3.2 8.9 3.7 8.9 4.5 V7.4 H0.5" fill="none" stroke="#66a5ee" stroke-width="1.1"/><path d="M2.2 3.6 H4 M2.2 5.4 H4" stroke="#66a5ee" stroke-width="0.9"/></svg>
<div class="a" style="left:153px;top:466.0px;font-size:9px;line-height:13px;color:#555;font-weight:400;">威海</div>
<div class="a" style="left:170.0px;top:465.8px;width:91.0px;height:13.5px;background:linear-gradient(90deg,rgba(130,132,150,0.28) 0px 5px,rgba(130,132,150,0.16) 5px 10px,rgba(130,132,150,0.36) 10px 15px,rgba(130,132,150,0.12) 15px 20px,rgba(130,132,150,0.33) 20px 25px,rgba(130,132,150,0.38) 25px 30px,rgba(130,132,150,0.01) 30px 35px,rgba(130,132,150,0.44) 35px 40px,rgba(130,132,150,0.15) 40px 46px,rgba(130,132,150,0.01) 46px 51px,rgba(130,132,150,0.11) 51px 56px,rgba(130,132,150,0.27) 56px 61px,rgba(130,132,150,0.01) 61px 66px,rgba(130,132,150,0.43) 66px 71px,rgba(130,132,150,0.15) 71px 76px,rgba(130,132,150,0.29) 76px 81px,rgba(130,132,150,0.32) 81px 86px,rgba(130,132,150,0.33) 86px 91px) 0 0.0px/100% 4.5px no-repeat,linear-gradient(90deg,rgba(130,132,150,0.57) 0px 5px,rgba(130,132,150,0.36) 5px 10px,rgba(130,132,150,0.61) 10px 15px,rgba(130,132,150,0.72) 15px 20px,rgba(130,132,150,0.81) 20px 25px,rgba(130,132,150,0.74) 25px 30px,rgba(130,132,150,0.38) 30px 35px,rgba(130,132,150,0.83) 35px 40px,rgba(130,132,150,0.63) 40px 46px,rgba(130,132,150,0.39) 46px 51px,rgba(130,132,150,0.79) 51px 56px,rgba(130,132,150,0.54) 56px 61px,rgba(130,132,150,0.09) 61px 66px,rgba(130,132,150,0.09) 66px 71px,rgba(130,132,150,0.81) 71px 76px,rgba(130,132,150,0.60) 76px 81px,rgba(130,132,150,0.70) 81px 86px,rgba(130,132,150,0.45) 86px 91px) 0 4.5px/100% 4.5px no-repeat,linear-gradient(90deg,rgba(130,132,150,0.01) 0px 5px,rgba(130,132,150,0.32) 5px 10px,rgba(130,132,150,0.01) 10px 15px,rgba(130,132,150,0.18) 15px 20px,rgba(130,132,150,0.08) 20px 25px,rgba(130,132,150,0.34) 25px 30px,rgba(130,132,150,0.03) 30px 35px,rgba(130,132,150,0.19) 35px 40px,rgba(130,132,150,0.33) 40px 46px,rgba(130,132,150,0.17) 46px 51px,rgba(130,132,150,0.12) 51px 56px,rgba(130,132,150,0.24) 56px 61px,rgba(130,132,150,0.12) 61px 66px,rgba(130,132,150,0.01) 66px 71px,rgba(130,132,150,0.34) 71px 76px,rgba(130,132,150,0.08) 76px 81px,rgba(130,132,150,0.34) 81px 86px,rgba(130,132,150,0.15) 86px 91px) 0 9.0px/100% 4.5px no-repeat;filter:blur(0.7px)"></div>
<svg style="left:131px;top:484.0px" width="9" height="9" viewBox="0 0 9 9"><path d="M0.4 4.6 L4.5 0.7 L8.6 4.6 M1.6 3.6 V8.2 H7.4 V3.6" fill="none" stroke="#62a2ec" stroke-width="1.15" stroke-linejoin="round" stroke-linecap="round"/><path d="M3.5 8.2 V5.9 H5.5 V8.2" fill="none" stroke="#62a2ec" stroke-width="1"/></svg>
<div class="a" style="left:144.3px;top:482.0px;font-size:9px;line-height:13px;color:#555;font-weight:400;">南海新区(0)</div>
<svg style="left:123px;top:503.5px" width="4" height="4" viewBox="0 0 4 4"><path d="M3.5 0.3 V3.5 H0.3Z" fill="#333"/></svg>
<svg style="left:131px;top:500.0px" width="9" height="9" viewBox="0 0 9 9"><path d="M0.4 4.6 L4.5 0.7 L8.6 4.6 M1.6 3.6 V8.2 H7.4 V3.6" fill="none" stroke="#62a2ec" stroke-width="1.15" stroke-linejoin="round" stroke-linecap="round"/><path d="M3.5 8.2 V5.9 H5.5 V8.2" fill="none" stroke="#62a2ec" stroke-width="1"/></svg>
<div class="a" style="left:144.3px;top:498.0px;font-size:9px;line-height:13px;color:#555;font-weight:400;">高区(1)</div>
<div class="a" style="left:282px;top:54px;width:795px;height:32px;background:#fff;"></div>
<div class="a" style="left:331px;top:64px;font-size:8px;line-height:12px;color:#555;font-weight:400;-webkit-text-stroke:0.05px #555;">企业名称:</div>
<div class="a" style="left:370.5px;top:60.5px;width:124.5px;height:20px;background:#fff;border:1px solid #e6e8ec;border-radius:2px"></div>
<div class="a" style="left:373.5px;top:64px;font-size:8.5px;line-height:12px;color:#c8cbd0;font-weight:400;-webkit-text-stroke:0.01px #c8cbd0;">请输入</div>
<div class="a" style="left:537.5px;top:64px;font-size:8px;line-height:12px;color:#555;font-weight:400;-webkit-text-stroke:0.05px #555;">企业法人:</div>
<div class="a" style="left:577.5px;top:60.5px;width:124.5px;height:20px;background:#fff;border:1px solid #e6e8ec;border-radius:2px"></div>
<div class="a" style="left:580.5px;top:64px;font-size:8.5px;line-height:12px;color:#c8cbd0;font-weight:400;-webkit-text-stroke:0.01px #c8cbd0;">请输入</div>
<div class="a" style="left:744px;top:64px;font-size:8px;line-height:12px;color:#555;font-weight:400;-webkit-text-stroke:0.05px #555;">法人电话:</div>
<div class="a" style="left:784px;top:60.5px;width:124.5px;height:20px;background:#fff;border:1px solid #e6e8ec;border-radius:2px"></div>
<div class="a" style="left:787px;top:64px;font-size:8.5px;line-height:12px;color:#c8cbd0;font-weight:400;-webkit-text-stroke:0.01px #c8cbd0;">请输入</div>
<div class="a" style="left:937px;top:61px;width:40px;height:17.5px;background:#3a86f0;border-radius:1px"></div>
<div class="a" style="left:949px;top:63.5px;font-size:8px;line-height:12px;color:#fff;font-weight:400;-webkit-text-stroke:0.15px #fff;">查询</div>
<div class="a" style="left:983px;top:61px;width:39.5px;height:17.5px;background:#fff;border:1px solid #6aa0f0;border-radius:1px"></div>
<div class="a" style="left:995px;top:63.5px;font-size:8px;line-height:12px;color:#3a7ee8;font-weight:400;-webkit-text-stroke:0.15px #3a7ee8;">重置</div>
<div class="a" style="left:282px;top:92px;width:795px;height:28px;background:#fff;"></div>
<svg style="left:290.8px;top:101px" width="9.5" height="9.5" viewBox="0 0 10 10"><circle cx="5" cy="5" r="4.8" fill="#3d8ef0"/><path d="M5 2.6 V7.4 M2.6 5 H7.4" stroke="#fff" stroke-width="1.4"/></svg>
<div class="a" style="left:302.5px;top:100px;font-size:9px;line-height:13px;color:#4a4a4a;font-weight:400;-webkit-text-stroke:0.28px #4a4a4a;">新增</div>
<svg style="left:338px;top:101.5px" width="9" height="9" viewBox="0 0 9 9"><g fill="none" stroke="#35c08e" stroke-width="1.2"><path d="M5.5 8.4 H0.7 V0.7 H8.3 V4.5"/><path d="M2.5 3 H6.5 M2.5 5 H4.5"/><path d="M7 5.5 V8.5 M5.8 7.3 L7 8.5 L8.2 7.3"/></g></svg>
<div class="a" style="left:349.8px;top:100px;font-size:9px;line-height:13px;color:#4a4a4a;font-weight:400;-webkit-text-stroke:0.28px #4a4a4a;">下载模板</div>
<svg style="left:403px;top:101.5px" width="9" height="9" viewBox="0 0 9 9"><g fill="none" stroke="#35c08e" stroke-width="1.2"><path d="M3 1.5 H0.7 V8.3 H8.3 V5.5"/><path d="M7.8 0.6 L4.5 4.5 M3.8 2.8 V5.2 H6.3"/></g></svg>
<div class="a" style="left:415.2px;top:100px;font-size:9px;line-height:13px;color:#4a4a4a;font-weight:400;-webkit-text-stroke:0.28px #4a4a4a;">导入</div>
<svg style="left:450px;top:101.5px" width="9" height="9" viewBox="0 0 9 9"><g fill="none" stroke="#35c08e" stroke-width="1.2"><path d="M3 1.5 H0.7 V8.3 H8.3 V5.5"/><path d="M3.3 5.5 C3.5 3.5 5 2.5 7.5 2.5 M6 1 L7.8 2.5 L6 4"/></g></svg>
<div class="a" style="left:462.2px;top:100px;font-size:9px;line-height:13px;color:#4a4a4a;font-weight:400;-webkit-text-stroke:0.28px #4a4a4a;">导出</div>
<svg style="left:498.3px;top:101.3px" width="7.5" height="9" viewBox="0 0 7.5 9"><path fill="#f06464" d="M2.5 0.3 H5 V1 H7.3 V2.2 H0.2 V1 H2.5Z M0.8 2.8 H6.7 L6.3 8.7 H1.2Z"/><path d="M2.8 4.3 V7.3 M4.7 4.3 V7.3" stroke="#fff" stroke-width="0.7"/></svg>
<div class="a" style="left:509.7px;top:100px;font-size:9px;line-height:13px;color:#4a4a4a;font-weight:400;-webkit-text-stroke:0.28px #4a4a4a;">批量删除</div>
<div class="a" style="left:282px;top:126px;width:795px;height:385px;background:#fff;"></div>
<div class="a" style="left:291px;top:135px;width:778.5px;height:29px;background:#e5e5e5;"></div>
<div class="a" style="left:295.5px;top:144px;width:11px;height:11px;background:#fff;border:1px solid #d9d9d9;border-radius:1.5px"></div>
<div class="a" style="left:319.7px;top:143.5px;font-size:9px;line-height:13px;color:#333;font-weight:400;-webkit-text-stroke:0.32px #333;">企业名称</div>
<div class="a" style="left:471.7px;top:143.5px;font-size:9px;line-height:13px;color:#333;font-weight:400;-webkit-text-stroke:0.32px #333;">所属区域</div>
<div class="a" style="left:548.3px;top:143.5px;font-size:9px;line-height:13px;color:#333;font-weight:400;-webkit-text-stroke:0.32px #333;">注册资金(万)</div>
<div class="a" style="left:624.4px;top:143.5px;font-size:9px;line-height:13px;color:#333;font-weight:400;-webkit-text-stroke:0.32px #333;">企业法人</div>
<div class="a" style="left:701.1px;top:143.5px;font-size:9px;line-height:13px;color:#333;font-weight:400;-webkit-text-stroke:0.32px #333;">联系方式</div>
<div class="a" style="left:776.9px;top:143.5px;font-size:9px;line-height:13px;color:#333;font-weight:400;-webkit-text-stroke:0.32px #333;">办公地址</div>
<div class="a" style="left:929.7px;top:143.5px;font-size:9px;line-height:13px;color:#333;font-weight:400;-webkit-text-stroke:0.32px #333;">操作</div>
<div class="a" style="left:291px;top:164.0px;width:778.5px;height:28.25px;background:#fff;border-bottom:1px solid #e9e9e9"></div>
<div class="a" style="left:294px;top:172.625px;width:11px;height:11px;background:#fff;border:1px solid #d9d9d9;border-radius:1.5px"></div>
<div class="a" style="left:319.5px;top:172.625px;font-size:9px;line-height:13px;color:#4592e8;text-decoration:underline">威海</div>
<div class="a" style="left:337.5px;top:171.4px;width:90.3px;height:13.5px;background:linear-gradient(90deg,rgba(75,150,240,0.18) 0px 5px,rgba(75,150,240,0.33) 5px 10px,rgba(75,150,240,0.28) 10px 15px,rgba(75,150,240,0.01) 15px 20px,rgba(75,150,240,0.32) 20px 25px,rgba(75,150,240,0.01) 25px 30px,rgba(75,150,240,0.16) 30px 35px,rgba(75,150,240,0.01) 35px 40px,rgba(75,150,240,0.01) 40px 45px,rgba(75,150,240,0.41) 45px 50px,rgba(75,150,240,0.17) 50px 55px,rgba(75,150,240,0.05) 55px 60px,rgba(75,150,240,0.16) 60px 65px,rgba(75,150,240,0.01) 65px 70px,rgba(75,150,240,0.10) 70px 75px,rgba(75,150,240,0.51) 75px 80px,rgba(75,150,240,0.48) 80px 85px,rgba(75,150,240,0.48) 85px 90px) 0 0.0px/100% 4.5px no-repeat,linear-gradient(90deg,rgba(75,150,240,0.14) 0px 5px,rgba(75,150,240,0.48) 5px 10px,rgba(75,150,240,0.90) 10px 15px,rgba(75,150,240,0.95) 15px 20px,rgba(75,150,240,0.95) 20px 25px,rgba(75,150,240,0.90) 25px 30px,rgba(75,150,240,0.90) 30px 35px,rgba(75,150,240,0.59) 35px 40px,rgba(75,150,240,0.79) 40px 45px,rgba(75,150,240,0.82) 45px 50px,rgba(75,150,240,0.87) 50px 55px,rgba(75,150,240,0.72) 55px 60px,rgba(75,150,240,0.76) 60px 65px,rgba(75,150,240,0.53) 65px 70px,rgba(75,150,240,0.91) 70px 75px,rgba(75,150,240,0.85) 75px 80px,rgba(75,150,240,0.65) 80px 85px,rgba(75,150,240,0.14) 85px 90px) 0 4.5px/100% 4.5px no-repeat,linear-gradient(90deg,rgba(75,150,240,0.08) 0px 5px,rgba(75,150,240,0.23) 5px 10px,rgba(75,150,240,0.37) 10px 15px,rgba(75,150,240,0.17) 15px 20px,rgba(75,150,240,0.28) 20px 25px,rgba(75,150,240,0.24) 25px 30px,rgba(75,150,240,0.43) 30px 35px,rgba(75,150,240,0.17) 35px 40px,rgba(75,150,240,0.37) 40px 45px,rgba(75,150,240,0.03) 45px 50px,rgba(75,150,240,0.04) 50px 55px,rgba(75,150,240,0.08) 55px 60px,rgba(75,150,240,0.18) 60px 65px,rgba(75,150,240,0.14) 65px 70px,rgba(75,150,240,0.40) 70px 75px,rgba(75,150,240,0.40) 75px 80px,rgba(75,150,240,0.30) 80px 85px,rgba(75,150,240,0.41) 85px 90px) 0 9.0px/100% 4.5px no-repeat;filter:blur(0.6px)"></div>
<div class="a" style="left:470.8px;top:172.625px;font-size:9px;line-height:13px;color:#333;font-weight:400;">文登区</div>
<div class="a" style="left:624.4px;top:172.625px;font-size:9px;line-height:13px;color:#333;font-weight:400;">李</div>
<div class="a" style="left:634.0px;top:171.4px;width:20.0px;height:13.5px;background:linear-gradient(90deg,rgba(105,105,115,0.43) 0px 5px,rgba(105,105,115,0.15) 5px 10px,rgba(105,105,115,0.20) 10px 15px,rgba(105,105,115,0.19) 15px 20px) 0 0.0px/100% 4.5px no-repeat,linear-gradient(90deg,rgba(105,105,115,0.79) 0px 5px,rgba(105,105,115,0.53) 5px 10px,rgba(105,105,115,0.51) 10px 15px,rgba(105,105,115,0.10) 15px 20px) 0 4.5px/100% 4.5px no-repeat,linear-gradient(90deg,rgba(105,105,115,0.17) 0px 5px,rgba(105,105,115,0.06) 5px 10px,rgba(105,105,115,0.31) 10px 15px,rgba(105,105,115,0.32) 15px 20px) 0 9.0px/100% 4.5px no-repeat;filter:blur(0.7px)"></div>
<div class="a" style="left:701px;top:172.625px;font-size:9px;line-height:13px;color:#333;font-weight:400;">13</div>
<div class="a" style="left:711.0px;top:171.4px;width:48.0px;height:13.5px;background:linear-gradient(90deg,rgba(105,105,115,0.01) 0px 5px,rgba(105,105,115,0.23) 5px 10px,rgba(105,105,115,0.01) 10px 14px,rgba(105,105,115,0.01) 14px 19px,rgba(105,105,115,0.23) 19px 24px,rgba(105,105,115,0.01) 24px 29px,rgba(105,105,115,0.27) 29px 34px,rgba(105,105,115,0.35) 34px 38px,rgba(105,105,115,0.19) 38px 43px,rgba(105,105,115,0.05) 43px 48px) 0 0.0px/100% 4.5px no-repeat,linear-gradient(90deg,rgba(105,105,115,0.43) 0px 5px,rgba(105,105,115,0.73) 5px 10px,rgba(105,105,115,0.42) 10px 14px,rgba(105,105,115,0.10) 14px 19px,rgba(105,105,115,0.73) 19px 24px,rgba(105,105,115,0.80) 24px 29px,rgba(105,105,115,0.68) 29px 34px,rgba(105,105,115,0.70) 34px 38px,rgba(105,105,115,0.71) 38px 43px,rgba(105,105,115,0.67) 43px 48px) 0 4.5px/100% 4.5px no-repeat,linear-gradient(90deg,rgba(105,105,115,0.34) 0px 5px,rgba(105,105,115,0.06) 5px 10px,rgba(105,105,115,0.01) 10px 14px,rgba(105,105,115,0.27) 14px 19px,rgba(105,105,115,0.22) 19px 24px,rgba(105,105,115,0.02) 24px 29px,rgba(105,105,115,0.23) 29px 34px,rgba(105,105,115,0.30) 34px 38px,rgba(105,105,115,0.12) 38px 43px,rgba(105,105,115,0.26) 43px 48px) 0 9.0px/100% 4.5px no-repeat;filter:blur(0.7px)"></div>
<div class="a" style="left:776.9px;top:172.625px;font-size:9px;line-height:13px;color:#333;font-weight:400;">文登区</div>
<div class="a" style="left:803.9px;top:171.4px;width:101.1px;height:13.5px;background:linear-gradient(90deg,rgba(100,100,110,0.13) 0px 5px,rgba(100,100,110,0.38) 5px 10px,rgba(100,100,110,0.18) 10px 15px,rgba(100,100,110,0.39) 15px 20px,rgba(100,100,110,0.11) 20px 25px,rgba(100,100,110,0.18) 25px 30px,rgba(100,100,110,0.17) 30px 35px,rgba(100,100,110,0.30) 35px 40px,rgba(100,100,110,0.18) 40px 45px,rgba(100,100,110,0.09) 45px 51px,rgba(100,100,110,0.07) 51px 56px,rgba(100,100,110,0.38) 56px 61px,rgba(100,100,110,0.28) 61px 66px,rgba(100,100,110,0.24) 66px 71px,rgba(100,100,110,0.38) 71px 76px,rgba(100,100,110,0.40) 76px 81px,rgba(100,100,110,0.20) 81px 86px,rgba(100,100,110,0.22) 86px 91px,rgba(100,100,110,0.39) 91px 96px,rgba(100,100,110,0.19) 96px 101px) 0 0.0px/100% 4.5px no-repeat,linear-gradient(90deg,rgba(100,100,110,0.70) 0px 5px,rgba(100,100,110,0.62) 5px 10px,rgba(100,100,110,0.67) 10px 15px,rgba(100,100,110,0.45) 15px 20px,rgba(100,100,110,0.88) 20px 25px,rgba(100,100,110,0.60) 25px 30px,rgba(100,100,110,0.38) 30px 35px,rgba(100,100,110,0.84) 35px 40px,rgba(100,100,110,0.73) 40px 45px,rgba(100,100,110,0.64) 45px 51px,rgba(100,100,110,0.10) 51px 56px,rgba(100,100,110,0.71) 56px 61px,rgba(100,100,110,0.77) 61px 66px,rgba(100,100,110,0.56) 66px 71px,rgba(100,100,110,0.86) 71px 76px,rgba(100,100,110,0.70) 76px 81px,rgba(100,100,110,0.80) 81px 86px,rgba(100,100,110,0.70) 86px 91px,rgba(100,100,110,0.39) 91px 96px,rgba(100,100,110,0.10) 96px 101px) 0 4.5px/100% 4.5px no-repeat,linear-gradient(90deg,rgba(100,100,110,0.07) 0px 5px,rgba(100,100,110,0.15) 5px 10px,rgba(100,100,110,0.03) 10px 15px,rgba(100,100,110,0.24) 15px 20px,rgba(100,100,110,0.03) 20px 25px,rgba(100,100,110,0.13) 25px 30px,rgba(100,100,110,0.06) 30px 35px,rgba(100,100,110,0.16) 35px 40px,rgba(100,100,110,0.32) 40px 45px,rgba(100,100,110,0.31) 45px 51px,rgba(100,100,110,0.22) 51px 56px,rgba(100,100,110,0.30) 56px 61px,rgba(100,100,110,0.01) 61px 66px,rgba(100,100,110,0.27) 66px 71px,rgba(100,100,110,0.30) 71px 76px,rgba(100,100,110,0.20) 76px 81px,rgba(100,100,110,0.09) 81px 86px,rgba(100,100,110,0.19) 86px 91px,rgba(100,100,110,0.17) 91px 96px,rgba(100,100,110,0.15) 96px 101px) 0 9.0px/100% 4.5px no-repeat;filter:blur(0.7px)"></div>
<svg style="left:930px;top:173.625px" width="10.5" height="9.5" viewBox="0 0 10.5 9.5"><g fill="none" stroke="#3a80e6" stroke-width="1.4"><circle cx="4" cy="4" r="3.2"/><path d="M6.4 6.4 L9.5 9" stroke-linecap="round"/></g></svg>
<div class="a" style="left:943.2px;top:172.625px;font-size:9px;line-height:13px;color:#333;font-weight:400;-webkit-text-stroke:0.15px #333;">查看车辆</div>
<svg style="left:985px;top:173.325px" width="9.5" height="9.5" viewBox="0 0 9.5 9.5"><g fill="none" stroke="#3a80e6" stroke-linecap="round"><path d="M7.6 1.4 L2 7.4" stroke-width="1.9"/><path d="M1.5 8.6 H8.6" stroke-width="1"/></g></svg>
<div class="a" style="left:997px;top:172.625px;font-size:9px;line-height:13px;color:#333;font-weight:400;-webkit-text-stroke:0.15px #333;">编辑</div>
<svg style="left:1032px;top:173.525px" width="7" height="9.2" viewBox="0 0 7 9.2"><g fill="#f06464"><rect x="2.3" y="0" width="2.4" height="1.3" rx="0.5"/><rect x="0.2" y="0.9" width="6.6" height="1.3" rx="0.6"/><rect x="0.6" y="2.4" width="5.8" height="6.8" rx="1.6"/></g><path d="M2.6 4.3 V7.3 M4.4 4.3 V7.3" stroke="#fff" stroke-width="0.7"/></svg>
<div class="a" style="left:1042.3px;top:172.625px;font-size:9px;line-height:13px;color:#333;font-weight:400;-webkit-text-stroke:0.15px #333;">删除</div>
<div class="a" style="left:291px;top:192.25px;width:778.5px;height:28.25px;background:#fafafa;border-bottom:1px solid #e9e9e9"></div>
<div class="a" style="left:294px;top:200.875px;width:11px;height:11px;background:#fff;border:1px solid #d9d9d9;border-radius:1.5px"></div>
<div class="a" style="left:319.5px;top:200.985px;font-size:9px;line-height:13px;color:#4592e8;text-decoration:underline">荣成</div>
<div class="a" style="left:337.5px;top:199.6px;width:109.5px;height:13.5px;background:linear-gradient(90deg,rgba(75,150,240,0.26) 0px 5px,rgba(75,150,240,0.45) 5px 10px,rgba(75,150,240,0.25) 10px 15px,rgba(75,150,240,0.01) 15px 20px,rgba(75,150,240,0.45) 20px 25px,rgba(75,150,240,0.14) 25px 30px,rgba(75,150,240,0.01) 30px 35px,rgba(75,150,240,0.09) 35px 40px,rgba(75,150,240,0.39) 40px 45px,rgba(75,150,240,0.06) 45px 50px,rgba(75,150,240,0.54) 50px 55px,rgba(75,150,240,0.01) 55px 60px,rgba(75,150,240,0.38) 60px 65px,rgba(75,150,240,0.31) 65px 70px,rgba(75,150,240,0.31) 70px 75px,rgba(75,150,240,0.28) 75px 80px,rgba(75,150,240,0.18) 80px 85px,rgba(75,150,240,0.51) 85px 90px,rgba(75,150,240,0.44) 90px 95px,rgba(75,150,240,0.43) 95px 100px,rgba(75,150,240,0.19) 100px 105px,rgba(75,150,240,0.30) 105px 110px) 0 0.0px/100% 4.5px no-repeat,linear-gradient(90deg,rgba(75,150,240,0.91) 0px 5px,rgba(75,150,240,0.62) 5px 10px,rgba(75,150,240,0.80) 10px 15px,rgba(75,150,240,0.48) 15px 20px,rgba(75,150,240,0.45) 20px 25px,rgba(75,150,240,0.94) 25px 30px,rgba(75,150,240,0.74) 30px 35px,rgba(75,150,240,0.14) 35px 40px,rgba(75,150,240,0.47) 40px 45px,rgba(75,150,240,0.75) 45px 50px,rgba(75,150,240,0.89) 50px 55px,rgba(75,150,240,0.76) 55px 60px,rgba(75,150,240,0.14) 60px 65px,rgba(75,150,240,0.48) 65px 70px,rgba(75,150,240,0.53) 70px 75px,rgba(75,150,240,0.89) 75px 80px,rgba(75,150,240,0.78) 80px 85px,rgba(75,150,240,0.45) 85px 90px,rgba(75,150,240,0.48) 90px 95px,rgba(75,150,240,0.88) 95px 100px,rgba(75,150,240,0.55) 100px 105px,rgba(75,150,240,0.84) 105px 110px) 0 4.5px/100% 4.5px no-repeat,linear-gradient(90deg,rgba(75,150,240,0.03) 0px 5px,rgba(75,150,240,0.07) 5px 10px,rgba(75,150,240,0.01) 10px 15px,rgba(75,150,240,0.01) 15px 20px,rgba(75,150,240,0.41) 20px 25px,rgba(75,150,240,0.01) 25px 30px,rgba(75,150,240,0.01) 30px 35px,rgba(75,150,240,0.46) 35px 40px,rgba(75,150,240,0.02) 40px 45px,rgba(75,150,240,0.04) 45px 50px,rgba(75,150,240,0.01) 50px 55px,rgba(75,150,240,0.38) 55px 60px,rgba(75,150,240,0.29) 60px 65px,rgba(75,150,240,0.15) 65px 70px,rgba(75,150,240,0.01) 70px 75px,rgba(75,150,240,0.41) 75px 80px,rgba(75,150,240,0.30) 80px 85px,rgba(75,150,240,0.41) 85px 90px,rgba(75,150,240,0.20) 90px 95px,rgba(75,150,240,0.32) 95px 100px,rgba(75,150,240,0.11) 100px 105px,rgba(75,150,240,0.34) 105px 110px) 0 9.0px/100% 4.5px no-repeat;filter:blur(0.6px)"></div>
<div class="a" style="left:470.8px;top:200.985px;font-size:9px;line-height:13px;color:#333;font-weight:400;">荣成市</div>
<div class="a" style="left:624.4px;top:200.985px;font-size:9px;line-height:13px;color:#333;font-weight:400;">宁</div>
<div class="a" style="left:634.0px;top:199.6px;width:20.0px;height:13.5px;background:linear-gradient(90deg,rgba(105,105,115,0.30) 0px 5px,rgba(105,105,115,0.37) 5px 10px,rgba(105,105,115,0.20) 10px 15px,rgba(105,105,115,0.19) 15px 20px) 0 0.0px/100% 4.5px no-repeat,linear-gradient(90deg,rgba(105,105,115,0.10) 0px 5px,rgba(105,105,115,0.56) 5px 10px,rgba(105,105,115,0.77) 10px 15px,rgba(105,105,115,0.60) 15px 20px) 0 4.5px/100% 4.5px no-repeat,linear-gradient(90deg,rgba(105,105,115,0.17) 0px 5px,rgba(105,105,115,0.01) 5px 10px,rgba(105,105,115,0.14) 10px 15px,rgba(105,105,115,0.03) 15px 20px) 0 9.0px/100% 4.5px no-repeat;filter:blur(0.7px)"></div>
<div class="a" style="left:701px;top:200.985px;font-size:9px;line-height:13px;color:#333;font-weight:400;">150</div>
<div class="a" style="left:716.0px;top:199.6px;width:45.0px;height:13.5px;background:linear-gradient(90deg,rgba(105,105,115,0.28) 0px 5px,rgba(105,105,115,0.09) 5px 10px,rgba(105,105,115,0.25) 10px 15px,rgba(105,105,115,0.38) 15px 20px,rgba(105,105,115,0.32) 20px 25px,rgba(105,105,115,0.26) 25px 30px,rgba(105,105,115,0.33) 30px 35px,rgba(105,105,115,0.18) 35px 40px,rgba(105,105,115,0.21) 40px 45px) 0 0.0px/100% 4.5px no-repeat,linear-gradient(90deg,rgba(105,105,115,0.47) 0px 5px,rgba(105,105,115,0.59) 5px 10px,rgba(105,105,115,0.75) 10px 15px,rgba(105,105,115,0.35) 15px 20px,rgba(105,105,115,0.57) 20px 25px,rgba(105,105,115,0.45) 25px 30px,rgba(105,105,115,0.62) 30px 35px,rgba(105,105,115,0.73) 35px 40px,rgba(105,105,115,0.71) 40px 45px) 0 4.5px/100% 4.5px no-repeat,linear-gradient(90deg,rgba(105,105,115,0.17) 0px 5px,rgba(105,105,115,0.32) 5px 10px,rgba(105,105,115,0.01) 10px 15px,rgba(105,105,115,0.28) 15px 20px,rgba(105,105,115,0.33) 20px 25px,rgba(105,105,115,0.23) 25px 30px,rgba(105,105,115,0.25) 30px 35px,rgba(105,105,115,0.33) 35px 40px,rgba(105,105,115,0.01) 40px 45px) 0 9.0px/100% 4.5px no-repeat;filter:blur(0.7px)"></div>
<div class="a" style="left:776.9px;top:200.985px;font-size:9px;line-height:13px;color:#333;font-weight:400;">荣成</div>
<div class="a" style="left:794.9px;top:199.6px;width:56.1px;height:13.5px;background:linear-gradient(90deg,rgba(100,100,110,0.25) 0px 5px,rgba(100,100,110,0.27) 5px 10px,rgba(100,100,110,0.26) 10px 15px,rgba(100,100,110,0.01) 15px 20px,rgba(100,100,110,0.07) 20px 26px,rgba(100,100,110,0.41) 26px 31px,rgba(100,100,110,0.20) 31px 36px,rgba(100,100,110,0.18) 36px 41px,rgba(100,100,110,0.44) 41px 46px,rgba(100,100,110,0.01) 46px 51px,rgba(100,100,110,0.36) 51px 56px) 0 0.0px/100% 4.5px no-repeat,linear-gradient(90deg,rgba(100,100,110,0.65) 0px 5px,rgba(100,100,110,0.66) 5px 10px,rgba(100,100,110,0.59) 10px 15px,rgba(100,100,110,0.57) 15px 20px,rgba(100,100,110,0.45) 20px 26px,rgba(100,100,110,0.72) 26px 31px,rgba(100,100,110,0.10) 31px 36px,rgba(100,100,110,0.10) 36px 41px,rgba(100,100,110,0.73) 41px 46px,rgba(100,100,110,0.79) 46px 51px,rgba(100,100,110,0.63) 51px 56px) 0 4.5px/100% 4.5px no-repeat,linear-gradient(90deg,rgba(100,100,110,0.05) 0px 5px,rgba(100,100,110,0.01) 5px 10px,rgba(100,100,110,0.26) 10px 15px,rgba(100,100,110,0.06) 15px 20px,rgba(100,100,110,0.01) 20px 26px,rgba(100,100,110,0.33) 26px 31px,rgba(100,100,110,0.19) 31px 36px,rgba(100,100,110,0.01) 36px 41px,rgba(100,100,110,0.31) 41px 46px,rgba(100,100,110,0.01) 46px 51px,rgba(100,100,110,0.35) 51px 56px) 0 9.0px/100% 4.5px no-repeat;filter:blur(0.7px)"></div>
<svg style="left:930px;top:201.875px" width="10.5" height="9.5" viewBox="0 0 10.5 9.5"><g fill="none" stroke="#3a80e6" stroke-width="1.4"><circle cx="4" cy="4" r="3.2"/><path d="M6.4 6.4 L9.5 9" stroke-linecap="round"/></g></svg>
<div class="a" style="left:943.2px;top:200.985px;font-size:9px;line-height:13px;color:#333;font-weight:400;-webkit-text-stroke:0.15px #333;">查看车辆</div>
<svg style="left:985px;top:201.575px" width="9.5" height="9.5" viewBox="0 0 9.5 9.5"><g fill="none" stroke="#3a80e6" stroke-linecap="round"><path d="M7.6 1.4 L2 7.4" stroke-width="1.9"/><path d="M1.5 8.6 H8.6" stroke-width="1"/></g></svg>
<div class="a" style="left:997px;top:200.985px;font-size:9px;line-height:13px;color:#333;font-weight:400;-webkit-text-stroke:0.15px #333;">编辑</div>
<svg style="left:1032px;top:201.775px" width="7" height="9.2" viewBox="0 0 7 9.2"><g fill="#f06464"><rect x="2.3" y="0" width="2.4" height="1.3" rx="0.5"/><rect x="0.2" y="0.9" width="6.6" height="1.3" rx="0.6"/><rect x="0.6" y="2.4" width="5.8" height="6.8" rx="1.6"/></g><path d="M2.6 4.3 V7.3 M4.4 4.3 V7.3" stroke="#fff" stroke-width="0.7"/></svg>
<div class="a" style="left:1042.3px;top:200.985px;font-size:9px;line-height:13px;color:#333;font-weight:400;-webkit-text-stroke:0.15px #333;">删除</div>
<div class="a" style="left:291px;top:220.5px;width:778.5px;height:28.25px;background:#fff;border-bottom:1px solid #e9e9e9"></div>
<div class="a" style="left:294px;top:229.125px;width:11px;height:11px;background:#fff;border:1px solid #d9d9d9;border-radius:1.5px"></div>
<div class="a" style="left:319.5px;top:229.345px;font-size:9px;line-height:13px;color:#4592e8;text-decoration:underline">威海</div>
<div class="a" style="left:337.5px;top:227.9px;width:100.5px;height:13.5px;background:linear-gradient(90deg,rgba(75,150,240,0.10) 0px 5px,rgba(75,150,240,0.25) 5px 10px,rgba(75,150,240,0.25) 10px 15px,rgba(75,150,240,0.39) 15px 20px,rgba(75,150,240,0.14) 20px 25px,rgba(75,150,240,0.36) 25px 30px,rgba(75,150,240,0.40) 30px 35px,rgba(75,150,240,0.40) 35px 40px,rgba(75,150,240,0.46) 40px 45px,rgba(75,150,240,0.29) 45px 50px,rgba(75,150,240,0.20) 50px 55px,rgba(75,150,240,0.24) 55px 60px,rgba(75,150,240,0.01) 60px 65px,rgba(75,150,240,0.42) 65px 70px,rgba(75,150,240,0.19) 70px 75px,rgba(75,150,240,0.23) 75px 80px,rgba(75,150,240,0.38) 80px 85px,rgba(75,150,240,0.44) 85px 90px,rgba(75,150,240,0.33) 90px 95px,rgba(75,150,240,0.46) 95px 100px) 0 0.0px/100% 4.5px no-repeat,linear-gradient(90deg,rgba(75,150,240,0.68) 0px 5px,rgba(75,150,240,0.48) 5px 10px,rgba(75,150,240,0.82) 10px 15px,rgba(75,150,240,0.61) 15px 20px,rgba(75,150,240,0.87) 20px 25px,rgba(75,150,240,0.14) 25px 30px,rgba(75,150,240,0.50) 30px 35px,rgba(75,150,240,0.65) 35px 40px,rgba(75,150,240,0.88) 40px 45px,rgba(75,150,240,0.87) 45px 50px,rgba(75,150,240,0.52) 50px 55px,rgba(75,150,240,0.51) 55px 60px,rgba(75,150,240,0.77) 60px 65px,rgba(75,150,240,0.74) 65px 70px,rgba(75,150,240,0.80) 70px 75px,rgba(75,150,240,0.80) 75px 80px,rgba(75,150,240,0.72) 80px 85px,rgba(75,150,240,0.92) 85px 90px,rgba(75,150,240,0.54) 90px 95px,rgba(75,150,240,0.53) 95px 100px) 0 4.5px/100% 4.5px no-repeat,linear-gradient(90deg,rgba(75,150,240,0.11) 0px 5px,rgba(75,150,240,0.21) 5px 10px,rgba(75,150,240,0.24) 10px 15px,rgba(75,150,240,0.42) 15px 20px,rgba(75,150,240,0.09) 20px 25px,rgba(75,150,240,0.01) 25px 30px,rgba(75,150,240,0.42) 30px 35px,rgba(75,150,240,0.44) 35px 40px,rgba(75,150,240,0.10) 40px 45px,rgba(75,150,240,0.03) 45px 50px,rgba(75,150,240,0.24) 50px 55px,rgba(75,150,240,0.32) 55px 60px,rgba(75,150,240,0.33) 60px 65px,rgba(75,150,240,0.26) 65px 70px,rgba(75,150,240,0.30) 70px 75px,rgba(75,150,240,0.13) 75px 80px,rgba(75,150,240,0.49) 80px 85px,rgba(75,150,240,0.11) 85px 90px,rgba(75,150,240,0.48) 90px 95px,rgba(75,150,240,0.14) 95px 100px) 0 9.0px/100% 4.5px no-repeat;filter:blur(0.6px)"></div>
<div class="a" style="left:470.8px;top:229.345px;font-size:9px;line-height:13px;color:#333;font-weight:400;">文登区</div>
<div class="a" style="left:624.4px;top:229.345px;font-size:9px;line-height:13px;color:#333;font-weight:400;">侯</div>
<div class="a" style="left:634.0px;top:227.9px;width:19.0px;height:13.5px;background:linear-gradient(90deg,rgba(105,105,115,0.12) 0px 5px,rgba(105,105,115,0.37) 5px 10px,rgba(105,105,115,0.12) 10px 14px,rgba(105,105,115,0.39) 14px 19px) 0 0.0px/100% 4.5px no-repeat,linear-gradient(90deg,rgba(105,105,115,0.70) 0px 5px,rgba(105,105,115,0.39) 5px 10px,rgba(105,105,115,0.70) 10px 14px,rgba(105,105,115,0.53) 14px 19px) 0 4.5px/100% 4.5px no-repeat,linear-gradient(90deg,rgba(105,105,115,0.10) 0px 5px,rgba(105,105,115,0.21) 5px 10px,rgba(105,105,115,0.03) 10px 14px,rgba(105,105,115,0.22) 14px 19px) 0 9.0px/100% 4.5px no-repeat;filter:blur(0.7px)"></div>
<div class="a" style="left:701px;top:229.345px;font-size:9px;line-height:13px;color:#333;font-weight:400;">15</div>
<div class="a" style="left:711.0px;top:227.9px;width:50.0px;height:13.5px;background:linear-gradient(90deg,rgba(105,105,115,0.18) 0px 5px,rgba(105,105,115,0.23) 5px 10px,rgba(105,105,115,0.20) 10px 15px,rgba(105,105,115,0.27) 15px 20px,rgba(105,105,115,0.01) 20px 25px,rgba(105,105,115,0.23) 25px 30px,rgba(105,105,115,0.35) 30px 35px,rgba(105,105,115,0.14) 35px 40px,rgba(105,105,115,0.10) 40px 45px,rgba(105,105,115,0.15) 45px 50px) 0 0.0px/100% 4.5px no-repeat,linear-gradient(90deg,rgba(105,105,115,0.74) 0px 5px,rgba(105,105,115,0.77) 5px 10px,rgba(105,105,115,0.55) 10px 15px,rgba(105,105,115,0.83) 15px 20px,rgba(105,105,115,0.74) 20px 25px,rgba(105,105,115,0.39) 25px 30px,rgba(105,105,115,0.88) 30px 35px,rgba(105,105,115,0.54) 35px 40px,rgba(105,105,115,0.87) 40px 45px,rgba(105,105,115,0.40) 45px 50px) 0 4.5px/100% 4.5px no-repeat,linear-gradient(90deg,rgba(105,105,115,0.31) 0px 5px,rgba(105,105,115,0.02) 5px 10px,rgba(105,105,115,0.23) 10px 15px,rgba(105,105,115,0.07) 15px 20px,rgba(105,105,115,0.18) 20px 25px,rgba(105,105,115,0.01) 25px 30px,rgba(105,105,115,0.13) 30px 35px,rgba(105,105,115,0.33) 35px 40px,rgba(105,105,115,0.23) 40px 45px,rgba(105,105,115,0.24) 45px 50px) 0 9.0px/100% 4.5px no-repeat;filter:blur(0.7px)"></div>
<div class="a" style="left:776.9px;top:229.345px;font-size:9px;line-height:13px;color:#333;font-weight:400;">宋</div>
<div class="a" style="left:785.9px;top:227.9px;width:73.1px;height:13.5px;background:linear-gradient(90deg,rgba(100,100,110,0.37) 0px 5px,rgba(100,100,110,0.41) 5px 10px,rgba(100,100,110,0.38) 10px 15px,rgba(100,100,110,0.44) 15px 19px,rgba(100,100,110,0.41) 19px 24px,rgba(100,100,110,0.08) 24px 29px,rgba(100,100,110,0.01) 29px 34px,rgba(100,100,110,0.44) 34px 39px,rgba(100,100,110,0.44) 39px 44px,rgba(100,100,110,0.08) 44px 49px,rgba(100,100,110,0.22) 49px 54px,rgba(100,100,110,0.08) 54px 58px,rgba(100,100,110,0.14) 58px 63px,rgba(100,100,110,0.30) 63px 68px,rgba(100,100,110,0.10) 68px 73px) 0 0.0px/100% 4.5px no-repeat,linear-gradient(90deg,rgba(100,100,110,0.65) 0px 5px,rgba(100,100,110,0.86) 5px 10px,rgba(100,100,110,0.61) 10px 15px,rgba(100,100,110,0.77) 15px 19px,rgba(100,100,110,0.71) 19px 24px,rgba(100,100,110,0.60) 24px 29px,rgba(100,100,110,0.53) 29px 34px,rgba(100,100,110,0.45) 34px 39px,rgba(100,100,110,0.64) 39px 44px,rgba(100,100,110,0.60) 44px 49px,rgba(100,100,110,0.54) 49px 54px,rgba(100,100,110,0.79) 54px 58px,rgba(100,100,110,0.56) 58px 63px,rgba(100,100,110,0.85) 63px 68px,rgba(100,100,110,0.79) 68px 73px) 0 4.5px/100% 4.5px no-repeat,linear-gradient(90deg,rgba(100,100,110,0.01) 0px 5px,rgba(100,100,110,0.09) 5px 10px,rgba(100,100,110,0.19) 10px 15px,rgba(100,100,110,0.01) 15px 19px,rgba(100,100,110,0.18) 19px 24px,rgba(100,100,110,0.24) 24px 29px,rgba(100,100,110,0.27) 29px 34px,rgba(100,100,110,0.03) 34px 39px,rgba(100,100,110,0.26) 39px 44px,rgba(100,100,110,0.34) 44px 49px,rgba(100,100,110,0.10) 49px 54px,rgba(100,100,110,0.09) 54px 58px,rgba(100,100,110,0.15) 58px 63px,rgba(100,100,110,0.25) 63px 68px,rgba(100,100,110,0.08) 68px 73px) 0 9.0px/100% 4.5px no-repeat;filter:blur(0.7px)"></div>
<svg style="left:930px;top:230.125px" width="10.5" height="9.5" viewBox="0 0 10.5 9.5"><g fill="none" stroke="#3a80e6" stroke-width="1.4"><circle cx="4" cy="4" r="3.2"/><path d="M6.4 6.4 L9.5 9" stroke-linecap="round"/></g></svg>
<div class="a" style="left:943.2px;top:229.345px;font-size:9px;line-height:13px;color:#333;font-weight:400;-webkit-text-stroke:0.15px #333;">查看车辆</div>
<svg style="left:985px;top:229.825px" width="9.5" height="9.5" viewBox="0 0 9.5 9.5"><g fill="none" stroke="#3a80e6" stroke-linecap="round"><path d="M7.6 1.4 L2 7.4" stroke-width="1.9"/><path d="M1.5 8.6 H8.6" stroke-width="1"/></g></svg>
<div class="a" style="left:997px;top:229.345px;font-size:9px;line-height:13px;color:#333;font-weight:400;-webkit-text-stroke:0.15px #333;">编辑</div>
<svg style="left:1032px;top:230.025px" width="7" height="9.2" viewBox="0 0 7 9.2"><g fill="#f06464"><rect x="2.3" y="0" width="2.4" height="1.3" rx="0.5"/><rect x="0.2" y="0.9" width="6.6" height="1.3" rx="0.6"/><rect x="0.6" y="2.4" width="5.8" height="6.8" rx="1.6"/></g><path d="M2.6 4.3 V7.3 M4.4 4.3 V7.3" stroke="#fff" stroke-width="0.7"/></svg>
<div class="a" style="left:1042.3px;top:229.345px;font-size:9px;line-height:13px;color:#333;font-weight:400;-webkit-text-stroke:0.15px #333;">删除</div>
<div class="a" style="left:291px;top:248.75px;width:778.5px;height:28.25px;background:#fafafa;border-bottom:1px solid #e9e9e9"></div>
<div class="a" style="left:294px;top:257.375px;width:11px;height:11px;background:#fff;border:1px solid #d9d9d9;border-radius:1.5px"></div>
<div class="a" style="left:319.5px;top:257.705px;font-size:9px;line-height:13px;color:#4592e8;text-decoration:underline">荣成</div>
<div class="a" style="left:337.5px;top:256.1px;width:100.5px;height:13.5px;background:linear-gradient(90deg,rgba(75,150,240,0.22) 0px 5px,rgba(75,150,240,0.50) 5px 10px,rgba(75,150,240,0.01) 10px 15px,rgba(75,150,240,0.29) 15px 20px,rgba(75,150,240,0.01) 20px 25px,rgba(75,150,240,0.47) 25px 30px,rgba(75,150,240,0.50) 30px 35px,rgba(75,150,240,0.40) 35px 40px,rgba(75,150,240,0.01) 40px 45px,rgba(75,150,240,0.49) 45px 50px,rgba(75,150,240,0.01) 50px 55px,rgba(75,150,240,0.13) 55px 60px,rgba(75,150,240,0.53) 60px 65px,rgba(75,150,240,0.45) 65px 70px,rgba(75,150,240,0.28) 70px 75px,rgba(75,150,240,0.43) 75px 80px,rgba(75,150,240,0.01) 80px 85px,rgba(75,150,240,0.05) 85px 90px,rgba(75,150,240,0.45) 90px 95px,rgba(75,150,240,0.20) 95px 100px) 0 0.0px/100% 4.5px no-repeat,linear-gradient(90deg,rgba(75,150,240,0.63) 0px 5px,rgba(75,150,240,0.78) 5px 10px,rgba(75,150,240,0.14) 10px 15px,rgba(75,150,240,0.70) 15px 20px,rgba(75,150,240,0.66) 20px 25px,rgba(75,150,240,0.14) 25px 30px,rgba(75,150,240,0.72) 30px 35px,rgba(75,150,240,0.69) 35px 40px,rgba(75,150,240,0.73) 40px 45px,rgba(75,150,240,0.50) 45px 50px,rgba(75,150,240,0.49) 50px 55px,rgba(75,150,240,0.91) 55px 60px,rgba(75,150,240,0.81) 60px 65px,rgba(75,150,240,0.80) 65px 70px,rgba(75,150,240,0.68) 70px 75px,rgba(75,150,240,0.14) 75px 80px,rgba(75,150,240,0.63) 80px 85px,rgba(75,150,240,0.61) 85px 90px,rgba(75,150,240,0.52) 90px 95px,rgba(75,150,240,0.49) 95px 100px) 0 4.5px/100% 4.5px no-repeat,linear-gradient(90deg,rgba(75,150,240,0.19) 0px 5px,rgba(75,150,240,0.20) 5px 10px,rgba(75,150,240,0.32) 10px 15px,rgba(75,150,240,0.07) 15px 20px,rgba(75,150,240,0.44) 20px 25px,rgba(75,150,240,0.47) 25px 30px,rgba(75,150,240,0.36) 30px 35px,rgba(75,150,240,0.31) 35px 40px,rgba(75,150,240,0.20) 40px 45px,rgba(75,150,240,0.46) 45px 50px,rgba(75,150,240,0.12) 50px 55px,rgba(75,150,240,0.01) 55px 60px,rgba(75,150,240,0.15) 60px 65px,rgba(75,150,240,0.34) 65px 70px,rgba(75,150,240,0.43) 70px 75px,rgba(75,150,240,0.43) 75px 80px,rgba(75,150,240,0.18) 80px 85px,rgba(75,150,240,0.45) 85px 90px,rgba(75,150,240,0.21) 90px 95px,rgba(75,150,240,0.20) 95px 100px) 0 9.0px/100% 4.5px no-repeat;filter:blur(0.6px)"></div>
<div class="a" style="left:470.8px;top:257.705px;font-size:9px;line-height:13px;color:#333;font-weight:400;">荣成市</div>
<div class="a" style="left:624.4px;top:257.705px;font-size:9px;line-height:13px;color:#333;font-weight:400;">颜</div>
<div class="a" style="left:634.0px;top:256.1px;width:19.0px;height:13.5px;background:linear-gradient(90deg,rgba(105,105,115,0.19) 0px 5px,rgba(105,105,115,0.17) 5px 10px,rgba(105,105,115,0.06) 10px 14px,rgba(105,105,115,0.33) 14px 19px) 0 0.0px/100% 4.5px no-repeat,linear-gradient(90deg,rgba(105,105,115,0.37) 0px 5px,rgba(105,105,115,0.84) 5px 10px,rgba(105,105,115,0.75) 10px 14px,rgba(105,105,115,0.89) 14px 19px) 0 4.5px/100% 4.5px no-repeat,linear-gradient(90deg,rgba(105,105,115,0.14) 0px 5px,rgba(105,105,115,0.22) 5px 10px,rgba(105,105,115,0.30) 10px 14px,rgba(105,105,115,0.23) 14px 19px) 0 9.0px/100% 4.5px no-repeat;filter:blur(0.7px)"></div>
<div class="a" style="left:776.9px;top:257.705px;font-size:9px;line-height:13px;color:#333;font-weight:400;">山东</div>
<div class="a" style="left:794.9px;top:256.1px;width:106.1px;height:13.5px;background:linear-gradient(90deg,rgba(100,100,110,0.11) 0px 5px,rgba(100,100,110,0.01) 5px 10px,rgba(100,100,110,0.08) 10px 15px,rgba(100,100,110,0.26) 15px 20px,rgba(100,100,110,0.34) 20px 25px,rgba(100,100,110,0.11) 25px 30px,rgba(100,100,110,0.11) 30px 35px,rgba(100,100,110,0.36) 35px 40px,rgba(100,100,110,0.13) 40px 45px,rgba(100,100,110,0.10) 45px 51px,rgba(100,100,110,0.28) 51px 56px,rgba(100,100,110,0.07) 56px 61px,rgba(100,100,110,0.09) 61px 66px,rgba(100,100,110,0.01) 66px 71px,rgba(100,100,110,0.20) 71px 76px,rgba(100,100,110,0.25) 76px 81px,rgba(100,100,110,0.20) 81px 86px,rgba(100,100,110,0.44) 86px 91px,rgba(100,100,110,0.05) 91px 96px,rgba(100,100,110,0.12) 96px 101px,rgba(100,100,110,0.33) 101px 106px) 0 0.0px/100% 4.5px no-repeat,linear-gradient(90deg,rgba(100,100,110,0.77) 0px 5px,rgba(100,100,110,0.58) 5px 10px,rgba(100,100,110,0.56) 10px 15px,rgba(100,100,110,0.57) 15px 20px,rgba(100,100,110,0.65) 20px 25px,rgba(100,100,110,0.59) 25px 30px,rgba(100,100,110,0.52) 30px 35px,rgba(100,100,110,0.86) 35px 40px,rgba(100,100,110,0.68) 40px 45px,rgba(100,100,110,0.44) 45px 51px,rgba(100,100,110,0.37) 51px 56px,rgba(100,100,110,0.54) 56px 61px,rgba(100,100,110,0.10) 61px 66px,rgba(100,100,110,0.81) 66px 71px,rgba(100,100,110,0.69) 71px 76px,rgba(100,100,110,0.85) 76px 81px,rgba(100,100,110,0.38) 81px 86px,rgba(100,100,110,0.83) 86px 91px,rgba(100,100,110,0.77) 91px 96px,rgba(100,100,110,0.46) 96px 101px,rgba(100,100,110,0.10) 101px 106px) 0 4.5px/100% 4.5px no-repeat,linear-gradient(90deg,rgba(100,100,110,0.01) 0px 5px,rgba(100,100,110,0.15) 5px 10px,rgba(100,100,110,0.13) 10px 15px,rgba(100,100,110,0.01) 15px 20px,rgba(100,100,110,0.26) 20px 25px,rgba(100,100,110,0.26) 25px 30px,rgba(100,100,110,0.18) 30px 35px,rgba(100,100,110,0.01) 35px 40px,rgba(100,100,110,0.27) 40px 45px,rgba(100,100,110,0.08) 45px 51px,rgba(100,100,110,0.30) 51px 56px,rgba(100,100,110,0.01) 56px 61px,rgba(100,100,110,0.06) 61px 66px,rgba(100,100,110,0.29) 66px 71px,rgba(100,100,110,0.33) 71px 76px,rgba(100,100,110,0.02) 76px 81px,rgba(100,100,110,0.33) 81px 86px,rgba(100,100,110,0.27) 86px 91px,rgba(100,100,110,0.01) 91px 96px,rgba(100,100,110,0.24) 96px 101px,rgba(100,100,110,0.22) 101px 106px) 0 9.0px/100% 4.5px no-repeat;filter:blur(0.7px)"></div>
<div class="a" style="left:901.5px;top:257.705px;font-size:8px;line-height:13px;color:#666;font-weight:400;-webkit-text-stroke:0.01px #666;">...</div>
<svg style="left:930px;top:258.375px" width="10.5" height="9.5" viewBox="0 0 10.5 9.5"><g fill="none" stroke="#3a80e6" stroke-width="1.4"><circle cx="4" cy="4" r="3.2"/><path d="M6.4 6.4 L9.5 9" stroke-linecap="round"/></g></svg>
<div class="a" style="left:943.2px;top:257.705px;font-size:9px;line-height:13px;color:#333;font-weight:400;-webkit-text-stroke:0.15px #333;">查看车辆</div>
<svg style="left:985px;top:258.075px" width="9.5" height="9.5" viewBox="0 0 9.5 9.5"><g fill="none" stroke="#3a80e6" stroke-linecap="round"><path d="M7.6 1.4 L2 7.4" stroke-width="1.9"/><path d="M1.5 8.6 H8.6" stroke-width="1"/></g></svg>
<div class="a" style="left:997px;top:257.705px;font-size:9px;line-height:13px;color:#333;font-weight:400;-webkit-text-stroke:0.15px #333;">编辑</div>
<svg style="left:1032px;top:258.275px" width="7" height="9.2" viewBox="0 0 7 9.2"><g fill="#f06464"><rect x="2.3" y="0" width="2.4" height="1.3" rx="0.5"/><rect x="0.2" y="0.9" width="6.6" height="1.3" rx="0.6"/><rect x="0.6" y="2.4" width="5.8" height="6.8" rx="1.6"/></g><path d="M2.6 4.3 V7.3 M4.4 4.3 V7.3" stroke="#fff" stroke-width="0.7"/></svg>
<div class="a" style="left:1042.3px;top:257.705px;font-size:9px;line-height:13px;color:#333;font-weight:400;-webkit-text-stroke:0.15px #333;">删除</div>
<div class="a" style="left:291px;top:277.0px;width:778.5px;height:28.25px;background:#fff;border-bottom:1px solid #e9e9e9"></div>
<div class="a" style="left:294px;top:285.625px;width:11px;height:11px;background:#fff;border:1px solid #d9d9d9;border-radius:1.5px"></div>
<div class="a" style="left:319.5px;top:286.065px;font-size:9px;line-height:13px;color:#4592e8;text-decoration:underline">威海</div>
<div class="a" style="left:337.5px;top:284.4px;width:90.5px;height:13.5px;background:linear-gradient(90deg,rgba(75,150,240,0.25) 0px 5px,rgba(75,150,240,0.10) 5px 10px,rgba(75,150,240,0.22) 10px 15px,rgba(75,150,240,0.10) 15px 20px,rgba(75,150,240,0.38) 20px 25px,rgba(75,150,240,0.32) 25px 30px,rgba(75,150,240,0.34) 30px 35px,rgba(75,150,240,0.14) 35px 40px,rgba(75,150,240,0.30) 40px 45px,rgba(75,150,240,0.25) 45px 50px,rgba(75,150,240,0.07) 50px 55px,rgba(75,150,240,0.46) 55px 60px,rgba(75,150,240,0.15) 60px 65px,rgba(75,150,240,0.10) 65px 70px,rgba(75,150,240,0.01) 70px 75px,rgba(75,150,240,0.35) 75px 80px,rgba(75,150,240,0.48) 80px 85px,rgba(75,150,240,0.44) 85px 90px) 0 0.0px/100% 4.5px no-repeat,linear-gradient(90deg,rgba(75,150,240,0.60) 0px 5px,rgba(75,150,240,0.61) 5px 10px,rgba(75,150,240,0.58) 10px 15px,rgba(75,150,240,0.94) 15px 20px,rgba(75,150,240,0.57) 20px 25px,rgba(75,150,240,0.70) 25px 30px,rgba(75,150,240,0.47) 30px 35px,rgba(75,150,240,0.68) 35px 40px,rgba(75,150,240,0.94) 40px 45px,rgba(75,150,240,0.71) 45px 50px,rgba(75,150,240,0.14) 50px 55px,rgba(75,150,240,0.89) 55px 60px,rgba(75,150,240,0.14) 60px 65px,rgba(75,150,240,0.73) 65px 70px,rgba(75,150,240,0.59) 70px 75px,rgba(75,150,240,0.14) 75px 80px,rgba(75,150,240,0.81) 80px 85px,rgba(75,150,240,0.49) 85px 90px) 0 4.5px/100% 4.5px no-repeat,linear-gradient(90deg,rgba(75,150,240,0.49) 0px 5px,rgba(75,150,240,0.14) 5px 10px,rgba(75,150,240,0.49) 10px 15px,rgba(75,150,240,0.22) 15px 20px,rgba(75,150,240,0.14) 20px 25px,rgba(75,150,240,0.12) 25px 30px,rgba(75,150,240,0.07) 30px 35px,rgba(75,150,240,0.22) 35px 40px,rgba(75,150,240,0.40) 40px 45px,rgba(75,150,240,0.01) 45px 50px,rgba(75,150,240,0.07) 50px 55px,rgba(75,150,240,0.38) 55px 60px,rgba(75,150,240,0.35) 60px 65px,rgba(75,150,240,0.27) 65px 70px,rgba(75,150,240,0.01) 70px 75px,rgba(75,150,240,0.27) 75px 80px,rgba(75,150,240,0.49) 80px 85px,rgba(75,150,240,0.01) 85px 90px) 0 9.0px/100% 4.5px no-repeat;filter:blur(0.6px)"></div>
<div class="a" style="left:470.8px;top:286.065px;font-size:9px;line-height:13px;color:#333;font-weight:400;">经区</div>
<div class="a" style="left:624.4px;top:286.065px;font-size:9px;line-height:13px;color:#333;font-weight:400;">江</div>
<div class="a" style="left:634.0px;top:284.4px;width:9.0px;height:13.5px;background:linear-gradient(90deg,rgba(105,105,115,0.28) 0px 4px,rgba(105,105,115,0.35) 4px 9px) 0 0.0px/100% 4.5px no-repeat,linear-gradient(90deg,rgba(105,105,115,0.43) 0px 4px,rgba(105,105,115,0.73) 4px 9px) 0 4.5px/100% 4.5px no-repeat,linear-gradient(90deg,rgba(105,105,115,0.34) 0px 4px,rgba(105,105,115,0.12) 4px 9px) 0 9.0px/100% 4.5px no-repeat;filter:blur(0.7px)"></div>
<div class="a" style="left:776.9px;top:286.065px;font-size:9px;line-height:13px;color:#333;font-weight:400;">山东</div>
<div class="a" style="left:794.9px;top:284.4px;width:106.1px;height:13.5px;background:linear-gradient(90deg,rgba(100,100,110,0.20) 0px 5px,rgba(100,100,110,0.17) 5px 10px,rgba(100,100,110,0.41) 10px 15px,rgba(100,100,110,0.41) 15px 20px,rgba(100,100,110,0.19) 20px 25px,rgba(100,100,110,0.13) 25px 30px,rgba(100,100,110,0.30) 30px 35px,rgba(100,100,110,0.13) 35px 40px,rgba(100,100,110,0.01) 40px 45px,rgba(100,100,110,0.29) 45px 51px,rgba(100,100,110,0.01) 51px 56px,rgba(100,100,110,0.01) 56px 61px,rgba(100,100,110,0.28) 61px 66px,rgba(100,100,110,0.19) 66px 71px,rgba(100,100,110,0.31) 71px 76px,rgba(100,100,110,0.45) 76px 81px,rgba(100,100,110,0.06) 81px 86px,rgba(100,100,110,0.30) 86px 91px,rgba(100,100,110,0.17) 91px 96px,rgba(100,100,110,0.14) 96px 101px,rgba(100,100,110,0.17) 101px 106px) 0 0.0px/100% 4.5px no-repeat,linear-gradient(90deg,rgba(100,100,110,0.71) 0px 5px,rgba(100,100,110,0.89) 5px 10px,rgba(100,100,110,0.74) 10px 15px,rgba(100,100,110,0.64) 15px 20px,rgba(100,100,110,0.64) 20px 25px,rgba(100,100,110,0.10) 25px 30px,rgba(100,100,110,0.58) 30px 35px,rgba(100,100,110,0.44) 35px 40px,rgba(100,100,110,0.80) 40px 45px,rgba(100,100,110,0.54) 45px 51px,rgba(100,100,110,0.37) 51px 56px,rgba(100,100,110,0.78) 56px 61px,rgba(100,100,110,0.40) 61px 66px,rgba(100,100,110,0.38) 66px 71px,rgba(100,100,110,0.10) 71px 76px,rgba(100,100,110,0.70) 76px 81px,rgba(100,100,110,0.56) 81px 86px,rgba(100,100,110,0.57) 86px 91px,rgba(100,100,110,0.46) 91px 96px,rgba(100,100,110,0.51) 96px 101px,rgba(100,100,110,0.36) 101px 106px) 0 4.5px/100% 4.5px no-repeat,linear-gradient(90deg,rgba(100,100,110,0.27) 0px 5px,rgba(100,100,110,0.01) 5px 10px,rgba(100,100,110,0.32) 10px 15px,rgba(100,100,110,0.26) 15px 20px,rgba(100,100,110,0.14) 20px 25px,rgba(100,100,110,0.16) 25px 30px,rgba(100,100,110,0.23) 30px 35px,rgba(100,100,110,0.30) 35px 40px,rgba(100,100,110,0.32) 40px 45px,rgba(100,100,110,0.01) 45px 51px,rgba(100,100,110,0.31) 51px 56px,rgba(100,100,110,0.30) 56px 61px,rgba(100,100,110,0.32) 61px 66px,rgba(100,100,110,0.16) 66px 71px,rgba(100,100,110,0.17) 71px 76px,rgba(100,100,110,0.23) 76px 81px,rgba(100,100,110,0.08) 81px 86px,rgba(100,100,110,0.21) 86px 91px,rgba(100,100,110,0.22) 91px 96px,rgba(100,100,110,0.26) 96px 101px,rgba(100,100,110,0.23) 101px 106px) 0 9.0px/100% 4.5px no-repeat;filter:blur(0.7px)"></div>
<div class="a" style="left:901.5px;top:286.065px;font-size:8px;line-height:13px;color:#666;font-weight:400;-webkit-text-stroke:0.01px #666;">...</div>
<svg style="left:930px;top:286.625px" width="10.5" height="9.5" viewBox="0 0 10.5 9.5"><g fill="none" stroke="#3a80e6" stroke-width="1.4"><circle cx="4" cy="4" r="3.2"/><path d="M6.4 6.4 L9.5 9" stroke-linecap="round"/></g></svg>
<div class="a" style="left:943.2px;top:286.065px;font-size:9px;line-height:13px;color:#333;font-weight:400;-webkit-text-stroke:0.15px #333;">查看车辆</div>
<svg style="left:985px;top:286.325px" width="9.5" height="9.5" viewBox="0 0 9.5 9.5"><g fill="none" stroke="#3a80e6" stroke-linecap="round"><path d="M7.6 1.4 L2 7.4" stroke-width="1.9"/><path d="M1.5 8.6 H8.6" stroke-width="1"/></g></svg>
<div class="a" style="left:997px;top:286.065px;font-size:9px;line-height:13px;color:#333;font-weight:400;-webkit-text-stroke:0.15px #333;">编辑</div>
<svg style="left:1032px;top:286.525px" width="7" height="9.2" viewBox="0 0 7 9.2"><g fill="#f06464"><rect x="2.3" y="0" width="2.4" height="1.3" rx="0.5"/><rect x="0.2" y="0.9" width="6.6" height="1.3" rx="0.6"/><rect x="0.6" y="2.4" width="5.8" height="6.8" rx="1.6"/></g><path d="M2.6 4.3 V7.3 M4.4 4.3 V7.3" stroke="#fff" stroke-width="0.7"/></svg>
<div class="a" style="left:1042.3px;top:286.065px;font-size:9px;line-height:13px;color:#333;font-weight:400;-webkit-text-stroke:0.15px #333;">删除</div>
<div class="a" style="left:291px;top:305.25px;width:778.5px;height:28.25px;background:#fafafa;border-bottom:1px solid #e9e9e9"></div>
<div class="a" style="left:294px;top:313.875px;width:11px;height:11px;background:#fff;border:1px solid #d9d9d9;border-radius:1.5px"></div>
<div class="a" style="left:319.5px;top:314.425px;font-size:9px;line-height:13px;color:#4592e8;text-decoration:underline">威海</div>
<div class="a" style="left:337.5px;top:312.6px;width:93.0px;height:13.5px;background:linear-gradient(90deg,rgba(75,150,240,0.53) 0px 5px,rgba(75,150,240,0.47) 5px 10px,rgba(75,150,240,0.36) 10px 15px,rgba(75,150,240,0.10) 15px 20px,rgba(75,150,240,0.35) 20px 24px,rgba(75,150,240,0.15) 24px 29px,rgba(75,150,240,0.06) 29px 34px,rgba(75,150,240,0.32) 34px 39px,rgba(75,150,240,0.13) 39px 44px,rgba(75,150,240,0.40) 44px 49px,rgba(75,150,240,0.31) 49px 54px,rgba(75,150,240,0.29) 54px 59px,rgba(75,150,240,0.01) 59px 64px,rgba(75,150,240,0.39) 64px 69px,rgba(75,150,240,0.26) 69px 73px,rgba(75,150,240,0.34) 73px 78px,rgba(75,150,240,0.16) 78px 83px,rgba(75,150,240,0.01) 83px 88px,rgba(75,150,240,0.18) 88px 93px) 0 0.0px/100% 4.5px no-repeat,linear-gradient(90deg,rgba(75,150,240,0.14) 0px 5px,rgba(75,150,240,0.72) 5px 10px,rgba(75,150,240,0.47) 10px 15px,rgba(75,150,240,0.14) 15px 20px,rgba(75,150,240,0.14) 20px 24px,rgba(75,150,240,0.64) 24px 29px,rgba(75,150,240,0.85) 29px 34px,rgba(75,150,240,0.76) 34px 39px,rgba(75,150,240,0.47) 39px 44px,rgba(75,150,240,0.94) 44px 49px,rgba(75,150,240,0.61) 49px 54px,rgba(75,150,240,0.66) 54px 59px,rgba(75,150,240,0.93) 59px 64px,rgba(75,150,240,0.54) 64px 69px,rgba(75,150,240,0.89) 69px 73px,rgba(75,150,240,0.61) 73px 78px,rgba(75,150,240,0.60) 78px 83px,rgba(75,150,240,0.81) 83px 88px,rgba(75,150,240,0.80) 88px 93px) 0 4.5px/100% 4.5px no-repeat,linear-gradient(90deg,rgba(75,150,240,0.17) 0px 5px,rgba(75,150,240,0.15) 5px 10px,rgba(75,150,240,0.50) 10px 15px,rgba(75,150,240,0.27) 15px 20px,rgba(75,150,240,0.43) 20px 24px,rgba(75,150,240,0.46) 24px 29px,rgba(75,150,240,0.21) 29px 34px,rgba(75,150,240,0.43) 34px 39px,rgba(75,150,240,0.24) 39px 44px,rgba(75,150,240,0.16) 44px 49px,rgba(75,150,240,0.23) 49px 54px,rgba(75,150,240,0.01) 54px 59px,rgba(75,150,240,0.21) 59px 64px,rgba(75,150,240,0.20) 64px 69px,rgba(75,150,240,0.06) 69px 73px,rgba(75,150,240,0.23) 73px 78px,rgba(75,150,240,0.01) 78px 83px,rgba(75,150,240,0.36) 83px 88px,rgba(75,150,240,0.05) 88px 93px) 0 9.0px/100% 4.5px no-repeat;filter:blur(0.6px)"></div>
<div class="a" style="left:470.8px;top:314.425px;font-size:9px;line-height:13px;color:#333;font-weight:400;">经区</div>
<div class="a" style="left:624.4px;top:314.425px;font-size:9px;line-height:13px;color:#333;font-weight:400;">于</div>
<div class="a" style="left:634.0px;top:312.6px;width:19.0px;height:13.5px;background:linear-gradient(90deg,rgba(105,105,115,0.39) 0px 5px,rgba(105,105,115,0.33) 5px 10px,rgba(105,105,115,0.37) 10px 14px,rgba(105,105,115,0.07) 14px 19px) 0 0.0px/100% 4.5px no-repeat,linear-gradient(90deg,rgba(105,105,115,0.10) 0px 5px,rgba(105,105,115,0.57) 5px 10px,rgba(105,105,115,0.75) 10px 14px,rgba(105,105,115,0.81) 14px 19px) 0 4.5px/100% 4.5px no-repeat,linear-gradient(90deg,rgba(105,105,115,0.01) 0px 5px,rgba(105,105,115,0.01) 5px 10px,rgba(105,105,115,0.03) 10px 14px,rgba(105,105,115,0.09) 14px 19px) 0 9.0px/100% 4.5px no-repeat;filter:blur(0.7px)"></div>
<div class="a" style="left:776.9px;top:314.425px;font-size:9px;line-height:13px;color:#333;font-weight:400;">山东</div>
<div class="a" style="left:794.9px;top:312.6px;width:109.1px;height:13.5px;background:linear-gradient(90deg,rgba(100,100,110,0.05) 0px 5px,rgba(100,100,110,0.22) 5px 10px,rgba(100,100,110,0.44) 10px 15px,rgba(100,100,110,0.36) 15px 20px,rgba(100,100,110,0.21) 20px 25px,rgba(100,100,110,0.41) 25px 30px,rgba(100,100,110,0.17) 30px 35px,rgba(100,100,110,0.41) 35px 40px,rgba(100,100,110,0.21) 40px 45px,rgba(100,100,110,0.26) 45px 50px,rgba(100,100,110,0.21) 50px 55px,rgba(100,100,110,0.22) 55px 60px,rgba(100,100,110,0.43) 60px 64px,rgba(100,100,110,0.26) 64px 69px,rgba(100,100,110,0.06) 69px 74px,rgba(100,100,110,0.01) 74px 79px,rgba(100,100,110,0.40) 79px 84px,rgba(100,100,110,0.29) 84px 89px,rgba(100,100,110,0.33) 89px 94px,rgba(100,100,110,0.12) 94px 99px,rgba(100,100,110,0.43) 99px 104px,rgba(100,100,110,0.43) 104px 109px) 0 0.0px/100% 4.5px no-repeat,linear-gradient(90deg,rgba(100,100,110,0.42) 0px 5px,rgba(100,100,110,0.55) 5px 10px,rgba(100,100,110,0.87) 10px 15px,rgba(100,100,110,0.81) 15px 20px,rgba(100,100,110,0.42) 20px 25px,rgba(100,100,110,0.49) 25px 30px,rgba(100,100,110,0.76) 30px 35px,rgba(100,100,110,0.65) 35px 40px,rgba(100,100,110,0.40) 40px 45px,rgba(100,100,110,0.61) 45px 50px,rgba(100,100,110,0.88) 50px 55px,rgba(100,100,110,0.36) 55px 60px,rgba(100,100,110,0.88) 60px 64px,rgba(100,100,110,0.10) 64px 69px,rgba(100,100,110,0.55) 69px 74px,rgba(100,100,110,0.42) 74px 79px,rgba(100,100,110,0.39) 79px 84px,rgba(100,100,110,0.68) 84px 89px,rgba(100,100,110,0.10) 89px 94px,rgba(100,100,110,0.59) 94px 99px,rgba(100,100,110,0.54) 99px 104px,rgba(100,100,110,0.72) 104px 109px) 0 4.5px/100% 4.5px no-repeat,linear-gradient(90deg,rgba(100,100,110,0.34) 0px 5px,rgba(100,100,110,0.30) 5px 10px,rgba(100,100,110,0.28) 10px 15px,rgba(100,100,110,0.21) 15px 20px,rgba(100,100,110,0.33) 20px 25px,rgba(100,100,110,0.30) 25px 30px,rgba(100,100,110,0.13) 30px 35px,rgba(100,100,110,0.20) 35px 40px,rgba(100,100,110,0.09) 40px 45px,rgba(100,100,110,0.09) 45px 50px,rgba(100,100,110,0.10) 50px 55px,rgba(100,100,110,0.08) 55px 60px,rgba(100,100,110,0.10) 60px 64px,rgba(100,100,110,0.26) 64px 69px,rgba(100,100,110,0.16) 69px 74px,rgba(100,100,110,0.16) 74px 79px,rgba(100,100,110,0.14) 79px 84px,rgba(100,100,110,0.33) 84px 89px,rgba(100,100,110,0.27) 89px 94px,rgba(100,100,110,0.02) 94px 99px,rgba(100,100,110,0.29) 99px 104px,rgba(100,100,110,0.01) 104px 109px) 0 9.0px/100% 4.5px no-repeat;filter:blur(0.7px)"></div>
<div class="a" style="left:904.5px;top:314.425px;font-size:8px;line-height:13px;color:#666;font-weight:400;-webkit-text-stroke:0.01px #666;">...</div>
<svg style="left:930px;top:314.875px" width="10.5" height="9.5" viewBox="0 0 10.5 9.5"><g fill="none" stroke="#3a80e6" stroke-width="1.4"><circle cx="4" cy="4" r="3.2"/><path d="M6.4 6.4 L9.5 9" stroke-linecap="round"/></g></svg>
<div class="a" style="left:943.2px;top:314.425px;font-size:9px;line-height:13px;color:#333;font-weight:400;-webkit-text-stroke:0.15px #333;">查看车辆</div>
<svg style="left:985px;top:314.575px" width="9.5" height="9.5" viewBox="0 0 9.5 9.5"><g fill="none" stroke="#3a80e6" stroke-linecap="round"><path d="M7.6 1.4 L2 7.4" stroke-width="1.9"/><path d="M1.5 8.6 H8.6" stroke-width="1"/></g></svg>
<div class="a" style="left:997px;top:314.425px;font-size:9px;line-height:13px;color:#333;font-weight:400;-webkit-text-stroke:0.15px #333;">编辑</div>
<svg style="left:1032px;top:314.775px" width="7" height="9.2" viewBox="0 0 7 9.2"><g fill="#f06464"><rect x="2.3" y="0" width="2.4" height="1.3" rx="0.5"/><rect x="0.2" y="0.9" width="6.6" height="1.3" rx="0.6"/><rect x="0.6" y="2.4" width="5.8" height="6.8" rx="1.6"/></g><path d="M2.6 4.3 V7.3 M4.4 4.3 V7.3" stroke="#fff" stroke-width="0.7"/></svg>
<div class="a" style="left:1042.3px;top:314.425px;font-size:9px;line-height:13px;color:#333;font-weight:400;-webkit-text-stroke:0.15px #333;">删除</div>
<div class="a" style="left:291px;top:333.5px;width:778.5px;height:28.25px;background:#fff;border-bottom:1px solid #e9e9e9"></div>
<div class="a" style="left:294px;top:342.125px;width:11px;height:11px;background:#fff;border:1px solid #d9d9d9;border-radius:1.5px"></div>
<div class="a" style="left:319.5px;top:342.785px;font-size:9px;line-height:13px;color:#4592e8;text-decoration:underline">威海</div>
<div class="a" style="left:337.5px;top:340.9px;width:90.5px;height:13.5px;background:linear-gradient(90deg,rgba(75,150,240,0.26) 0px 5px,rgba(75,150,240,0.20) 5px 10px,rgba(75,150,240,0.07) 10px 15px,rgba(75,150,240,0.49) 15px 20px,rgba(75,150,240,0.11) 20px 25px,rgba(75,150,240,0.01) 25px 30px,rgba(75,150,240,0.26) 30px 35px,rgba(75,150,240,0.52) 35px 40px,rgba(75,150,240,0.51) 40px 45px,rgba(75,150,240,0.46) 45px 50px,rgba(75,150,240,0.30) 50px 55px,rgba(75,150,240,0.01) 55px 60px,rgba(75,150,240,0.12) 60px 65px,rgba(75,150,240,0.25) 65px 70px,rgba(75,150,240,0.40) 70px 75px,rgba(75,150,240,0.47) 75px 80px,rgba(75,150,240,0.26) 80px 85px,rgba(75,150,240,0.16) 85px 90px) 0 0.0px/100% 4.5px no-repeat,linear-gradient(90deg,rgba(75,150,240,0.78) 0px 5px,rgba(75,150,240,0.89) 5px 10px,rgba(75,150,240,0.14) 10px 15px,rgba(75,150,240,0.59) 15px 20px,rgba(75,150,240,0.58) 20px 25px,rgba(75,150,240,0.53) 25px 30px,rgba(75,150,240,0.50) 30px 35px,rgba(75,150,240,0.87) 35px 40px,rgba(75,150,240,0.75) 40px 45px,rgba(75,150,240,0.74) 45px 50px,rgba(75,150,240,0.49) 50px 55px,rgba(75,150,240,0.86) 55px 60px,rgba(75,150,240,0.51) 60px 65px,rgba(75,150,240,0.14) 65px 70px,rgba(75,150,240,0.70) 70px 75px,rgba(75,150,240,0.14) 75px 80px,rgba(75,150,240,0.87) 80px 85px,rgba(75,150,240,0.51) 85px 90px) 0 4.5px/100% 4.5px no-repeat,linear-gradient(90deg,rgba(75,150,240,0.03) 0px 5px,rgba(75,150,240,0.25) 5px 10px,rgba(75,150,240,0.01) 10px 15px,rgba(75,150,240,0.05) 15px 20px,rgba(75,150,240,0.01) 20px 25px,rgba(75,150,240,0.03) 25px 30px,rgba(75,150,240,0.23) 30px 35px,rgba(75,150,240,0.04) 35px 40px,rgba(75,150,240,0.17) 40px 45px,rgba(75,150,240,0.36) 45px 50px,rgba(75,150,240,0.49) 50px 55px,rgba(75,150,240,0.38) 55px 60px,rgba(75,150,240,0.49) 60px 65px,rgba(75,150,240,0.35) 65px 70px,rgba(75,150,240,0.47) 70px 75px,rgba(75,150,240,0.40) 75px 80px,rgba(75,150,240,0.39) 80px 85px,rgba(75,150,240,0.45) 85px 90px) 0 9.0px/100% 4.5px no-repeat;filter:blur(0.6px)"></div>
<div class="a" style="left:470.8px;top:342.785px;font-size:9px;line-height:13px;color:#333;font-weight:400;">乳山市</div>
<div class="a" style="left:624.4px;top:342.785px;font-size:9px;line-height:13px;color:#333;font-weight:400;">李</div>
<div class="a" style="left:634.0px;top:340.9px;width:9.0px;height:13.5px;background:linear-gradient(90deg,rgba(105,105,115,0.25) 0px 4px,rgba(105,105,115,0.22) 4px 9px) 0 0.0px/100% 4.5px no-repeat,linear-gradient(90deg,rgba(105,105,115,0.48) 0px 4px,rgba(105,105,115,0.74) 4px 9px) 0 4.5px/100% 4.5px no-repeat,linear-gradient(90deg,rgba(105,105,115,0.16) 0px 4px,rgba(105,105,115,0.01) 4px 9px) 0 9.0px/100% 4.5px no-repeat;filter:blur(0.7px)"></div>
<div class="a" style="left:701px;top:342.785px;font-size:9px;line-height:13px;color:#333;font-weight:400;">135</div>
<div class="a" style="left:716.0px;top:340.9px;width:46.0px;height:13.5px;background:linear-gradient(90deg,rgba(105,105,115,0.07) 0px 5px,rgba(105,105,115,0.31) 5px 10px,rgba(105,105,115,0.24) 10px 15px,rgba(105,105,115,0.41) 15px 20px,rgba(105,105,115,0.06) 20px 26px,rgba(105,105,115,0.22) 26px 31px,rgba(105,105,115,0.21) 31px 36px,rgba(105,105,115,0.43) 36px 41px,rgba(105,105,115,0.14) 41px 46px) 0 0.0px/100% 4.5px no-repeat,linear-gradient(90deg,rgba(105,105,115,0.66) 0px 5px,rgba(105,105,115,0.59) 5px 10px,rgba(105,105,115,0.53) 10px 15px,rgba(105,105,115,0.42) 15px 20px,rgba(105,105,115,0.67) 20px 26px,rgba(105,105,115,0.64) 26px 31px,rgba(105,105,115,0.10) 31px 36px,rgba(105,105,115,0.39) 36px 41px,rgba(105,105,115,0.39) 41px 46px) 0 4.5px/100% 4.5px no-repeat,linear-gradient(90deg,rgba(105,105,115,0.28) 0px 5px,rgba(105,105,115,0.01) 5px 10px,rgba(105,105,115,0.34) 10px 15px,rgba(105,105,115,0.12) 15px 20px,rgba(105,105,115,0.34) 20px 26px,rgba(105,105,115,0.22) 26px 31px,rgba(105,105,115,0.03) 31px 36px,rgba(105,105,115,0.17) 36px 41px,rgba(105,105,115,0.22) 41px 46px) 0 9.0px/100% 4.5px no-repeat;filter:blur(0.7px)"></div>
<div class="a" style="left:776.9px;top:342.785px;font-size:9px;line-height:13px;color:#333;font-weight:400;">乳山</div>
<div class="a" style="left:794.9px;top:340.9px;width:90.1px;height:13.5px;background:linear-gradient(90deg,rgba(100,100,110,0.40) 0px 5px,rgba(100,100,110,0.32) 5px 10px,rgba(100,100,110,0.27) 10px 15px,rgba(100,100,110,0.27) 15px 20px,rgba(100,100,110,0.16) 20px 25px,rgba(100,100,110,0.18) 25px 30px,rgba(100,100,110,0.41) 30px 35px,rgba(100,100,110,0.15) 35px 40px,rgba(100,100,110,0.22) 40px 45px,rgba(100,100,110,0.13) 45px 50px,rgba(100,100,110,0.23) 50px 55px,rgba(100,100,110,0.09) 55px 60px,rgba(100,100,110,0.16) 60px 65px,rgba(100,100,110,0.15) 65px 70px,rgba(100,100,110,0.09) 70px 75px,rgba(100,100,110,0.14) 75px 80px,rgba(100,100,110,0.06) 80px 85px,rgba(100,100,110,0.08) 85px 90px) 0 0.0px/100% 4.5px no-repeat,linear-gradient(90deg,rgba(100,100,110,0.58) 0px 5px,rgba(100,100,110,0.86) 5px 10px,rgba(100,100,110,0.46) 10px 15px,rgba(100,100,110,0.40) 15px 20px,rgba(100,100,110,0.49) 20px 25px,rgba(100,100,110,0.49) 25px 30px,rgba(100,100,110,0.82) 30px 35px,rgba(100,100,110,0.43) 35px 40px,rgba(100,100,110,0.71) 40px 45px,rgba(100,100,110,0.60) 45px 50px,rgba(100,100,110,0.38) 50px 55px,rgba(100,100,110,0.43) 55px 60px,rgba(100,100,110,0.61) 60px 65px,rgba(100,100,110,0.52) 65px 70px,rgba(100,100,110,0.62) 70px 75px,rgba(100,100,110,0.74) 75px 80px,rgba(100,100,110,0.76) 80px 85px,rgba(100,100,110,0.54) 85px 90px) 0 4.5px/100% 4.5px no-repeat,linear-gradient(90deg,rgba(100,100,110,0.35) 0px 5px,rgba(100,100,110,0.26) 5px 10px,rgba(100,100,110,0.10) 10px 15px,rgba(100,100,110,0.20) 15px 20px,rgba(100,100,110,0.01) 20px 25px,rgba(100,100,110,0.29) 25px 30px,rgba(100,100,110,0.09) 30px 35px,rgba(100,100,110,0.09) 35px 40px,rgba(100,100,110,0.25) 40px 45px,rgba(100,100,110,0.12) 45px 50px,rgba(100,100,110,0.31) 50px 55px,rgba(100,100,110,0.29) 55px 60px,rgba(100,100,110,0.04) 60px 65px,rgba(100,100,110,0.19) 65px 70px,rgba(100,100,110,0.29) 70px 75px,rgba(100,100,110,0.20) 75px 80px,rgba(100,100,110,0.14) 80px 85px,rgba(100,100,110,0.08) 85px 90px) 0 9.0px/100% 4.5px no-repeat;filter:blur(0.7px)"></div>
<svg style="left:930px;top:343.125px" width="10.5" height="9.5" viewBox="0 0 10.5 9.5"><g fill="none" stroke="#3a80e6" stroke-width="1.4"><circle cx="4" cy="4" r="3.2"/><path d="M6.4 6.4 L9.5 9" stroke-linecap="round"/></g></svg>
<div class="a" style="left:943.2px;top:342.785px;font-size:9px;line-height:13px;color:#333;font-weight:400;-webkit-text-stroke:0.15px #333;">查看车辆</div>
<svg style="left:985px;top:342.825px" width="9.5" height="9.5" viewBox="0 0 9.5 9.5"><g fill="none" stroke="#3a80e6" stroke-linecap="round"><path d="M7.6 1.4 L2 7.4" stroke-width="1.9"/><path d="M1.5 8.6 H8.6" stroke-width="1"/></g></svg>
<div class="a" style="left:997px;top:342.785px;font-size:9px;line-height:13px;color:#333;font-weight:400;-webkit-text-stroke:0.15px #333;">编辑</div>
<svg style="left:1032px;top:343.025px" width="7" height="9.2" viewBox="0 0 7 9.2"><g fill="#f06464"><rect x="2.3" y="0" width="2.4" height="1.3" rx="0.5"/><rect x="0.2" y="0.9" width="6.6" height="1.3" rx="0.6"/><rect x="0.6" y="2.4" width="5.8" height="6.8" rx="1.6"/></g><path d="M2.6 4.3 V7.3 M4.4 4.3 V7.3" stroke="#fff" stroke-width="0.7"/></svg>
<div class="a" style="left:1042.3px;top:342.785px;font-size:9px;line-height:13px;color:#333;font-weight:400;-webkit-text-stroke:0.15px #333;">删除</div>
<div class="a" style="left:291px;top:361.75px;width:778.5px;height:28.25px;background:#fafafa;border-bottom:1px solid #e9e9e9"></div>
<div class="a" style="left:294px;top:370.375px;width:11px;height:11px;background:#fff;border:1px solid #d9d9d9;border-radius:1.5px"></div>
<div class="a" style="left:319.5px;top:371.145px;font-size:9px;line-height:13px;color:#4592e8;text-decoration:underline">乳山</div>
<div class="a" style="left:337.5px;top:369.1px;width:69.5px;height:13.5px;background:linear-gradient(90deg,rgba(75,150,240,0.10) 0px 5px,rgba(75,150,240,0.32) 5px 10px,rgba(75,150,240,0.42) 10px 15px,rgba(75,150,240,0.30) 15px 20px,rgba(75,150,240,0.34) 20px 25px,rgba(75,150,240,0.51) 25px 30px,rgba(75,150,240,0.01) 30px 35px,rgba(75,150,240,0.28) 35px 40px,rgba(75,150,240,0.16) 40px 45px,rgba(75,150,240,0.15) 45px 50px,rgba(75,150,240,0.43) 50px 55px,rgba(75,150,240,0.46) 55px 60px,rgba(75,150,240,0.16) 60px 65px,rgba(75,150,240,0.23) 65px 70px) 0 0.0px/100% 4.5px no-repeat,linear-gradient(90deg,rgba(75,150,240,0.50) 0px 5px,rgba(75,150,240,0.92) 5px 10px,rgba(75,150,240,0.58) 10px 15px,rgba(75,150,240,0.53) 15px 20px,rgba(75,150,240,0.14) 20px 25px,rgba(75,150,240,0.53) 25px 30px,rgba(75,150,240,0.85) 30px 35px,rgba(75,150,240,0.62) 35px 40px,rgba(75,150,240,0.48) 40px 45px,rgba(75,150,240,0.93) 45px 50px,rgba(75,150,240,0.53) 50px 55px,rgba(75,150,240,0.76) 55px 60px,rgba(75,150,240,0.63) 60px 65px,rgba(75,150,240,0.14) 65px 70px) 0 4.5px/100% 4.5px no-repeat,linear-gradient(90deg,rgba(75,150,240,0.20) 0px 5px,rgba(75,150,240,0.24) 5px 10px,rgba(75,150,240,0.46) 10px 15px,rgba(75,150,240,0.35) 15px 20px,rgba(75,150,240,0.08) 20px 25px,rgba(75,150,240,0.49) 25px 30px,rgba(75,150,240,0.08) 30px 35px,rgba(75,150,240,0.38) 35px 40px,rgba(75,150,240,0.30) 40px 45px,rgba(75,150,240,0.49) 45px 50px,rgba(75,150,240,0.31) 50px 55px,rgba(75,150,240,0.06) 55px 60px,rgba(75,150,240,0.40) 60px 65px,rgba(75,150,240,0.32) 65px 70px) 0 9.0px/100% 4.5px no-repeat;filter:blur(0.6px)"></div>
<div class="a" style="left:470.8px;top:371.145px;font-size:9px;line-height:13px;color:#333;font-weight:400;">乳山市</div>
<div class="a" style="left:624.4px;top:371.145px;font-size:9px;line-height:13px;color:#333;font-weight:400;">董</div>
<div class="a" style="left:634.0px;top:369.1px;width:19.0px;height:13.5px;background:linear-gradient(90deg,rgba(105,105,115,0.30) 0px 5px,rgba(105,105,115,0.01) 5px 10px,rgba(105,105,115,0.15) 10px 14px,rgba(105,105,115,0.42) 14px 19px) 0 0.0px/100% 4.5px no-repeat,linear-gradient(90deg,rgba(105,105,115,0.84) 0px 5px,rgba(105,105,115,0.73) 5px 10px,rgba(105,105,115,0.10) 10px 14px,rgba(105,105,115,0.80) 14px 19px) 0 4.5px/100% 4.5px no-repeat,linear-gradient(90deg,rgba(105,105,115,0.01) 0px 5px,rgba(105,105,115,0.01) 5px 10px,rgba(105,105,115,0.08) 10px 14px,rgba(105,105,115,0.01) 14px 19px) 0 9.0px/100% 4.5px no-repeat;filter:blur(0.7px)"></div>
<div class="a" style="left:776.9px;top:371.145px;font-size:9px;line-height:13px;color:#333;font-weight:400;">乳山</div>
<div class="a" style="left:794.9px;top:369.1px;width:100.1px;height:13.5px;background:linear-gradient(90deg,rgba(100,100,110,0.30) 0px 5px,rgba(100,100,110,0.35) 5px 10px,rgba(100,100,110,0.05) 10px 15px,rgba(100,100,110,0.26) 15px 20px,rgba(100,100,110,0.42) 20px 25px,rgba(100,100,110,0.24) 25px 30px,rgba(100,100,110,0.16) 30px 35px,rgba(100,100,110,0.40) 35px 40px,rgba(100,100,110,0.16) 40px 45px,rgba(100,100,110,0.16) 45px 50px,rgba(100,100,110,0.23) 50px 55px,rgba(100,100,110,0.21) 55px 60px,rgba(100,100,110,0.25) 60px 65px,rgba(100,100,110,0.30) 65px 70px,rgba(100,100,110,0.23) 70px 75px,rgba(100,100,110,0.29) 75px 80px,rgba(100,100,110,0.05) 80px 85px,rgba(100,100,110,0.18) 85px 90px,rgba(100,100,110,0.05) 90px 95px,rgba(100,100,110,0.24) 95px 100px) 0 0.0px/100% 4.5px no-repeat,linear-gradient(90deg,rgba(100,100,110,0.38) 0px 5px,rgba(100,100,110,0.44) 5px 10px,rgba(100,100,110,0.10) 10px 15px,rgba(100,100,110,0.82) 15px 20px,rgba(100,100,110,0.46) 20px 25px,rgba(100,100,110,0.10) 25px 30px,rgba(100,100,110,0.59) 30px 35px,rgba(100,100,110,0.41) 35px 40px,rgba(100,100,110,0.77) 40px 45px,rgba(100,100,110,0.82) 45px 50px,rgba(100,100,110,0.88) 50px 55px,rgba(100,100,110,0.72) 55px 60px,rgba(100,100,110,0.76) 60px 65px,rgba(100,100,110,0.51) 65px 70px,rgba(100,100,110,0.55) 70px 75px,rgba(100,100,110,0.55) 75px 80px,rgba(100,100,110,0.62) 80px 85px,rgba(100,100,110,0.37) 85px 90px,rgba(100,100,110,0.82) 90px 95px,rgba(100,100,110,0.40) 95px 100px) 0 4.5px/100% 4.5px no-repeat,linear-gradient(90deg,rgba(100,100,110,0.35) 0px 5px,rgba(100,100,110,0.05) 5px 10px,rgba(100,100,110,0.34) 10px 15px,rgba(100,100,110,0.07) 15px 20px,rgba(100,100,110,0.24) 20px 25px,rgba(100,100,110,0.01) 25px 30px,rgba(100,100,110,0.01) 30px 35px,rgba(100,100,110,0.24) 35px 40px,rgba(100,100,110,0.26) 40px 45px,rgba(100,100,110,0.11) 45px 50px,rgba(100,100,110,0.33) 50px 55px,rgba(100,100,110,0.16) 55px 60px,rgba(100,100,110,0.19) 60px 65px,rgba(100,100,110,0.27) 65px 70px,rgba(100,100,110,0.20) 70px 75px,rgba(100,100,110,0.29) 75px 80px,rgba(100,100,110,0.15) 80px 85px,rgba(100,100,110,0.02) 85px 90px,rgba(100,100,110,0.06) 90px 95px,rgba(100,100,110,0.02) 95px 100px) 0 9.0px/100% 4.5px no-repeat;filter:blur(0.7px)"></div>
<svg style="left:930px;top:371.375px" width="10.5" height="9.5" viewBox="0 0 10.5 9.5"><g fill="none" stroke="#3a80e6" stroke-width="1.4"><circle cx="4" cy="4" r="3.2"/><path d="M6.4 6.4 L9.5 9" stroke-linecap="round"/></g></svg>
<div class="a" style="left:943.2px;top:371.145px;font-size:9px;line-height:13px;color:#333;font-weight:400;-webkit-text-stroke:0.15px #333;">查看车辆</div>
<svg style="left:985px;top:371.075px" width="9.5" height="9.5" viewBox="0 0 9.5 9.5"><g fill="none" stroke="#3a80e6" stroke-linecap="round"><path d="M7.6 1.4 L2 7.4" stroke-width="1.9"/><path d="M1.5 8.6 H8.6" stroke-width="1"/></g></svg>
<div class="a" style="left:997px;top:371.145px;font-size:9px;line-height:13px;color:#333;font-weight:400;-webkit-text-stroke:0.15px #333;">编辑</div>
<svg style="left:1032px;top:371.275px" width="7" height="9.2" viewBox="0 0 7 9.2"><g fill="#f06464"><rect x="2.3" y="0" width="2.4" height="1.3" rx="0.5"/><rect x="0.2" y="0.9" width="6.6" height="1.3" rx="0.6"/><rect x="0.6" y="2.4" width="5.8" height="6.8" rx="1.6"/></g><path d="M2.6 4.3 V7.3 M4.4 4.3 V7.3" stroke="#fff" stroke-width="0.7"/></svg>
<div class="a" style="left:1042.3px;top:371.145px;font-size:9px;line-height:13px;color:#333;font-weight:400;-webkit-text-stroke:0.15px #333;">删除</div>
<div class="a" style="left:291px;top:390.0px;width:778.5px;height:28.25px;background:#fff;border-bottom:1px solid #e9e9e9"></div>
<div class="a" style="left:294px;top:398.625px;width:11px;height:11px;background:#fff;border:1px solid #d9d9d9;border-radius:1.5px"></div>
<div class="a" style="left:319.5px;top:399.505px;font-size:9px;line-height:13px;color:#4592e8;text-decoration:underline">威海山</div>
<div class="a" style="left:346.5px;top:397.4px;width:81.5px;height:13.5px;background:linear-gradient(90deg,rgba(75,150,240,0.27) 0px 5px,rgba(75,150,240,0.01) 5px 10px,rgba(75,150,240,0.34) 10px 15px,rgba(75,150,240,0.18) 15px 20px,rgba(75,150,240,0.43) 20px 25px,rgba(75,150,240,0.34) 25px 31px,rgba(75,150,240,0.43) 31px 36px,rgba(75,150,240,0.40) 36px 41px,rgba(75,150,240,0.01) 41px 46px,rgba(75,150,240,0.01) 46px 51px,rgba(75,150,240,0.14) 51px 56px,rgba(75,150,240,0.08) 56px 61px,rgba(75,150,240,0.35) 61px 66px,rgba(75,150,240,0.28) 66px 71px,rgba(75,150,240,0.46) 71px 76px,rgba(75,150,240,0.06) 76px 82px) 0 0.0px/100% 4.5px no-repeat,linear-gradient(90deg,rgba(75,150,240,0.48) 0px 5px,rgba(75,150,240,0.86) 5px 10px,rgba(75,150,240,0.59) 10px 15px,rgba(75,150,240,0.14) 15px 20px,rgba(75,150,240,0.46) 20px 25px,rgba(75,150,240,0.73) 25px 31px,rgba(75,150,240,0.62) 31px 36px,rgba(75,150,240,0.46) 36px 41px,rgba(75,150,240,0.85) 41px 46px,rgba(75,150,240,0.49) 46px 51px,rgba(75,150,240,0.53) 51px 56px,rgba(75,150,240,0.61) 56px 61px,rgba(75,150,240,0.68) 61px 66px,rgba(75,150,240,0.86) 66px 71px,rgba(75,150,240,0.60) 71px 76px,rgba(75,150,240,0.52) 76px 82px) 0 4.5px/100% 4.5px no-repeat,linear-gradient(90deg,rgba(75,150,240,0.01) 0px 5px,rgba(75,150,240,0.01) 5px 10px,rgba(75,150,240,0.06) 10px 15px,rgba(75,150,240,0.05) 15px 20px,rgba(75,150,240,0.10) 20px 25px,rgba(75,150,240,0.01) 25px 31px,rgba(75,150,240,0.48) 31px 36px,rgba(75,150,240,0.37) 36px 41px,rgba(75,150,240,0.19) 41px 46px,rgba(75,150,240,0.07) 46px 51px,rgba(75,150,240,0.40) 51px 56px,rgba(75,150,240,0.13) 56px 61px,rgba(75,150,240,0.17) 61px 66px,rgba(75,150,240,0.06) 66px 71px,rgba(75,150,240,0.09) 71px 76px,rgba(75,150,240,0.36) 76px 82px) 0 9.0px/100% 4.5px no-repeat;filter:blur(0.6px)"></div>
<div class="a" style="left:470.8px;top:399.505px;font-size:9px;line-height:13px;color:#333;font-weight:400;">环翠区</div>
<div class="a" style="left:624.4px;top:399.505px;font-size:9px;line-height:13px;color:#333;font-weight:400;">戴</div>
<div class="a" style="left:634.0px;top:397.4px;width:19.0px;height:13.5px;background:linear-gradient(90deg,rgba(105,105,115,0.32) 0px 5px,rgba(105,105,115,0.09) 5px 10px,rgba(105,105,115,0.08) 10px 14px,rgba(105,105,115,0.20) 14px 19px) 0 0.0px/100% 4.5px no-repeat,linear-gradient(90deg,rgba(105,105,115,0.10) 0px 5px,rgba(105,105,115,0.75) 5px 10px,rgba(105,105,115,0.66) 10px 14px,rgba(105,105,115,0.55) 14px 19px) 0 4.5px/100% 4.5px no-repeat,linear-gradient(90deg,rgba(105,105,115,0.33) 0px 5px,rgba(105,105,115,0.26) 5px 10px,rgba(105,105,115,0.33) 10px 14px,rgba(105,105,115,0.03) 14px 19px) 0 9.0px/100% 4.5px no-repeat;filter:blur(0.7px)"></div>
<div class="a" style="left:701px;top:399.505px;font-size:9px;line-height:13px;color:#333;font-weight:400;">06</div>
<div class="a" style="left:711.0px;top:397.4px;width:53.0px;height:13.5px;background:linear-gradient(90deg,rgba(105,105,115,0.40) 0px 5px,rgba(105,105,115,0.24) 5px 10px,rgba(105,105,115,0.01) 10px 14px,rgba(105,105,115,0.01) 14px 19px,rgba(105,105,115,0.37) 19px 24px,rgba(105,105,115,0.39) 24px 29px,rgba(105,105,115,0.20) 29px 34px,rgba(105,105,115,0.21) 34px 39px,rgba(105,105,115,0.31) 39px 43px,rgba(105,105,115,0.29) 43px 48px,rgba(105,105,115,0.23) 48px 53px) 0 0.0px/100% 4.5px no-repeat,linear-gradient(90deg,rgba(105,105,115,0.81) 0px 5px,rgba(105,105,115,0.37) 5px 10px,rgba(105,105,115,0.49) 10px 14px,rgba(105,105,115,0.72) 14px 19px,rgba(105,105,115,0.69) 19px 24px,rgba(105,105,115,0.39) 24px 29px,rgba(105,105,115,0.39) 29px 34px,rgba(105,105,115,0.40) 34px 39px,rgba(105,105,115,0.50) 39px 43px,rgba(105,105,115,0.40) 43px 48px,rgba(105,105,115,0.68) 48px 53px) 0 4.5px/100% 4.5px no-repeat,linear-gradient(90deg,rgba(105,105,115,0.12) 0px 5px,rgba(105,105,115,0.30) 5px 10px,rgba(105,105,115,0.01) 10px 14px,rgba(105,105,115,0.19) 14px 19px,rgba(105,105,115,0.35) 19px 24px,rgba(105,105,115,0.06) 24px 29px,rgba(105,105,115,0.22) 29px 34px,rgba(105,105,115,0.29) 34px 39px,rgba(105,105,115,0.32) 39px 43px,rgba(105,105,115,0.33) 43px 48px,rgba(105,105,115,0.01) 48px 53px) 0 9.0px/100% 4.5px no-repeat;filter:blur(0.7px)"></div>
<div class="a" style="left:776.9px;top:399.505px;font-size:9px;line-height:13px;color:#333;font-weight:400;">威海</div>
<div class="a" style="left:794.9px;top:397.4px;width:84.1px;height:13.5px;background:linear-gradient(90deg,rgba(100,100,110,0.39) 0px 5px,rgba(100,100,110,0.31) 5px 10px,rgba(100,100,110,0.19) 10px 15px,rgba(100,100,110,0.01) 15px 20px,rgba(100,100,110,0.20) 20px 25px,rgba(100,100,110,0.18) 25px 30px,rgba(100,100,110,0.07) 30px 35px,rgba(100,100,110,0.01) 35px 40px,rgba(100,100,110,0.23) 40px 45px,rgba(100,100,110,0.01) 45px 49px,rgba(100,100,110,0.21) 49px 54px,rgba(100,100,110,0.09) 54px 59px,rgba(100,100,110,0.20) 59px 64px,rgba(100,100,110,0.09) 64px 69px,rgba(100,100,110,0.32) 69px 74px,rgba(100,100,110,0.10) 74px 79px,rgba(100,100,110,0.35) 79px 84px) 0 0.0px/100% 4.5px no-repeat,linear-gradient(90deg,rgba(100,100,110,0.89) 0px 5px,rgba(100,100,110,0.85) 5px 10px,rgba(100,100,110,0.35) 10px 15px,rgba(100,100,110,0.43) 15px 20px,rgba(100,100,110,0.57) 20px 25px,rgba(100,100,110,0.87) 25px 30px,rgba(100,100,110,0.46) 30px 35px,rgba(100,100,110,0.10) 35px 40px,rgba(100,100,110,0.47) 40px 45px,rgba(100,100,110,0.76) 45px 49px,rgba(100,100,110,0.41) 49px 54px,rgba(100,100,110,0.55) 54px 59px,rgba(100,100,110,0.85) 59px 64px,rgba(100,100,110,0.56) 64px 69px,rgba(100,100,110,0.45) 69px 74px,rgba(100,100,110,0.79) 74px 79px,rgba(100,100,110,0.39) 79px 84px) 0 4.5px/100% 4.5px no-repeat,linear-gradient(90deg,rgba(100,100,110,0.15) 0px 5px,rgba(100,100,110,0.01) 5px 10px,rgba(100,100,110,0.22) 10px 15px,rgba(100,100,110,0.09) 15px 20px,rgba(100,100,110,0.18) 20px 25px,rgba(100,100,110,0.14) 25px 30px,rgba(100,100,110,0.12) 30px 35px,rgba(100,100,110,0.29) 35px 40px,rgba(100,100,110,0.24) 40px 45px,rgba(100,100,110,0.34) 45px 49px,rgba(100,100,110,0.07) 49px 54px,rgba(100,100,110,0.30) 54px 59px,rgba(100,100,110,0.05) 59px 64px,rgba(100,100,110,0.23) 64px 69px,rgba(100,100,110,0.25) 69px 74px,rgba(100,100,110,0.11) 74px 79px,rgba(100,100,110,0.29) 79px 84px) 0 9.0px/100% 4.5px no-repeat;filter:blur(0.7px)"></div>
<svg style="left:930px;top:399.625px" width="10.5" height="9.5" viewBox="0 0 10.5 9.5"><g fill="none" stroke="#3a80e6" stroke-width="1.4"><circle cx="4" cy="4" r="3.2"/><path d="M6.4 6.4 L9.5 9" stroke-linecap="round"/></g></svg>
<div class="a" style="left:943.2px;top:399.505px;font-size:9px;line-height:13px;color:#333;font-weight:400;-webkit-text-stroke:0.15px #333;">查看车辆</div>
<svg style="left:985px;top:399.325px" width="9.5" height="9.5" viewBox="0 0 9.5 9.5"><g fill="none" stroke="#3a80e6" stroke-linecap="round"><path d="M7.6 1.4 L2 7.4" stroke-width="1.9"/><path d="M1.5 8.6 H8.6" stroke-width="1"/></g></svg>
<div class="a" style="left:997px;top:399.505px;font-size:9px;line-height:13px;color:#333;font-weight:400;-webkit-text-stroke:0.15px #333;">编辑</div>
<svg style="left:1032px;top:399.525px" width="7" height="9.2" viewBox="0 0 7 9.2"><g fill="#f06464"><rect x="2.3" y="0" width="2.4" height="1.3" rx="0.5"/><rect x="0.2" y="0.9" width="6.6" height="1.3" rx="0.6"/><rect x="0.6" y="2.4" width="5.8" height="6.8" rx="1.6"/></g><path d="M2.6 4.3 V7.3 M4.4 4.3 V7.3" stroke="#fff" stroke-width="0.7"/></svg>
<div class="a" style="left:1042.3px;top:399.505px;font-size:9px;line-height:13px;color:#333;font-weight:400;-webkit-text-stroke:0.15px #333;">删除</div>
<div class="a" style="left:291px;top:418.25px;width:778.5px;height:28.25px;background:#fafafa;border-bottom:1px solid #e9e9e9"></div>
<div class="a" style="left:294px;top:426.875px;width:11px;height:11px;background:#fff;border:1px solid #d9d9d9;border-radius:1.5px"></div>
<div class="a" style="left:319.5px;top:427.865px;font-size:9px;line-height:13px;color:#4592e8;text-decoration:underline">乳山</div>
<div class="a" style="left:337.5px;top:425.6px;width:74.5px;height:13.5px;background:linear-gradient(90deg,rgba(75,150,240,0.32) 0px 5px,rgba(75,150,240,0.51) 5px 10px,rgba(75,150,240,0.27) 10px 15px,rgba(75,150,240,0.01) 15px 20px,rgba(75,150,240,0.15) 20px 25px,rgba(75,150,240,0.24) 25px 30px,rgba(75,150,240,0.12) 30px 35px,rgba(75,150,240,0.14) 35px 40px,rgba(75,150,240,0.01) 40px 45px,rgba(75,150,240,0.14) 45px 50px,rgba(75,150,240,0.36) 50px 55px,rgba(75,150,240,0.46) 55px 60px,rgba(75,150,240,0.55) 60px 65px,rgba(75,150,240,0.26) 65px 70px,rgba(75,150,240,0.23) 70px 74px) 0 0.0px/100% 4.5px no-repeat,linear-gradient(90deg,rgba(75,150,240,0.90) 0px 5px,rgba(75,150,240,0.90) 5px 10px,rgba(75,150,240,0.64) 10px 15px,rgba(75,150,240,0.57) 15px 20px,rgba(75,150,240,0.14) 20px 25px,rgba(75,150,240,0.93) 25px 30px,rgba(75,150,240,0.14) 30px 35px,rgba(75,150,240,0.64) 35px 40px,rgba(75,150,240,0.84) 40px 45px,rgba(75,150,240,0.85) 45px 50px,rgba(75,150,240,0.69) 50px 55px,rgba(75,150,240,0.14) 55px 60px,rgba(75,150,240,0.64) 60px 65px,rgba(75,150,240,0.55) 65px 70px,rgba(75,150,240,0.74) 70px 74px) 0 4.5px/100% 4.5px no-repeat,linear-gradient(90deg,rgba(75,150,240,0.01) 0px 5px,rgba(75,150,240,0.46) 5px 10px,rgba(75,150,240,0.49) 10px 15px,rgba(75,150,240,0.15) 15px 20px,rgba(75,150,240,0.11) 20px 25px,rgba(75,150,240,0.42) 25px 30px,rgba(75,150,240,0.15) 30px 35px,rgba(75,150,240,0.01) 35px 40px,rgba(75,150,240,0.44) 40px 45px,rgba(75,150,240,0.50) 45px 50px,rgba(75,150,240,0.38) 50px 55px,rgba(75,150,240,0.38) 55px 60px,rgba(75,150,240,0.06) 60px 65px,rgba(75,150,240,0.43) 65px 70px,rgba(75,150,240,0.46) 70px 74px) 0 9.0px/100% 4.5px no-repeat;filter:blur(0.6px)"></div>
<div class="a" style="left:470.8px;top:427.865px;font-size:9px;line-height:13px;color:#333;font-weight:400;">乳山市</div>
<div class="a" style="left:624.4px;top:427.865px;font-size:9px;line-height:13px;color:#333;font-weight:400;">高</div>
<div class="a" style="left:634.0px;top:425.6px;width:8.0px;height:13.5px;background:linear-gradient(90deg,rgba(105,105,115,0.42) 0px 4px,rgba(105,105,115,0.12) 4px 8px) 0 0.0px/100% 4.5px no-repeat,linear-gradient(90deg,rgba(105,105,115,0.67) 0px 4px,rgba(105,105,115,0.73) 4px 8px) 0 4.5px/100% 4.5px no-repeat,linear-gradient(90deg,rgba(105,105,115,0.12) 0px 4px,rgba(105,105,115,0.32) 4px 8px) 0 9.0px/100% 4.5px no-repeat;filter:blur(0.7px)"></div>
<div class="a" style="left:701px;top:427.865px;font-size:9px;line-height:13px;color:#333;font-weight:400;">15</div>
<div class="a" style="left:711.0px;top:425.6px;width:54.0px;height:13.5px;background:linear-gradient(90deg,rgba(105,105,115,0.17) 0px 5px,rgba(105,105,115,0.31) 5px 10px,rgba(105,105,115,0.12) 10px 15px,rgba(105,105,115,0.05) 15px 20px,rgba(105,105,115,0.01) 20px 25px,rgba(105,105,115,0.19) 25px 29px,rgba(105,105,115,0.23) 29px 34px,rgba(105,105,115,0.01) 34px 39px,rgba(105,105,115,0.24) 39px 44px,rgba(105,105,115,0.16) 44px 49px,rgba(105,105,115,0.43) 49px 54px) 0 0.0px/100% 4.5px no-repeat,linear-gradient(90deg,rgba(105,105,115,0.54) 0px 5px,rgba(105,105,115,0.86) 5px 10px,rgba(105,105,115,0.90) 10px 15px,rgba(105,105,115,0.74) 15px 20px,rgba(105,105,115,0.10) 20px 25px,rgba(105,105,115,0.40) 25px 29px,rgba(105,105,115,0.78) 29px 34px,rgba(105,105,115,0.10) 34px 39px,rgba(105,105,115,0.83) 39px 44px,rgba(105,105,115,0.60) 44px 49px,rgba(105,105,115,0.10) 49px 54px) 0 4.5px/100% 4.5px no-repeat,linear-gradient(90deg,rgba(105,105,115,0.12) 0px 5px,rgba(105,105,115,0.16) 5px 10px,rgba(105,105,115,0.06) 10px 15px,rgba(105,105,115,0.25) 15px 20px,rgba(105,105,115,0.04) 20px 25px,rgba(105,105,115,0.30) 25px 29px,rgba(105,105,115,0.17) 29px 34px,rgba(105,105,115,0.07) 34px 39px,rgba(105,105,115,0.01) 39px 44px,rgba(105,105,115,0.06) 44px 49px,rgba(105,105,115,0.17) 49px 54px) 0 9.0px/100% 4.5px no-repeat;filter:blur(0.7px)"></div>
<div class="a" style="left:776.9px;top:427.865px;font-size:9px;line-height:13px;color:#333;font-weight:400;">山东省</div>
<div class="a" style="left:803.9px;top:425.6px;width:101.1px;height:13.5px;background:linear-gradient(90deg,rgba(100,100,110,0.16) 0px 5px,rgba(100,100,110,0.12) 5px 10px,rgba(100,100,110,0.37) 10px 15px,rgba(100,100,110,0.35) 15px 20px,rgba(100,100,110,0.44) 20px 25px,rgba(100,100,110,0.45) 25px 30px,rgba(100,100,110,0.01) 30px 35px,rgba(100,100,110,0.42) 35px 40px,rgba(100,100,110,0.05) 40px 45px,rgba(100,100,110,0.39) 45px 51px,rgba(100,100,110,0.35) 51px 56px,rgba(100,100,110,0.20) 56px 61px,rgba(100,100,110,0.08) 61px 66px,rgba(100,100,110,0.13) 66px 71px,rgba(100,100,110,0.27) 71px 76px,rgba(100,100,110,0.29) 76px 81px,rgba(100,100,110,0.38) 81px 86px,rgba(100,100,110,0.23) 86px 91px,rgba(100,100,110,0.20) 91px 96px,rgba(100,100,110,0.07) 96px 101px) 0 0.0px/100% 4.5px no-repeat,linear-gradient(90deg,rgba(100,100,110,0.84) 0px 5px,rgba(100,100,110,0.56) 5px 10px,rgba(100,100,110,0.75) 10px 15px,rgba(100,100,110,0.62) 15px 20px,rgba(100,100,110,0.45) 20px 25px,rgba(100,100,110,0.36) 25px 30px,rgba(100,100,110,0.74) 30px 35px,rgba(100,100,110,0.10) 35px 40px,rgba(100,100,110,0.52) 40px 45px,rgba(100,100,110,0.45) 45px 51px,rgba(100,100,110,0.64) 51px 56px,rgba(100,100,110,0.67) 56px 61px,rgba(100,100,110,0.47) 61px 66px,rgba(100,100,110,0.73) 66px 71px,rgba(100,100,110,0.78) 71px 76px,rgba(100,100,110,0.52) 76px 81px,rgba(100,100,110,0.70) 81px 86px,rgba(100,100,110,0.70) 86px 91px,rgba(100,100,110,0.73) 91px 96px,rgba(100,100,110,0.50) 96px 101px) 0 4.5px/100% 4.5px no-repeat,linear-gradient(90deg,rgba(100,100,110,0.17) 0px 5px,rgba(100,100,110,0.05) 5px 10px,rgba(100,100,110,0.15) 10px 15px,rgba(100,100,110,0.01) 15px 20px,rgba(100,100,110,0.08) 20px 25px,rgba(100,100,110,0.01) 25px 30px,rgba(100,100,110,0.08) 30px 35px,rgba(100,100,110,0.25) 35px 40px,rgba(100,100,110,0.21) 40px 45px,rgba(100,100,110,0.01) 45px 51px,rgba(100,100,110,0.28) 51px 56px,rgba(100,100,110,0.01) 56px 61px,rgba(100,100,110,0.15) 61px 66px,rgba(100,100,110,0.22) 66px 71px,rgba(100,100,110,0.13) 71px 76px,rgba(100,100,110,0.25) 76px 81px,rgba(100,100,110,0.03) 81px 86px,rgba(100,100,110,0.08) 86px 91px,rgba(100,100,110,0.13) 91px 96px,rgba(100,100,110,0.26) 96px 101px) 0 9.0px/100% 4.5px no-repeat;filter:blur(0.7px)"></div>
<svg style="left:930px;top:427.875px" width="10.5" height="9.5" viewBox="0 0 10.5 9.5"><g fill="none" stroke="#3a80e6" stroke-width="1.4"><circle cx="4" cy="4" r="3.2"/><path d="M6.4 6.4 L9.5 9" stroke-linecap="round"/></g></svg>
<div class="a" style="left:943.2px;top:427.865px;font-size:9px;line-height:13px;color:#333;font-weight:400;-webkit-text-stroke:0.15px #333;">查看车辆</div>
<svg style="left:985px;top:427.575px" width="9.5" height="9.5" viewBox="0 0 9.5 9.5"><g fill="none" stroke="#3a80e6" stroke-linecap="round"><path d="M7.6 1.4 L2 7.4" stroke-width="1.9"/><path d="M1.5 8.6 H8.6" stroke-width="1"/></g></svg>
<div class="a" style="left:997px;top:427.865px;font-size:9px;line-height:13px;color:#333;font-weight:400;-webkit-text-stroke:0.15px #333;">编辑</div>
<svg style="left:1032px;top:427.775px" width="7" height="9.2" viewBox="0 0 7 9.2"><g fill="#f06464"><rect x="2.3" y="0" width="2.4" height="1.3" rx="0.5"/><rect x="0.2" y="0.9" width="6.6" height="1.3" rx="0.6"/><rect x="0.6" y="2.4" width="5.8" height="6.8" rx="1.6"/></g><path d="M2.6 4.3 V7.3 M4.4 4.3 V7.3" stroke="#fff" stroke-width="0.7"/></svg>
<div class="a" style="left:1042.3px;top:427.865px;font-size:9px;line-height:13px;color:#333;font-weight:400;-webkit-text-stroke:0.15px #333;">删除</div>
<div class="a" style="left:802.5px;top:485.0px;font-size:8px;line-height:13px;color:#c8c8c8;font-weight:400;-webkit-text-stroke:0.01px #c8c8c8;text-decoration:underline">首页</div>
<div class="a" style="left:822px;top:484px;width:16.5px;height:15.8px;background:#ccd3d8;border-radius:1px"></div>
<div class="a" style="left:826.8px;top:485.0px;font-size:10px;line-height:13px;color:#eef0f2;font-weight:400;-webkit-text-stroke:0.01px #eef0f2;">&lt;</div>
<div class="a" style="left:842.2px;top:484px;width:15px;height:15.8px;background:#fff;border:1px solid #f0f0f0;border-radius:1px"></div>
<div class="a" style="left:846.3px;top:485.0px;font-size:10px;line-height:13px;color:#666;font-weight:400;-webkit-text-stroke:0.01px #666;">&gt;</div>
<div class="a" style="left:862px;top:485.0px;font-size:8px;line-height:13px;color:#555;font-weight:400;-webkit-text-stroke:0.1px #555;text-decoration:underline">末页</div>
<div class="a" style="left:882px;top:484px;width:34px;height:15.8px;background:#fff;border:1px solid #eeeeee;border-radius:1px"></div>
<div class="a" style="left:896.5px;top:485.0px;font-size:8.5px;line-height:13px;color:#666;font-weight:400;-webkit-text-stroke:0.01px #666;">1</div>
<div class="a" style="left:921.8px;top:484px;width:33px;height:15.5px;background:#3d9be9;border-radius:2px"></div>
<div class="a" style="left:929.3px;top:485.0px;font-size:9px;line-height:13px;color:#fff;font-weight:400;-webkit-text-stroke:0.1px #fff;">跳转</div>
<div class="a" style="left:960.5px;top:485.0px;font-size:8.5px;line-height:13px;color:#555;font-weight:400;-webkit-text-stroke:0.1px #555;">1/4 本页</div>
<div class="a" style="left:994px;top:484px;width:27.5px;height:15.8px;background:#fff;border:1px solid #eeeeee;border-radius:1px"></div>
<div class="a" style="left:1002.5px;top:485.0px;font-size:8.5px;line-height:13px;color:#666;font-weight:400;-webkit-text-stroke:0.01px #666;">10</div>
<div class="a" style="left:1024px;top:485.0px;font-size:8.5px;line-height:13px;color:#555;font-weight:400;-webkit-text-stroke:0.1px #555;">条,总数<span style="color:#3a8ee6">39</span>条</div>
<div class="a" style="left:1077px;top:32px;width:3px;height:479px;background:#eef0f3;"></div>
</body></html>
